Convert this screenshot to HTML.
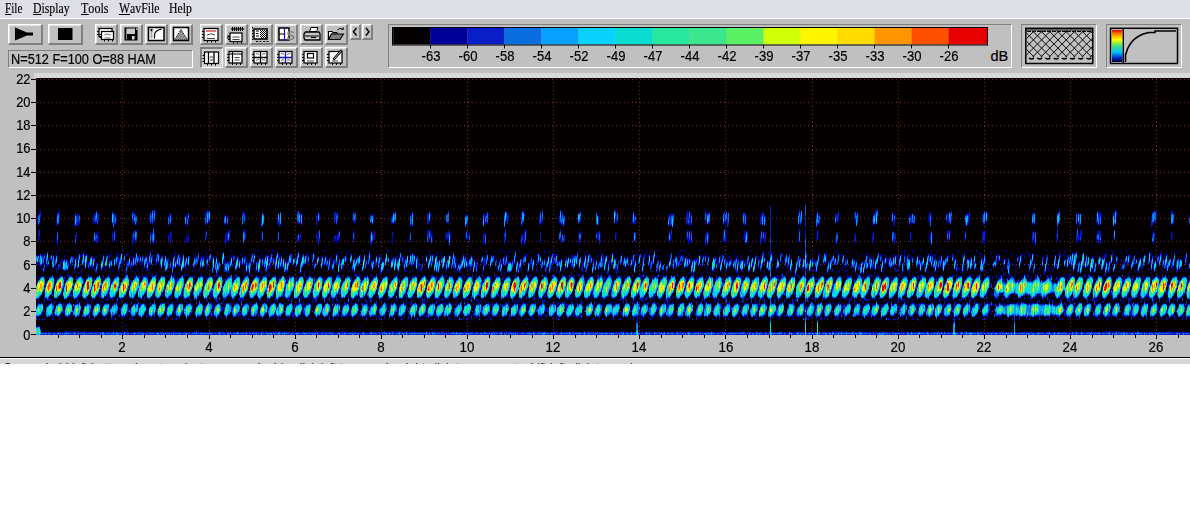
<!DOCTYPE html><html><head><meta charset="utf-8"><style>
*{margin:0;padding:0;box-sizing:border-box}
html,body{width:1190px;height:512px;overflow:hidden;background:#fff;position:relative;font-family:"Liberation Sans",sans-serif}
.a{position:absolute}
#menu{position:absolute;left:0;top:0;width:1190px;height:18px;background:#dddee6}
.m{position:absolute;top:2px;font-family:"Liberation Serif",serif;font-size:14px;line-height:14px;color:#000;white-space:nowrap;transform-origin:left top;-webkit-text-stroke:0.15px #000}
.m u{text-decoration:none;position:relative}
.m u:after{content:"";position:absolute;left:0;right:0;top:13px;height:1px;background:#000}
#tb{position:absolute;left:0;top:18px;width:1190px;height:339px;background:#c0c0c0;border-top:1px solid #fff}
.b{position:absolute;border-top:1px solid #fff;border-left:1px solid #fff;border-right:2px solid #808080;border-bottom:2px solid #808080;background:#c0c0c0;box-shadow:inset 1px 1px 0 #e4e4e4}
.bp{position:absolute;border-top:2px solid #808080;border-left:2px solid #808080;border-right:1px solid #fff;border-bottom:1px solid #fff;background:conic-gradient(#e4e4e4 25%,#c0c0c0 0 50%,#e4e4e4 0 75%,#c0c0c0 0) 0 0/2px 2px}
.sk{position:absolute;border-top:1px solid #808080;border-left:1px solid #808080;border-right:1px solid #fff;border-bottom:1px solid #fff;background:#c0c0c0}
.t{position:absolute;font-size:14px;line-height:14px;color:#000;white-space:nowrap;-webkit-text-stroke:0.2px #000}
</style></head><body>
<div id="menu">
<span class="m" style="left:4.5px;transform:scaleX(0.8)"><u>F</u>ile</span>
<span class="m" style="left:33px;transform:scaleX(0.84)"><u>D</u>isplay</span>
<span class="m" style="left:80.5px;transform:scaleX(0.86)"><u>T</u>ools</span>
<span class="m" style="left:118.5px;transform:scaleX(0.84)"><u>W</u>avFile</span>
<span class="m" style="left:169px;transform:scaleX(0.84)">Help</span>
</div>
<div id="tb"></div>
<div class="b" style="left:8px;top:24px;width:35px;height:21px"></div>
<div class="b" style="left:48px;top:24px;width:35px;height:21px"></div>
<div class="b" style="left:95px;top:24px;width:23px;height:21px"></div>
<div class="b" style="left:120px;top:24px;width:23px;height:21px"></div>
<div class="b" style="left:145px;top:24px;width:23px;height:21px"></div>
<div class="b" style="left:170px;top:24px;width:23px;height:21px"></div>
<div class="b" style="left:200px;top:24px;width:23px;height:21px"></div>
<div class="b" style="left:225px;top:24px;width:23px;height:21px"></div>
<div class="b" style="left:250px;top:24px;width:23px;height:21px"></div>
<div class="b" style="left:275px;top:24px;width:23px;height:21px"></div>
<div class="b" style="left:300px;top:24px;width:23px;height:21px"></div>
<div class="b" style="left:325px;top:24px;width:23px;height:21px"></div>
<div class="b" style="left:350px;top:24px;width:11px;height:16px"></div>
<div class="b" style="left:362px;top:24px;width:11px;height:16px"></div>
<div class="sk" style="left:8px;top:50px;width:185px;height:18px"></div>
<div class="t" style="left:10.5px;top:52px;transform:scaleX(0.91);transform-origin:left top">N=512 F=100 O=88 HAM</div>
<div class="bp" style="left:200px;top:47px;width:23px;height:21px"></div>
<div class="b" style="left:225px;top:47px;width:23px;height:21px"></div>
<div class="b" style="left:250px;top:47px;width:23px;height:21px"></div>
<div class="b" style="left:275px;top:47px;width:23px;height:21px"></div>
<div class="b" style="left:300px;top:47px;width:23px;height:21px"></div>
<div class="b" style="left:325px;top:47px;width:23px;height:21px"></div>
<div class="sk" style="left:388px;top:24px;width:624px;height:44px"></div>
<div class="sk" style="left:1021px;top:24px;width:76px;height:44px"></div>
<div class="sk" style="left:1106px;top:24px;width:76px;height:44px"></div>
<div class="t" style="left:410.5px;width:40px;text-align:center;top:48.5px;font-size:14.5px;transform:scaleX(0.9)">-63</div>
<div class="t" style="left:447.5px;width:40px;text-align:center;top:48.5px;font-size:14.5px;transform:scaleX(0.9)">-60</div>
<div class="t" style="left:484.5px;width:40px;text-align:center;top:48.5px;font-size:14.5px;transform:scaleX(0.9)">-58</div>
<div class="t" style="left:521.5px;width:40px;text-align:center;top:48.5px;font-size:14.5px;transform:scaleX(0.9)">-54</div>
<div class="t" style="left:558.5px;width:40px;text-align:center;top:48.5px;font-size:14.5px;transform:scaleX(0.9)">-52</div>
<div class="t" style="left:595.5px;width:40px;text-align:center;top:48.5px;font-size:14.5px;transform:scaleX(0.9)">-49</div>
<div class="t" style="left:632.5px;width:40px;text-align:center;top:48.5px;font-size:14.5px;transform:scaleX(0.9)">-47</div>
<div class="t" style="left:669.5px;width:40px;text-align:center;top:48.5px;font-size:14.5px;transform:scaleX(0.9)">-44</div>
<div class="t" style="left:706.5px;width:40px;text-align:center;top:48.5px;font-size:14.5px;transform:scaleX(0.9)">-42</div>
<div class="t" style="left:743.5px;width:40px;text-align:center;top:48.5px;font-size:14.5px;transform:scaleX(0.9)">-39</div>
<div class="t" style="left:780.5px;width:40px;text-align:center;top:48.5px;font-size:14.5px;transform:scaleX(0.9)">-37</div>
<div class="t" style="left:817.5px;width:40px;text-align:center;top:48.5px;font-size:14.5px;transform:scaleX(0.9)">-35</div>
<div class="t" style="left:854.5px;width:40px;text-align:center;top:48.5px;font-size:14.5px;transform:scaleX(0.9)">-33</div>
<div class="t" style="left:891.5px;width:40px;text-align:center;top:48.5px;font-size:14.5px;transform:scaleX(0.9)">-30</div>
<div class="t" style="left:928.5px;width:40px;text-align:center;top:48.5px;font-size:14.5px;transform:scaleX(0.9)">-26</div>
<div class="t" style="left:990.5px;top:48.5px;font-size:14.5px;transform:scaleX(1.0);transform-origin:left top">dB</div>
<div class="t" style="left:0;width:30.5px;text-align:right;top:327.5px;transform:scaleX(0.92);transform-origin:right top">0</div>
<div class="a" style="left:31px;top:334px;width:5px;height:1px;background:#000"></div>
<div class="t" style="left:0;width:30.5px;text-align:right;top:304.2px;transform:scaleX(0.92);transform-origin:right top">2</div>
<div class="a" style="left:31px;top:311px;width:5px;height:1px;background:#000"></div>
<div class="t" style="left:0;width:30.5px;text-align:right;top:281.0px;transform:scaleX(0.92);transform-origin:right top">4</div>
<div class="a" style="left:31px;top:288px;width:5px;height:1px;background:#000"></div>
<div class="t" style="left:0;width:30.5px;text-align:right;top:257.7px;transform:scaleX(0.92);transform-origin:right top">6</div>
<div class="a" style="left:31px;top:264px;width:5px;height:1px;background:#000"></div>
<div class="t" style="left:0;width:30.5px;text-align:right;top:234.4px;transform:scaleX(0.92);transform-origin:right top">8</div>
<div class="a" style="left:31px;top:241px;width:5px;height:1px;background:#000"></div>
<div class="t" style="left:0;width:30.5px;text-align:right;top:211.1px;transform:scaleX(0.92);transform-origin:right top">10</div>
<div class="a" style="left:31px;top:218px;width:5px;height:1px;background:#000"></div>
<div class="t" style="left:0;width:30.5px;text-align:right;top:187.9px;transform:scaleX(0.92);transform-origin:right top">12</div>
<div class="a" style="left:31px;top:195px;width:5px;height:1px;background:#000"></div>
<div class="t" style="left:0;width:30.5px;text-align:right;top:164.6px;transform:scaleX(0.92);transform-origin:right top">14</div>
<div class="a" style="left:31px;top:172px;width:5px;height:1px;background:#000"></div>
<div class="t" style="left:0;width:30.5px;text-align:right;top:141.3px;transform:scaleX(0.92);transform-origin:right top">16</div>
<div class="a" style="left:31px;top:149px;width:5px;height:1px;background:#000"></div>
<div class="t" style="left:0;width:30.5px;text-align:right;top:118.0px;transform:scaleX(0.92);transform-origin:right top">18</div>
<div class="a" style="left:31px;top:125px;width:5px;height:1px;background:#000"></div>
<div class="t" style="left:0;width:30.5px;text-align:right;top:94.8px;transform:scaleX(0.92);transform-origin:right top">20</div>
<div class="a" style="left:31px;top:102px;width:5px;height:1px;background:#000"></div>
<div class="t" style="left:0;width:30.5px;text-align:right;top:71.5px;transform:scaleX(0.92);transform-origin:right top">22</div>
<div class="a" style="left:31px;top:79px;width:5px;height:1px;background:#000"></div>
<div class="t" style="left:102.4px;width:40px;text-align:center;top:339.5px;transform:scaleX(0.95)">2</div>
<div class="t" style="left:188.5px;width:40px;text-align:center;top:339.5px;transform:scaleX(0.95)">4</div>
<div class="t" style="left:274.7px;width:40px;text-align:center;top:339.5px;transform:scaleX(0.95)">6</div>
<div class="t" style="left:360.8px;width:40px;text-align:center;top:339.5px;transform:scaleX(0.95)">8</div>
<div class="t" style="left:447.0px;width:40px;text-align:center;top:339.5px;transform:scaleX(0.95)">10</div>
<div class="t" style="left:533.2px;width:40px;text-align:center;top:339.5px;transform:scaleX(0.95)">12</div>
<div class="t" style="left:619.3px;width:40px;text-align:center;top:339.5px;transform:scaleX(0.95)">14</div>
<div class="t" style="left:705.5px;width:40px;text-align:center;top:339.5px;transform:scaleX(0.95)">16</div>
<div class="t" style="left:791.6px;width:40px;text-align:center;top:339.5px;transform:scaleX(0.95)">18</div>
<div class="t" style="left:877.8px;width:40px;text-align:center;top:339.5px;transform:scaleX(0.95)">20</div>
<div class="t" style="left:964.0px;width:40px;text-align:center;top:339.5px;transform:scaleX(0.95)">22</div>
<div class="t" style="left:1050.1px;width:40px;text-align:center;top:339.5px;transform:scaleX(0.95)">24</div>
<div class="t" style="left:1136.3px;width:40px;text-align:center;top:339.5px;transform:scaleX(0.95)">26</div>
<div class="a" style="left:58px;top:335px;width:1px;height:2.5px;background:#000"></div>
<div class="a" style="left:79px;top:335px;width:1px;height:2.5px;background:#000"></div>
<div class="a" style="left:101px;top:335px;width:1px;height:2.5px;background:#000"></div>
<div class="a" style="left:122px;top:335px;width:1px;height:4px;background:#000"></div>
<div class="a" style="left:144px;top:335px;width:1px;height:2.5px;background:#000"></div>
<div class="a" style="left:165px;top:335px;width:1px;height:2.5px;background:#000"></div>
<div class="a" style="left:187px;top:335px;width:1px;height:2.5px;background:#000"></div>
<div class="a" style="left:209px;top:335px;width:1px;height:4px;background:#000"></div>
<div class="a" style="left:230px;top:335px;width:1px;height:2.5px;background:#000"></div>
<div class="a" style="left:252px;top:335px;width:1px;height:2.5px;background:#000"></div>
<div class="a" style="left:273px;top:335px;width:1px;height:2.5px;background:#000"></div>
<div class="a" style="left:295px;top:335px;width:1px;height:4px;background:#000"></div>
<div class="a" style="left:316px;top:335px;width:1px;height:2.5px;background:#000"></div>
<div class="a" style="left:338px;top:335px;width:1px;height:2.5px;background:#000"></div>
<div class="a" style="left:359px;top:335px;width:1px;height:2.5px;background:#000"></div>
<div class="a" style="left:381px;top:335px;width:1px;height:4px;background:#000"></div>
<div class="a" style="left:402px;top:335px;width:1px;height:2.5px;background:#000"></div>
<div class="a" style="left:424px;top:335px;width:1px;height:2.5px;background:#000"></div>
<div class="a" style="left:445px;top:335px;width:1px;height:2.5px;background:#000"></div>
<div class="a" style="left:467px;top:335px;width:1px;height:4px;background:#000"></div>
<div class="a" style="left:489px;top:335px;width:1px;height:2.5px;background:#000"></div>
<div class="a" style="left:510px;top:335px;width:1px;height:2.5px;background:#000"></div>
<div class="a" style="left:532px;top:335px;width:1px;height:2.5px;background:#000"></div>
<div class="a" style="left:553px;top:335px;width:1px;height:4px;background:#000"></div>
<div class="a" style="left:575px;top:335px;width:1px;height:2.5px;background:#000"></div>
<div class="a" style="left:596px;top:335px;width:1px;height:2.5px;background:#000"></div>
<div class="a" style="left:618px;top:335px;width:1px;height:2.5px;background:#000"></div>
<div class="a" style="left:639px;top:335px;width:1px;height:4px;background:#000"></div>
<div class="a" style="left:661px;top:335px;width:1px;height:2.5px;background:#000"></div>
<div class="a" style="left:682px;top:335px;width:1px;height:2.5px;background:#000"></div>
<div class="a" style="left:704px;top:335px;width:1px;height:2.5px;background:#000"></div>
<div class="a" style="left:725px;top:335px;width:1px;height:4px;background:#000"></div>
<div class="a" style="left:747px;top:335px;width:1px;height:2.5px;background:#000"></div>
<div class="a" style="left:769px;top:335px;width:1px;height:2.5px;background:#000"></div>
<div class="a" style="left:790px;top:335px;width:1px;height:2.5px;background:#000"></div>
<div class="a" style="left:812px;top:335px;width:1px;height:4px;background:#000"></div>
<div class="a" style="left:833px;top:335px;width:1px;height:2.5px;background:#000"></div>
<div class="a" style="left:855px;top:335px;width:1px;height:2.5px;background:#000"></div>
<div class="a" style="left:876px;top:335px;width:1px;height:2.5px;background:#000"></div>
<div class="a" style="left:898px;top:335px;width:1px;height:4px;background:#000"></div>
<div class="a" style="left:919px;top:335px;width:1px;height:2.5px;background:#000"></div>
<div class="a" style="left:941px;top:335px;width:1px;height:2.5px;background:#000"></div>
<div class="a" style="left:962px;top:335px;width:1px;height:2.5px;background:#000"></div>
<div class="a" style="left:984px;top:335px;width:1px;height:4px;background:#000"></div>
<div class="a" style="left:1006px;top:335px;width:1px;height:2.5px;background:#000"></div>
<div class="a" style="left:1027px;top:335px;width:1px;height:2.5px;background:#000"></div>
<div class="a" style="left:1049px;top:335px;width:1px;height:2.5px;background:#000"></div>
<div class="a" style="left:1070px;top:335px;width:1px;height:4px;background:#000"></div>
<div class="a" style="left:1092px;top:335px;width:1px;height:2.5px;background:#000"></div>
<div class="a" style="left:1113px;top:335px;width:1px;height:2.5px;background:#000"></div>
<div class="a" style="left:1135px;top:335px;width:1px;height:2.5px;background:#000"></div>
<div class="a" style="left:1156px;top:335px;width:1px;height:4px;background:#000"></div>
<div class="a" style="left:1178px;top:335px;width:1px;height:2.5px;background:#000"></div>
<div class="a" style="left:34px;top:73px;width:1156px;height:5px;background:#d8d8d8"></div>
<svg class="a" style="left:36px;top:78px" width="1154" height="257">
<defs><filter id="sp" x="0" y="0" width="1154" height="257" filterUnits="userSpaceOnUse" color-interpolation-filters="sRGB"><feColorMatrix in="SourceGraphic" type="matrix" values="1 0 0 0 0 1 0 0 0 0 1 0 0 0 0 0 0 0 0 1" result="r"/><feGaussianBlur in="r" stdDeviation="0.7 1.2" result="field"/><feTurbulence type="fractalNoise" baseFrequency="0.6 0.05" numOctaves="2" seed="4" result="noise"/><feColorMatrix in="noise" type="matrix" values="1.7 0 0 0 -0.35 1.7 0 0 0 -0.35 1.7 0 0 0 -0.35 0 0 0 0 1" result="ng"/><feComposite in="field" in2="ng" operator="arithmetic" k1="0.8" k2="0.55" k3="0" k4="0" result="mod0"/><feColorMatrix in="SourceGraphic" type="matrix" values="0 0 1 0 0 0 0 1 0 0 0 0 1 0 0 0 0 0 0 1" result="hm"/><feTurbulence type="fractalNoise" baseFrequency="0.6 0.2" numOctaves="2" seed="9" result="hn"/><feComponentTransfer in="hn" result="hns"><feFuncR type="linear" slope="2.5" intercept="-1.25"/><feFuncG type="linear" slope="2.5" intercept="-1.25"/><feFuncB type="linear" slope="2.5" intercept="-1.25"/><feFuncA type="table" tableValues="1 1"/></feComponentTransfer><feColorMatrix in="hns" type="matrix" values="1 0 0 0 0 1 0 0 0 0 1 0 0 0 0 0 0 0 0 1" result="hng"/><feComposite in="hm" in2="hng" operator="arithmetic" k1="0.45" k2="0" k3="0" k4="0" result="haze"/><feComposite in="mod0" in2="haze" operator="arithmetic" k1="0" k2="1" k3="1" k4="0" result="mod"/><feComponentTransfer in="mod" result="cm"><feFuncR type="discrete" tableValues="0.020 0.000 0.039 0.039 0.039 0.039 0.039 0.157 0.235 0.353 0.824 1.000 1.000 1.000 1.000 0.902"/><feFuncG type="discrete" tableValues="0.000 0.000 0.118 0.431 0.627 0.824 0.863 0.902 0.902 0.941 1.000 0.961 0.863 0.588 0.314 0.000"/><feFuncB type="discrete" tableValues="0.000 0.588 0.784 0.878 1.000 1.000 0.824 0.627 0.549 0.392 0.039 0.000 0.000 0.000 0.000 0.000"/><feFuncA type="table" tableValues="1 1"/></feComponentTransfer><feComponentTransfer in="mod" result="mi"><feFuncR type="discrete" tableValues="1 0 0 0 0 0 0 0 0 0 0 0 0 0 0 0 "/><feFuncG type="discrete" tableValues="1 0 0 0 0 0 0 0 0 0 0 0 0 0 0 0 "/><feFuncB type="discrete" tableValues="1 0 0 0 0 0 0 0 0 0 0 0 0 0 0 0 "/><feFuncA type="table" tableValues="1 1"/></feComponentTransfer><feColorMatrix in="SourceGraphic" type="matrix" values="0 0.42 0 0 0 0 0.2 0 0 0 0 0.22 0 0 0 0 0 0 0 1" result="grid"/><feComposite in="grid" in2="mi" operator="arithmetic" k1="1" k2="0" k3="0" k4="0" result="gm"/><feComposite in="cm" in2="gm" operator="arithmetic" k1="0" k2="1" k3="1" k4="0" result="fin"/><feGaussianBlur in="fin" stdDeviation="0.6"/></filter></defs>
<g filter="url(#sp)"><rect width="1154" height="257" fill="#000"/>
<g fill="#00f"><rect x="0" y="122" width="1154" height="50" fill-opacity="0.1"/><rect x="0" y="172" width="1154" height="25" fill-opacity="0.35"/><rect x="0" y="197" width="1154" height="45" fill-opacity="0.6"/><rect x="0" y="242" width="1154" height="14" fill-opacity="0.2"/></g>
<g stroke="#0f0" stroke-width="1" stroke-dasharray="1 3"><line x1="0" y1="233.5" x2="1154" y2="233.5"/><line x1="0" y1="210.5" x2="1154" y2="210.5"/><line x1="0" y1="186.5" x2="1154" y2="186.5"/><line x1="0" y1="163.5" x2="1154" y2="163.5"/><line x1="0" y1="140.5" x2="1154" y2="140.5"/><line x1="0" y1="117.5" x2="1154" y2="117.5"/><line x1="0" y1="94.5" x2="1154" y2="94.5"/><line x1="0" y1="71.5" x2="1154" y2="71.5"/><line x1="0" y1="47.5" x2="1154" y2="47.5"/><line x1="0" y1="24.5" x2="1154" y2="24.5"/><line x1="0" y1="1.5" x2="1154" y2="1.5"/><line x1="0" y1="1.5" x2="1154" y2="1.5"/><line x1="86.5" y1="0" x2="86.5" y2="257"/><line x1="173.5" y1="0" x2="173.5" y2="257"/><line x1="259.5" y1="0" x2="259.5" y2="257"/><line x1="345.5" y1="0" x2="345.5" y2="257"/><line x1="431.5" y1="0" x2="431.5" y2="257"/><line x1="517.5" y1="0" x2="517.5" y2="257"/><line x1="603.5" y1="0" x2="603.5" y2="257"/><line x1="689.5" y1="0" x2="689.5" y2="257"/><line x1="776.5" y1="0" x2="776.5" y2="257"/><line x1="862.5" y1="0" x2="862.5" y2="257"/><line x1="948.5" y1="0" x2="948.5" y2="257"/><line x1="1034.5" y1="0" x2="1034.5" y2="257"/><line x1="1120.5" y1="0" x2="1120.5" y2="257"/></g>
<g fill="#f00">
<rect x="0" y="255" width="1154" height="1.2" fill-opacity="0.55"/>
<rect x="734.0" y="127" width="1" height="130" fill-opacity="0.18"/>
<rect x="734.0" y="245" width="1" height="12" fill-opacity="0.3"/>
<rect x="769.0" y="127" width="1" height="130" fill-opacity="0.18"/>
<rect x="769.0" y="245" width="1" height="12" fill-opacity="0.3"/>
<rect x="600.5" y="222" width="1" height="35" fill-opacity="0.18"/>
<rect x="600.5" y="245" width="1" height="12" fill-opacity="0.3"/>
<rect x="781.0" y="242" width="1" height="15" fill-opacity="0.21"/>
<rect x="781.0" y="245" width="1" height="12" fill-opacity="0.3"/>
<rect x="917.5" y="222" width="1" height="35" fill-opacity="0.18"/>
<rect x="917.5" y="245" width="1" height="12" fill-opacity="0.3"/>
<rect x="978.0" y="237" width="1" height="20" fill-opacity="0.18"/>
<rect x="978.0" y="245" width="1" height="12" fill-opacity="0.3"/>
<ellipse cx="2.0" cy="253.0" rx="2.5" ry="4.0" fill-opacity="0.50"/>
<ellipse cx="994.0" cy="210.0" rx="36.0" ry="6.0" fill-opacity="0.36"/>
<ellipse cx="994.0" cy="232.0" rx="36.0" ry="6.0" fill-opacity="0.28"/>
<ellipse cx="4.1" cy="209.5" rx="3.8" ry="11.0" fill-opacity="0.45" transform="rotate(18 4.1 209.5)"/>
<ellipse cx="4.0" cy="208.5" rx="2.9" ry="6.0" fill-opacity="0.60" transform="rotate(20 4.0 208.5)"/>
<ellipse cx="4.3" cy="208.0" rx="1.7" ry="2.3" fill-opacity="0.40" transform="rotate(20 4.3 208.0)"/>
<ellipse cx="3.4" cy="232.0" rx="3.4" ry="6.6" fill-opacity="0.36" transform="rotate(20 3.4 232.0)"/>
<ellipse cx="4.0" cy="232.0" rx="1.9" ry="2.8" fill-opacity="0.38" transform="rotate(20 4.0 232.0)"/>
<ellipse cx="0.3" cy="181.3" rx="0.7" ry="4.9" fill-opacity="0.35" transform="rotate(8 0.3 181.3)"/>
<ellipse cx="1.9" cy="180.7" rx="0.7" ry="3.8" fill-opacity="0.39" transform="rotate(8 1.9 180.7)"/>
<ellipse cx="4.3" cy="180.7" rx="0.7" ry="4.6" fill-opacity="0.29" transform="rotate(8 4.3 180.7)"/>
<ellipse cx="5.4" cy="182.8" rx="0.7" ry="5.1" fill-opacity="0.40" transform="rotate(8 5.4 182.8)"/>
<ellipse cx="7.6" cy="181.4" rx="0.7" ry="4.8" fill-opacity="0.31" transform="rotate(8 7.6 181.4)"/>
<ellipse cx="2.3" cy="142.2" rx="0.8" ry="6.2" fill-opacity="0.24" transform="rotate(3 2.3 142.2)"/>
<ellipse cx="3.9" cy="138.6" rx="0.8" ry="6.6" fill-opacity="0.21" transform="rotate(3 3.9 138.6)"/>
<ellipse cx="2.8" cy="158.3" rx="0.8" ry="8.0" fill-opacity="0.16" transform="rotate(3 2.8 158.3)"/>
<ellipse cx="13.5" cy="209.5" rx="3.8" ry="11.0" fill-opacity="0.42" transform="rotate(18 13.5 209.5)"/>
<ellipse cx="13.2" cy="208.5" rx="2.9" ry="6.0" fill-opacity="0.56" transform="rotate(20 13.2 208.5)"/>
<ellipse cx="13.7" cy="232.0" rx="3.4" ry="6.6" fill-opacity="0.33" transform="rotate(20 13.7 232.0)"/>
<ellipse cx="13.2" cy="232.0" rx="1.9" ry="2.8" fill-opacity="0.35" transform="rotate(20 13.2 232.0)"/>
<ellipse cx="8.2" cy="189.6" rx="0.7" ry="4.4" fill-opacity="0.27" transform="rotate(8 8.2 189.6)"/>
<ellipse cx="10.9" cy="180.8" rx="0.7" ry="6.4" fill-opacity="0.39" transform="rotate(8 10.9 180.8)"/>
<ellipse cx="12.4" cy="185.0" rx="0.7" ry="3.1" fill-opacity="0.35" transform="rotate(8 12.4 185.0)"/>
<ellipse cx="15.1" cy="180.1" rx="0.7" ry="3.3" fill-opacity="0.27" transform="rotate(8 15.1 180.1)"/>
<ellipse cx="16.9" cy="182.6" rx="0.7" ry="4.7" fill-opacity="0.31" transform="rotate(8 16.9 182.6)"/>
<ellipse cx="22.8" cy="209.5" rx="3.8" ry="11.0" fill-opacity="0.46" transform="rotate(18 22.8 209.5)"/>
<ellipse cx="22.6" cy="208.5" rx="2.9" ry="6.0" fill-opacity="0.62" transform="rotate(20 22.6 208.5)"/>
<ellipse cx="22.9" cy="208.0" rx="1.7" ry="2.3" fill-opacity="0.41" transform="rotate(20 22.9 208.0)"/>
<ellipse cx="22.5" cy="232.0" rx="3.4" ry="6.6" fill-opacity="0.37" transform="rotate(20 22.5 232.0)"/>
<ellipse cx="22.6" cy="232.0" rx="1.9" ry="2.8" fill-opacity="0.39" transform="rotate(20 22.6 232.0)"/>
<ellipse cx="17.4" cy="187.5" rx="0.7" ry="3.1" fill-opacity="0.34" transform="rotate(8 17.4 187.5)"/>
<ellipse cx="20.3" cy="182.3" rx="0.7" ry="5.8" fill-opacity="0.33" transform="rotate(8 20.3 182.3)"/>
<ellipse cx="22.7" cy="189.2" rx="0.7" ry="4.0" fill-opacity="0.26" transform="rotate(8 22.7 189.2)"/>
<ellipse cx="24.4" cy="186.8" rx="0.7" ry="3.8" fill-opacity="0.28" transform="rotate(8 24.4 186.8)"/>
<ellipse cx="27.6" cy="186.6" rx="0.7" ry="4.8" fill-opacity="0.38" transform="rotate(8 27.6 186.6)"/>
<ellipse cx="21.3" cy="141.7" rx="0.8" ry="7.1" fill-opacity="0.22" transform="rotate(3 21.3 141.7)"/>
<ellipse cx="22.7" cy="139.4" rx="0.8" ry="7.7" fill-opacity="0.23" transform="rotate(3 22.7 139.4)"/>
<ellipse cx="21.4" cy="160.3" rx="0.8" ry="7.4" fill-opacity="0.22" transform="rotate(3 21.4 160.3)"/>
<ellipse cx="32.2" cy="209.5" rx="3.8" ry="11.0" fill-opacity="0.47" transform="rotate(18 32.2 209.5)"/>
<ellipse cx="32.4" cy="208.5" rx="2.9" ry="6.0" fill-opacity="0.62" transform="rotate(20 32.4 208.5)"/>
<ellipse cx="32.7" cy="208.0" rx="1.7" ry="2.3" fill-opacity="0.41" transform="rotate(20 32.7 208.0)"/>
<ellipse cx="32.3" cy="232.0" rx="3.4" ry="6.6" fill-opacity="0.37" transform="rotate(20 32.3 232.0)"/>
<ellipse cx="32.4" cy="232.0" rx="1.9" ry="2.8" fill-opacity="0.39" transform="rotate(20 32.4 232.0)"/>
<ellipse cx="28.6" cy="188.3" rx="0.7" ry="4.5" fill-opacity="0.33" transform="rotate(8 28.6 188.3)"/>
<ellipse cx="30.4" cy="187.2" rx="0.7" ry="6.4" fill-opacity="0.35" transform="rotate(8 30.4 187.2)"/>
<ellipse cx="32.0" cy="188.3" rx="0.7" ry="4.1" fill-opacity="0.35" transform="rotate(8 32.0 188.3)"/>
<ellipse cx="34.8" cy="182.8" rx="0.7" ry="4.4" fill-opacity="0.35" transform="rotate(8 34.8 182.8)"/>
<ellipse cx="41.8" cy="209.5" rx="3.8" ry="11.0" fill-opacity="0.42" transform="rotate(18 41.8 209.5)"/>
<ellipse cx="41.7" cy="208.5" rx="2.9" ry="6.0" fill-opacity="0.56" transform="rotate(20 41.7 208.5)"/>
<ellipse cx="42.0" cy="208.0" rx="1.7" ry="2.3" fill-opacity="0.37" transform="rotate(20 42.0 208.0)"/>
<ellipse cx="41.1" cy="232.0" rx="3.4" ry="6.6" fill-opacity="0.34" transform="rotate(20 41.1 232.0)"/>
<ellipse cx="41.7" cy="232.0" rx="1.9" ry="2.8" fill-opacity="0.35" transform="rotate(20 41.7 232.0)"/>
<ellipse cx="36.8" cy="181.4" rx="0.7" ry="3.2" fill-opacity="0.35" transform="rotate(8 36.8 181.4)"/>
<ellipse cx="39.3" cy="186.3" rx="0.7" ry="5.6" fill-opacity="0.37" transform="rotate(8 39.3 186.3)"/>
<ellipse cx="42.3" cy="186.8" rx="0.7" ry="3.8" fill-opacity="0.33" transform="rotate(8 42.3 186.8)"/>
<ellipse cx="43.3" cy="180.1" rx="0.7" ry="4.9" fill-opacity="0.36" transform="rotate(8 43.3 180.1)"/>
<ellipse cx="39.5" cy="142.3" rx="0.8" ry="6.3" fill-opacity="0.32" transform="rotate(3 39.5 142.3)"/>
<ellipse cx="41.0" cy="141.9" rx="0.8" ry="6.9" fill-opacity="0.23" transform="rotate(3 41.0 141.9)"/>
<ellipse cx="43.0" cy="142.1" rx="0.8" ry="5.9" fill-opacity="0.25" transform="rotate(3 43.0 142.1)"/>
<ellipse cx="39.9" cy="160.6" rx="0.8" ry="5.5" fill-opacity="0.21" transform="rotate(3 39.9 160.6)"/>
<ellipse cx="51.3" cy="209.5" rx="3.8" ry="11.0" fill-opacity="0.46" transform="rotate(18 51.3 209.5)"/>
<ellipse cx="51.0" cy="208.5" rx="2.9" ry="6.0" fill-opacity="0.61" transform="rotate(20 51.0 208.5)"/>
<ellipse cx="50.9" cy="232.0" rx="3.4" ry="6.6" fill-opacity="0.37" transform="rotate(20 50.9 232.0)"/>
<ellipse cx="51.0" cy="232.0" rx="1.9" ry="2.8" fill-opacity="0.39" transform="rotate(20 51.0 232.0)"/>
<ellipse cx="47.3" cy="181.0" rx="0.7" ry="6.5" fill-opacity="0.37" transform="rotate(8 47.3 181.0)"/>
<ellipse cx="49.4" cy="181.2" rx="0.7" ry="4.0" fill-opacity="0.31" transform="rotate(8 49.4 181.2)"/>
<ellipse cx="50.2" cy="183.1" rx="0.7" ry="6.9" fill-opacity="0.39" transform="rotate(8 50.2 183.1)"/>
<ellipse cx="52.7" cy="187.2" rx="0.7" ry="3.1" fill-opacity="0.33" transform="rotate(8 52.7 187.2)"/>
<ellipse cx="54.6" cy="183.4" rx="0.7" ry="4.7" fill-opacity="0.30" transform="rotate(8 54.6 183.4)"/>
<ellipse cx="60.1" cy="209.5" rx="3.8" ry="11.0" fill-opacity="0.46" transform="rotate(18 60.1 209.5)"/>
<ellipse cx="60.4" cy="208.5" rx="2.9" ry="6.0" fill-opacity="0.62" transform="rotate(20 60.4 208.5)"/>
<ellipse cx="60.3" cy="232.0" rx="3.4" ry="6.6" fill-opacity="0.37" transform="rotate(20 60.3 232.0)"/>
<ellipse cx="60.4" cy="232.0" rx="1.9" ry="2.8" fill-opacity="0.39" transform="rotate(20 60.4 232.0)"/>
<ellipse cx="55.4" cy="183.4" rx="0.7" ry="6.2" fill-opacity="0.28" transform="rotate(8 55.4 183.4)"/>
<ellipse cx="57.5" cy="185.2" rx="0.7" ry="5.9" fill-opacity="0.38" transform="rotate(8 57.5 185.2)"/>
<ellipse cx="60.6" cy="189.5" rx="0.7" ry="5.0" fill-opacity="0.39" transform="rotate(8 60.6 189.5)"/>
<ellipse cx="58.3" cy="140.7" rx="0.8" ry="5.1" fill-opacity="0.26" transform="rotate(3 58.3 140.7)"/>
<ellipse cx="60.2" cy="139.5" rx="0.8" ry="6.8" fill-opacity="0.31" transform="rotate(3 60.2 139.5)"/>
<ellipse cx="61.9" cy="140.9" rx="0.8" ry="5.6" fill-opacity="0.22" transform="rotate(3 61.9 140.9)"/>
<ellipse cx="58.4" cy="159.3" rx="0.8" ry="4.8" fill-opacity="0.20" transform="rotate(3 58.4 159.3)"/>
<ellipse cx="60.1" cy="159.4" rx="0.8" ry="4.1" fill-opacity="0.25" transform="rotate(3 60.1 159.4)"/>
<ellipse cx="62.0" cy="158.6" rx="0.8" ry="7.2" fill-opacity="0.21" transform="rotate(3 62.0 158.6)"/>
<ellipse cx="69.5" cy="209.5" rx="3.8" ry="11.0" fill-opacity="0.41" transform="rotate(18 69.5 209.5)"/>
<ellipse cx="69.3" cy="208.5" rx="2.9" ry="6.0" fill-opacity="0.55" transform="rotate(20 69.3 208.5)"/>
<ellipse cx="69.6" cy="208.0" rx="1.7" ry="2.3" fill-opacity="0.37" transform="rotate(20 69.6 208.0)"/>
<ellipse cx="69.4" cy="232.0" rx="3.4" ry="6.6" fill-opacity="0.33" transform="rotate(20 69.4 232.0)"/>
<ellipse cx="69.3" cy="232.0" rx="1.9" ry="2.8" fill-opacity="0.35" transform="rotate(20 69.3 232.0)"/>
<ellipse cx="65.5" cy="188.0" rx="0.7" ry="4.6" fill-opacity="0.29" transform="rotate(8 65.5 188.0)"/>
<ellipse cx="67.0" cy="183.4" rx="0.7" ry="6.6" fill-opacity="0.39" transform="rotate(8 67.0 183.4)"/>
<ellipse cx="69.9" cy="185.2" rx="0.7" ry="3.4" fill-opacity="0.32" transform="rotate(8 69.9 185.2)"/>
<ellipse cx="70.7" cy="182.6" rx="0.7" ry="5.8" fill-opacity="0.40" transform="rotate(8 70.7 182.6)"/>
<ellipse cx="78.3" cy="209.5" rx="3.8" ry="11.0" fill-opacity="0.36" transform="rotate(18 78.3 209.5)"/>
<ellipse cx="78.6" cy="208.5" rx="2.9" ry="6.0" fill-opacity="0.47" transform="rotate(20 78.6 208.5)"/>
<ellipse cx="78.9" cy="208.0" rx="1.7" ry="2.3" fill-opacity="0.32" transform="rotate(20 78.9 208.0)"/>
<ellipse cx="78.2" cy="232.0" rx="3.4" ry="6.6" fill-opacity="0.28" transform="rotate(20 78.2 232.0)"/>
<ellipse cx="78.6" cy="232.0" rx="1.9" ry="2.8" fill-opacity="0.30" transform="rotate(20 78.6 232.0)"/>
<ellipse cx="73.9" cy="186.2" rx="0.7" ry="3.4" fill-opacity="0.36" transform="rotate(8 73.9 186.2)"/>
<ellipse cx="75.7" cy="185.1" rx="0.7" ry="4.0" fill-opacity="0.29" transform="rotate(8 75.7 185.1)"/>
<ellipse cx="78.6" cy="184.4" rx="0.7" ry="4.5" fill-opacity="0.32" transform="rotate(8 78.6 184.4)"/>
<ellipse cx="80.8" cy="181.6" rx="0.7" ry="3.8" fill-opacity="0.35" transform="rotate(8 80.8 181.6)"/>
<ellipse cx="83.2" cy="185.3" rx="0.7" ry="6.4" fill-opacity="0.35" transform="rotate(8 83.2 185.3)"/>
<ellipse cx="76.6" cy="139.8" rx="0.8" ry="5.6" fill-opacity="0.31" transform="rotate(3 76.6 139.8)"/>
<ellipse cx="77.9" cy="142.5" rx="0.8" ry="7.6" fill-opacity="0.22" transform="rotate(3 77.9 142.5)"/>
<ellipse cx="79.7" cy="141.4" rx="0.8" ry="5.4" fill-opacity="0.21" transform="rotate(3 79.7 141.4)"/>
<ellipse cx="76.6" cy="159.8" rx="0.8" ry="4.8" fill-opacity="0.21" transform="rotate(3 76.6 159.8)"/>
<ellipse cx="78.7" cy="157.4" rx="0.8" ry="6.3" fill-opacity="0.19" transform="rotate(3 78.7 157.4)"/>
<ellipse cx="87.9" cy="209.5" rx="3.8" ry="11.0" fill-opacity="0.45" transform="rotate(18 87.9 209.5)"/>
<ellipse cx="88.1" cy="208.5" rx="2.9" ry="6.0" fill-opacity="0.60" transform="rotate(20 88.1 208.5)"/>
<ellipse cx="88.4" cy="208.0" rx="1.7" ry="2.3" fill-opacity="0.40" transform="rotate(20 88.4 208.0)"/>
<ellipse cx="88.4" cy="232.0" rx="3.4" ry="6.6" fill-opacity="0.36" transform="rotate(20 88.4 232.0)"/>
<ellipse cx="88.1" cy="232.0" rx="1.9" ry="2.8" fill-opacity="0.38" transform="rotate(20 88.1 232.0)"/>
<ellipse cx="83.6" cy="186.9" rx="0.7" ry="3.8" fill-opacity="0.27" transform="rotate(8 83.6 186.9)"/>
<ellipse cx="85.2" cy="180.4" rx="0.7" ry="5.2" fill-opacity="0.33" transform="rotate(8 85.2 180.4)"/>
<ellipse cx="88.1" cy="181.5" rx="0.7" ry="3.7" fill-opacity="0.29" transform="rotate(8 88.1 181.5)"/>
<ellipse cx="90.7" cy="189.9" rx="0.7" ry="6.7" fill-opacity="0.27" transform="rotate(8 90.7 189.9)"/>
<ellipse cx="98.2" cy="209.5" rx="3.8" ry="11.0" fill-opacity="0.36" transform="rotate(18 98.2 209.5)"/>
<ellipse cx="97.7" cy="208.5" rx="2.9" ry="6.0" fill-opacity="0.48" transform="rotate(20 97.7 208.5)"/>
<ellipse cx="98.0" cy="208.0" rx="1.7" ry="2.3" fill-opacity="0.32" transform="rotate(20 98.0 208.0)"/>
<ellipse cx="98.3" cy="232.0" rx="3.4" ry="6.6" fill-opacity="0.29" transform="rotate(20 98.3 232.0)"/>
<ellipse cx="97.7" cy="232.0" rx="1.9" ry="2.8" fill-opacity="0.30" transform="rotate(20 97.7 232.0)"/>
<ellipse cx="93.1" cy="184.3" rx="0.7" ry="4.4" fill-opacity="0.29" transform="rotate(8 93.1 184.3)"/>
<ellipse cx="95.2" cy="186.3" rx="0.7" ry="3.2" fill-opacity="0.29" transform="rotate(8 95.2 186.3)"/>
<ellipse cx="97.5" cy="183.6" rx="0.7" ry="4.5" fill-opacity="0.39" transform="rotate(8 97.5 183.6)"/>
<ellipse cx="100.0" cy="180.9" rx="0.7" ry="6.2" fill-opacity="0.31" transform="rotate(8 100.0 180.9)"/>
<ellipse cx="96.7" cy="139.3" rx="0.8" ry="6.5" fill-opacity="0.24" transform="rotate(3 96.7 139.3)"/>
<ellipse cx="98.6" cy="139.6" rx="0.8" ry="4.9" fill-opacity="0.29" transform="rotate(3 98.6 139.6)"/>
<ellipse cx="100.0" cy="142.2" rx="0.8" ry="5.0" fill-opacity="0.24" transform="rotate(3 100.0 142.2)"/>
<ellipse cx="97.1" cy="160.1" rx="0.8" ry="7.1" fill-opacity="0.19" transform="rotate(3 97.1 160.1)"/>
<ellipse cx="98.9" cy="157.3" rx="0.8" ry="5.4" fill-opacity="0.20" transform="rotate(3 98.9 157.3)"/>
<ellipse cx="100.0" cy="158.4" rx="0.8" ry="6.6" fill-opacity="0.21" transform="rotate(3 100.0 158.4)"/>
<ellipse cx="107.0" cy="209.5" rx="3.8" ry="11.0" fill-opacity="0.38" transform="rotate(18 107.0 209.5)"/>
<ellipse cx="106.6" cy="208.5" rx="2.9" ry="6.0" fill-opacity="0.51" transform="rotate(20 106.6 208.5)"/>
<ellipse cx="106.9" cy="208.0" rx="1.7" ry="2.3" fill-opacity="0.34" transform="rotate(20 106.9 208.0)"/>
<ellipse cx="106.2" cy="232.0" rx="3.4" ry="6.6" fill-opacity="0.30" transform="rotate(20 106.2 232.0)"/>
<ellipse cx="106.6" cy="232.0" rx="1.9" ry="2.8" fill-opacity="0.32" transform="rotate(20 106.6 232.0)"/>
<ellipse cx="101.9" cy="181.8" rx="0.7" ry="3.3" fill-opacity="0.33" transform="rotate(8 101.9 181.8)"/>
<ellipse cx="104.2" cy="182.1" rx="0.7" ry="3.5" fill-opacity="0.32" transform="rotate(8 104.2 182.1)"/>
<ellipse cx="106.6" cy="181.1" rx="0.7" ry="3.4" fill-opacity="0.29" transform="rotate(8 106.6 181.1)"/>
<ellipse cx="108.6" cy="185.0" rx="0.7" ry="6.0" fill-opacity="0.35" transform="rotate(8 108.6 185.0)"/>
<ellipse cx="110.1" cy="182.6" rx="0.7" ry="4.1" fill-opacity="0.31" transform="rotate(8 110.1 182.6)"/>
<ellipse cx="115.5" cy="209.5" rx="3.8" ry="11.0" fill-opacity="0.42" transform="rotate(18 115.5 209.5)"/>
<ellipse cx="115.6" cy="208.5" rx="2.9" ry="6.0" fill-opacity="0.56" transform="rotate(20 115.6 208.5)"/>
<ellipse cx="115.9" cy="208.0" rx="1.7" ry="2.3" fill-opacity="0.37" transform="rotate(20 115.9 208.0)"/>
<ellipse cx="116.3" cy="232.0" rx="3.4" ry="6.6" fill-opacity="0.33" transform="rotate(20 116.3 232.0)"/>
<ellipse cx="115.6" cy="232.0" rx="1.9" ry="2.8" fill-opacity="0.35" transform="rotate(20 115.6 232.0)"/>
<ellipse cx="111.3" cy="188.1" rx="0.7" ry="3.3" fill-opacity="0.34" transform="rotate(8 111.3 188.1)"/>
<ellipse cx="113.7" cy="180.5" rx="0.7" ry="6.7" fill-opacity="0.28" transform="rotate(8 113.7 180.5)"/>
<ellipse cx="115.5" cy="181.7" rx="0.7" ry="5.0" fill-opacity="0.35" transform="rotate(8 115.5 181.7)"/>
<ellipse cx="114.5" cy="140.1" rx="0.8" ry="5.6" fill-opacity="0.26" transform="rotate(3 114.5 140.1)"/>
<ellipse cx="116.5" cy="139.6" rx="0.8" ry="7.8" fill-opacity="0.28" transform="rotate(3 116.5 139.6)"/>
<ellipse cx="118.5" cy="138.6" rx="0.8" ry="7.2" fill-opacity="0.27" transform="rotate(3 118.5 138.6)"/>
<ellipse cx="114.7" cy="160.0" rx="0.8" ry="5.6" fill-opacity="0.24" transform="rotate(3 114.7 160.0)"/>
<ellipse cx="117.1" cy="157.2" rx="0.8" ry="8.0" fill-opacity="0.24" transform="rotate(3 117.1 157.2)"/>
<ellipse cx="118.2" cy="160.6" rx="0.8" ry="5.7" fill-opacity="0.20" transform="rotate(3 118.2 160.6)"/>
<ellipse cx="124.2" cy="209.5" rx="3.8" ry="11.0" fill-opacity="0.47" transform="rotate(18 124.2 209.5)"/>
<ellipse cx="124.4" cy="208.5" rx="2.9" ry="6.0" fill-opacity="0.63" transform="rotate(20 124.4 208.5)"/>
<ellipse cx="124.7" cy="208.0" rx="1.7" ry="2.3" fill-opacity="0.42" transform="rotate(20 124.7 208.0)"/>
<ellipse cx="125.3" cy="232.0" rx="3.4" ry="6.6" fill-opacity="0.38" transform="rotate(20 125.3 232.0)"/>
<ellipse cx="124.4" cy="232.0" rx="1.9" ry="2.8" fill-opacity="0.40" transform="rotate(20 124.4 232.0)"/>
<ellipse cx="120.6" cy="181.4" rx="0.7" ry="6.8" fill-opacity="0.29" transform="rotate(8 120.6 181.4)"/>
<ellipse cx="122.5" cy="180.5" rx="0.7" ry="4.7" fill-opacity="0.28" transform="rotate(8 122.5 180.5)"/>
<ellipse cx="124.9" cy="183.6" rx="0.7" ry="3.6" fill-opacity="0.31" transform="rotate(8 124.9 183.6)"/>
<ellipse cx="125.9" cy="184.2" rx="0.7" ry="5.4" fill-opacity="0.35" transform="rotate(8 125.9 184.2)"/>
<ellipse cx="129.0" cy="183.6" rx="0.7" ry="6.0" fill-opacity="0.37" transform="rotate(8 129.0 183.6)"/>
<ellipse cx="133.9" cy="209.5" rx="3.8" ry="11.0" fill-opacity="0.37" transform="rotate(18 133.9 209.5)"/>
<ellipse cx="134.1" cy="208.5" rx="2.9" ry="6.0" fill-opacity="0.49" transform="rotate(20 134.1 208.5)"/>
<ellipse cx="134.4" cy="208.0" rx="1.7" ry="2.3" fill-opacity="0.33" transform="rotate(20 134.4 208.0)"/>
<ellipse cx="134.1" cy="232.0" rx="3.4" ry="6.6" fill-opacity="0.29" transform="rotate(20 134.1 232.0)"/>
<ellipse cx="134.1" cy="232.0" rx="1.9" ry="2.8" fill-opacity="0.31" transform="rotate(20 134.1 232.0)"/>
<ellipse cx="130.2" cy="187.8" rx="0.7" ry="5.5" fill-opacity="0.31" transform="rotate(8 130.2 187.8)"/>
<ellipse cx="131.4" cy="186.9" rx="0.7" ry="5.3" fill-opacity="0.34" transform="rotate(8 131.4 186.9)"/>
<ellipse cx="134.2" cy="187.5" rx="0.7" ry="3.8" fill-opacity="0.29" transform="rotate(8 134.2 187.5)"/>
<ellipse cx="137.0" cy="189.2" rx="0.7" ry="6.5" fill-opacity="0.27" transform="rotate(8 137.0 189.2)"/>
<ellipse cx="137.7" cy="182.7" rx="0.7" ry="4.7" fill-opacity="0.35" transform="rotate(8 137.7 182.7)"/>
<ellipse cx="132.6" cy="142.2" rx="0.8" ry="5.1" fill-opacity="0.23" transform="rotate(3 132.6 142.2)"/>
<ellipse cx="134.6" cy="140.4" rx="0.8" ry="5.7" fill-opacity="0.24" transform="rotate(3 134.6 140.4)"/>
<ellipse cx="132.9" cy="160.4" rx="0.8" ry="4.3" fill-opacity="0.16" transform="rotate(3 132.9 160.4)"/>
<ellipse cx="134.8" cy="159.5" rx="0.8" ry="7.1" fill-opacity="0.17" transform="rotate(3 134.8 159.5)"/>
<ellipse cx="143.4" cy="209.5" rx="3.8" ry="11.0" fill-opacity="0.40" transform="rotate(18 143.4 209.5)"/>
<ellipse cx="143.6" cy="208.5" rx="2.9" ry="6.0" fill-opacity="0.54" transform="rotate(20 143.6 208.5)"/>
<ellipse cx="143.9" cy="208.0" rx="1.7" ry="2.3" fill-opacity="0.36" transform="rotate(20 143.9 208.0)"/>
<ellipse cx="143.4" cy="232.0" rx="3.4" ry="6.6" fill-opacity="0.32" transform="rotate(20 143.4 232.0)"/>
<ellipse cx="143.6" cy="232.0" rx="1.9" ry="2.8" fill-opacity="0.34" transform="rotate(20 143.6 232.0)"/>
<ellipse cx="139.7" cy="186.0" rx="0.7" ry="4.2" fill-opacity="0.37" transform="rotate(8 139.7 186.0)"/>
<ellipse cx="141.9" cy="181.8" rx="0.7" ry="5.6" fill-opacity="0.34" transform="rotate(8 141.9 181.8)"/>
<ellipse cx="143.5" cy="183.2" rx="0.7" ry="5.2" fill-opacity="0.32" transform="rotate(8 143.5 183.2)"/>
<ellipse cx="145.8" cy="188.2" rx="0.7" ry="4.9" fill-opacity="0.38" transform="rotate(8 145.8 188.2)"/>
<ellipse cx="147.1" cy="183.1" rx="0.7" ry="6.6" fill-opacity="0.34" transform="rotate(8 147.1 183.1)"/>
<ellipse cx="152.4" cy="209.5" rx="3.8" ry="11.0" fill-opacity="0.44" transform="rotate(18 152.4 209.5)"/>
<ellipse cx="152.4" cy="208.5" rx="2.9" ry="6.0" fill-opacity="0.58" transform="rotate(20 152.4 208.5)"/>
<ellipse cx="152.7" cy="208.0" rx="1.7" ry="2.3" fill-opacity="0.39" transform="rotate(20 152.7 208.0)"/>
<ellipse cx="152.0" cy="232.0" rx="3.4" ry="6.6" fill-opacity="0.35" transform="rotate(20 152.0 232.0)"/>
<ellipse cx="152.4" cy="232.0" rx="1.9" ry="2.8" fill-opacity="0.37" transform="rotate(20 152.4 232.0)"/>
<ellipse cx="147.4" cy="186.6" rx="0.7" ry="4.3" fill-opacity="0.39" transform="rotate(8 147.4 186.6)"/>
<ellipse cx="149.8" cy="184.4" rx="0.7" ry="5.4" fill-opacity="0.39" transform="rotate(8 149.8 184.4)"/>
<ellipse cx="152.6" cy="182.8" rx="0.7" ry="5.1" fill-opacity="0.40" transform="rotate(8 152.6 182.8)"/>
<ellipse cx="149.7" cy="141.8" rx="0.8" ry="4.6" fill-opacity="0.28" transform="rotate(3 149.7 141.8)"/>
<ellipse cx="151.9" cy="141.7" rx="0.8" ry="7.1" fill-opacity="0.24" transform="rotate(3 151.9 141.7)"/>
<ellipse cx="150.4" cy="160.3" rx="0.8" ry="6.3" fill-opacity="0.17" transform="rotate(3 150.4 160.3)"/>
<ellipse cx="152.4" cy="160.5" rx="0.8" ry="5.1" fill-opacity="0.15" transform="rotate(3 152.4 160.5)"/>
<ellipse cx="162.3" cy="209.5" rx="3.8" ry="11.0" fill-opacity="0.41" transform="rotate(18 162.3 209.5)"/>
<ellipse cx="162.3" cy="208.5" rx="2.9" ry="6.0" fill-opacity="0.55" transform="rotate(20 162.3 208.5)"/>
<ellipse cx="162.6" cy="208.0" rx="1.7" ry="2.3" fill-opacity="0.37" transform="rotate(20 162.6 208.0)"/>
<ellipse cx="163.2" cy="232.0" rx="3.4" ry="6.6" fill-opacity="0.33" transform="rotate(20 163.2 232.0)"/>
<ellipse cx="162.3" cy="232.0" rx="1.9" ry="2.8" fill-opacity="0.35" transform="rotate(20 162.3 232.0)"/>
<ellipse cx="158.3" cy="184.2" rx="0.7" ry="5.3" fill-opacity="0.30" transform="rotate(8 158.3 184.2)"/>
<ellipse cx="160.0" cy="183.3" rx="0.7" ry="4.1" fill-opacity="0.27" transform="rotate(8 160.0 183.3)"/>
<ellipse cx="161.9" cy="180.3" rx="0.7" ry="5.6" fill-opacity="0.27" transform="rotate(8 161.9 180.3)"/>
<ellipse cx="164.9" cy="184.2" rx="0.7" ry="5.8" fill-opacity="0.33" transform="rotate(8 164.9 184.2)"/>
<ellipse cx="167.2" cy="183.4" rx="0.7" ry="4.8" fill-opacity="0.31" transform="rotate(8 167.2 183.4)"/>
<ellipse cx="171.9" cy="209.5" rx="3.8" ry="11.0" fill-opacity="0.45" transform="rotate(18 171.9 209.5)"/>
<ellipse cx="172.1" cy="208.5" rx="2.9" ry="6.0" fill-opacity="0.60" transform="rotate(20 172.1 208.5)"/>
<ellipse cx="172.4" cy="208.0" rx="1.7" ry="2.3" fill-opacity="0.40" transform="rotate(20 172.4 208.0)"/>
<ellipse cx="172.1" cy="232.0" rx="3.4" ry="6.6" fill-opacity="0.36" transform="rotate(20 172.1 232.0)"/>
<ellipse cx="172.1" cy="232.0" rx="1.9" ry="2.8" fill-opacity="0.38" transform="rotate(20 172.1 232.0)"/>
<ellipse cx="166.9" cy="186.2" rx="0.7" ry="3.2" fill-opacity="0.37" transform="rotate(8 166.9 186.2)"/>
<ellipse cx="170.6" cy="183.5" rx="0.7" ry="3.0" fill-opacity="0.31" transform="rotate(8 170.6 183.5)"/>
<ellipse cx="171.4" cy="184.6" rx="0.7" ry="5.2" fill-opacity="0.26" transform="rotate(8 171.4 184.6)"/>
<ellipse cx="174.0" cy="180.1" rx="0.7" ry="3.4" fill-opacity="0.39" transform="rotate(8 174.0 180.1)"/>
<ellipse cx="177.1" cy="182.5" rx="0.7" ry="3.6" fill-opacity="0.35" transform="rotate(8 177.1 182.5)"/>
<ellipse cx="169.9" cy="139.7" rx="0.8" ry="7.9" fill-opacity="0.21" transform="rotate(3 169.9 139.7)"/>
<ellipse cx="171.6" cy="139.0" rx="0.8" ry="6.8" fill-opacity="0.29" transform="rotate(3 171.6 139.0)"/>
<ellipse cx="173.3" cy="138.7" rx="0.8" ry="6.1" fill-opacity="0.27" transform="rotate(3 173.3 138.7)"/>
<ellipse cx="170.1" cy="157.8" rx="0.8" ry="5.4" fill-opacity="0.21" transform="rotate(3 170.1 157.8)"/>
<ellipse cx="181.6" cy="209.5" rx="3.8" ry="11.0" fill-opacity="0.42" transform="rotate(18 181.6 209.5)"/>
<ellipse cx="181.6" cy="208.5" rx="2.9" ry="6.0" fill-opacity="0.57" transform="rotate(20 181.6 208.5)"/>
<ellipse cx="181.9" cy="208.0" rx="1.7" ry="2.3" fill-opacity="0.38" transform="rotate(20 181.9 208.0)"/>
<ellipse cx="181.5" cy="232.0" rx="3.4" ry="6.6" fill-opacity="0.34" transform="rotate(20 181.5 232.0)"/>
<ellipse cx="181.6" cy="232.0" rx="1.9" ry="2.8" fill-opacity="0.36" transform="rotate(20 181.6 232.0)"/>
<ellipse cx="176.9" cy="189.1" rx="0.7" ry="6.7" fill-opacity="0.35" transform="rotate(8 176.9 189.1)"/>
<ellipse cx="180.0" cy="185.5" rx="0.7" ry="6.4" fill-opacity="0.33" transform="rotate(8 180.0 185.5)"/>
<ellipse cx="181.3" cy="189.6" rx="0.7" ry="5.6" fill-opacity="0.37" transform="rotate(8 181.3 189.6)"/>
<ellipse cx="183.0" cy="188.6" rx="0.7" ry="4.6" fill-opacity="0.29" transform="rotate(8 183.0 188.6)"/>
<ellipse cx="191.3" cy="209.5" rx="3.8" ry="11.0" fill-opacity="0.37" transform="rotate(18 191.3 209.5)"/>
<ellipse cx="191.0" cy="208.5" rx="2.9" ry="6.0" fill-opacity="0.49" transform="rotate(20 191.0 208.5)"/>
<ellipse cx="191.6" cy="232.0" rx="3.4" ry="6.6" fill-opacity="0.29" transform="rotate(20 191.6 232.0)"/>
<ellipse cx="191.0" cy="232.0" rx="1.9" ry="2.8" fill-opacity="0.31" transform="rotate(20 191.0 232.0)"/>
<ellipse cx="187.0" cy="180.6" rx="0.7" ry="6.7" fill-opacity="0.38" transform="rotate(8 187.0 180.6)"/>
<ellipse cx="189.3" cy="189.1" rx="0.7" ry="4.8" fill-opacity="0.29" transform="rotate(8 189.3 189.1)"/>
<ellipse cx="190.8" cy="188.7" rx="0.7" ry="4.7" fill-opacity="0.37" transform="rotate(8 190.8 188.7)"/>
<ellipse cx="192.6" cy="189.1" rx="0.7" ry="6.2" fill-opacity="0.28" transform="rotate(8 192.6 189.1)"/>
<ellipse cx="189.2" cy="141.6" rx="0.8" ry="4.5" fill-opacity="0.30" transform="rotate(3 189.2 141.6)"/>
<ellipse cx="191.6" cy="141.8" rx="0.8" ry="4.8" fill-opacity="0.23" transform="rotate(3 191.6 141.8)"/>
<ellipse cx="189.8" cy="160.6" rx="0.8" ry="6.8" fill-opacity="0.16" transform="rotate(3 189.8 160.6)"/>
<ellipse cx="191.8" cy="159.2" rx="0.8" ry="6.0" fill-opacity="0.15" transform="rotate(3 191.8 159.2)"/>
<ellipse cx="193.1" cy="157.8" rx="0.8" ry="6.7" fill-opacity="0.23" transform="rotate(3 193.1 157.8)"/>
<ellipse cx="199.5" cy="209.5" rx="3.8" ry="11.0" fill-opacity="0.40" transform="rotate(18 199.5 209.5)"/>
<ellipse cx="199.9" cy="208.5" rx="2.9" ry="6.0" fill-opacity="0.54" transform="rotate(20 199.9 208.5)"/>
<ellipse cx="200.2" cy="208.0" rx="1.7" ry="2.3" fill-opacity="0.36" transform="rotate(20 200.2 208.0)"/>
<ellipse cx="199.9" cy="232.0" rx="3.4" ry="6.6" fill-opacity="0.32" transform="rotate(20 199.9 232.0)"/>
<ellipse cx="199.9" cy="232.0" rx="1.9" ry="2.8" fill-opacity="0.34" transform="rotate(20 199.9 232.0)"/>
<ellipse cx="195.1" cy="184.1" rx="0.7" ry="5.2" fill-opacity="0.40" transform="rotate(8 195.1 184.1)"/>
<ellipse cx="197.9" cy="180.7" rx="0.7" ry="3.3" fill-opacity="0.28" transform="rotate(8 197.9 180.7)"/>
<ellipse cx="200.1" cy="186.8" rx="0.7" ry="6.0" fill-opacity="0.37" transform="rotate(8 200.1 186.8)"/>
<ellipse cx="201.4" cy="184.5" rx="0.7" ry="6.5" fill-opacity="0.36" transform="rotate(8 201.4 184.5)"/>
<ellipse cx="208.4" cy="209.5" rx="3.8" ry="11.0" fill-opacity="0.41" transform="rotate(18 208.4 209.5)"/>
<ellipse cx="208.6" cy="208.5" rx="2.9" ry="6.0" fill-opacity="0.54" transform="rotate(20 208.6 208.5)"/>
<ellipse cx="208.9" cy="208.0" rx="1.7" ry="2.3" fill-opacity="0.36" transform="rotate(20 208.9 208.0)"/>
<ellipse cx="209.2" cy="232.0" rx="3.4" ry="6.6" fill-opacity="0.33" transform="rotate(20 209.2 232.0)"/>
<ellipse cx="208.6" cy="232.0" rx="1.9" ry="2.8" fill-opacity="0.35" transform="rotate(20 208.6 232.0)"/>
<ellipse cx="203.7" cy="186.2" rx="0.7" ry="4.2" fill-opacity="0.31" transform="rotate(8 203.7 186.2)"/>
<ellipse cx="206.4" cy="183.0" rx="0.7" ry="4.3" fill-opacity="0.31" transform="rotate(8 206.4 183.0)"/>
<ellipse cx="208.8" cy="182.6" rx="0.7" ry="3.8" fill-opacity="0.36" transform="rotate(8 208.8 182.6)"/>
<ellipse cx="210.5" cy="189.5" rx="0.7" ry="5.3" fill-opacity="0.36" transform="rotate(8 210.5 189.5)"/>
<ellipse cx="212.7" cy="188.3" rx="0.7" ry="3.4" fill-opacity="0.28" transform="rotate(8 212.7 188.3)"/>
<ellipse cx="206.9" cy="140.1" rx="0.8" ry="7.4" fill-opacity="0.27" transform="rotate(3 206.9 140.1)"/>
<ellipse cx="208.7" cy="139.4" rx="0.8" ry="5.0" fill-opacity="0.21" transform="rotate(3 208.7 139.4)"/>
<ellipse cx="207.8" cy="158.4" rx="0.8" ry="7.3" fill-opacity="0.24" transform="rotate(3 207.8 158.4)"/>
<ellipse cx="208.9" cy="157.8" rx="0.8" ry="4.6" fill-opacity="0.22" transform="rotate(3 208.9 157.8)"/>
<ellipse cx="218.4" cy="209.5" rx="3.8" ry="11.0" fill-opacity="0.41" transform="rotate(18 218.4 209.5)"/>
<ellipse cx="218.0" cy="208.5" rx="2.9" ry="6.0" fill-opacity="0.55" transform="rotate(20 218.0 208.5)"/>
<ellipse cx="218.3" cy="208.0" rx="1.7" ry="2.3" fill-opacity="0.36" transform="rotate(20 218.3 208.0)"/>
<ellipse cx="218.4" cy="232.0" rx="3.4" ry="6.6" fill-opacity="0.33" transform="rotate(20 218.4 232.0)"/>
<ellipse cx="218.0" cy="232.0" rx="1.9" ry="2.8" fill-opacity="0.35" transform="rotate(20 218.0 232.0)"/>
<ellipse cx="213.8" cy="189.8" rx="0.7" ry="6.2" fill-opacity="0.35" transform="rotate(8 213.8 189.8)"/>
<ellipse cx="215.9" cy="180.2" rx="0.7" ry="4.3" fill-opacity="0.31" transform="rotate(8 215.9 180.2)"/>
<ellipse cx="218.1" cy="181.1" rx="0.7" ry="4.5" fill-opacity="0.33" transform="rotate(8 218.1 181.1)"/>
<ellipse cx="220.5" cy="188.3" rx="0.7" ry="5.4" fill-opacity="0.28" transform="rotate(8 220.5 188.3)"/>
<ellipse cx="222.7" cy="189.0" rx="0.7" ry="5.2" fill-opacity="0.31" transform="rotate(8 222.7 189.0)"/>
<ellipse cx="226.4" cy="209.5" rx="3.8" ry="11.0" fill-opacity="0.41" transform="rotate(18 226.4 209.5)"/>
<ellipse cx="226.8" cy="208.5" rx="2.9" ry="6.0" fill-opacity="0.55" transform="rotate(20 226.8 208.5)"/>
<ellipse cx="227.1" cy="208.0" rx="1.7" ry="2.3" fill-opacity="0.37" transform="rotate(20 227.1 208.0)"/>
<ellipse cx="227.7" cy="232.0" rx="3.4" ry="6.6" fill-opacity="0.33" transform="rotate(20 227.7 232.0)"/>
<ellipse cx="226.8" cy="232.0" rx="1.9" ry="2.8" fill-opacity="0.35" transform="rotate(20 226.8 232.0)"/>
<ellipse cx="223.0" cy="187.1" rx="0.7" ry="6.7" fill-opacity="0.34" transform="rotate(8 223.0 187.1)"/>
<ellipse cx="223.7" cy="186.6" rx="0.7" ry="6.1" fill-opacity="0.28" transform="rotate(8 223.7 186.6)"/>
<ellipse cx="226.6" cy="184.2" rx="0.7" ry="4.3" fill-opacity="0.27" transform="rotate(8 226.6 184.2)"/>
<ellipse cx="229.4" cy="182.7" rx="0.7" ry="6.5" fill-opacity="0.32" transform="rotate(8 229.4 182.7)"/>
<ellipse cx="231.4" cy="182.4" rx="0.7" ry="5.3" fill-opacity="0.34" transform="rotate(8 231.4 182.4)"/>
<ellipse cx="226.1" cy="142.5" rx="0.8" ry="7.4" fill-opacity="0.27" transform="rotate(3 226.1 142.5)"/>
<ellipse cx="227.3" cy="141.8" rx="0.8" ry="5.5" fill-opacity="0.31" transform="rotate(3 227.3 141.8)"/>
<ellipse cx="226.3" cy="158.5" rx="0.8" ry="4.7" fill-opacity="0.21" transform="rotate(3 226.3 158.5)"/>
<ellipse cx="235.6" cy="209.5" rx="3.8" ry="11.0" fill-opacity="0.45" transform="rotate(18 235.6 209.5)"/>
<ellipse cx="235.7" cy="208.5" rx="2.9" ry="6.0" fill-opacity="0.60" transform="rotate(20 235.7 208.5)"/>
<ellipse cx="236.0" cy="208.0" rx="1.7" ry="2.3" fill-opacity="0.40" transform="rotate(20 236.0 208.0)"/>
<ellipse cx="236.2" cy="232.0" rx="3.4" ry="6.6" fill-opacity="0.36" transform="rotate(20 236.2 232.0)"/>
<ellipse cx="235.7" cy="232.0" rx="1.9" ry="2.8" fill-opacity="0.38" transform="rotate(20 235.7 232.0)"/>
<ellipse cx="230.6" cy="187.6" rx="0.7" ry="6.4" fill-opacity="0.39" transform="rotate(8 230.6 187.6)"/>
<ellipse cx="233.6" cy="186.4" rx="0.7" ry="6.1" fill-opacity="0.28" transform="rotate(8 233.6 186.4)"/>
<ellipse cx="235.4" cy="180.3" rx="0.7" ry="5.1" fill-opacity="0.28" transform="rotate(8 235.4 180.3)"/>
<ellipse cx="237.6" cy="183.4" rx="0.7" ry="3.5" fill-opacity="0.29" transform="rotate(8 237.6 183.4)"/>
<ellipse cx="240.7" cy="180.5" rx="0.7" ry="6.1" fill-opacity="0.36" transform="rotate(8 240.7 180.5)"/>
<ellipse cx="244.6" cy="209.5" rx="3.8" ry="11.0" fill-opacity="0.45" transform="rotate(18 244.6 209.5)"/>
<ellipse cx="244.7" cy="208.5" rx="2.9" ry="6.0" fill-opacity="0.60" transform="rotate(20 244.7 208.5)"/>
<ellipse cx="245.0" cy="208.0" rx="1.7" ry="2.3" fill-opacity="0.40" transform="rotate(20 245.0 208.0)"/>
<ellipse cx="243.9" cy="232.0" rx="3.4" ry="6.6" fill-opacity="0.36" transform="rotate(20 243.9 232.0)"/>
<ellipse cx="244.7" cy="232.0" rx="1.9" ry="2.8" fill-opacity="0.38" transform="rotate(20 244.7 232.0)"/>
<ellipse cx="240.0" cy="186.2" rx="0.7" ry="5.8" fill-opacity="0.37" transform="rotate(8 240.0 186.2)"/>
<ellipse cx="242.8" cy="184.9" rx="0.7" ry="7.0" fill-opacity="0.38" transform="rotate(8 242.8 184.9)"/>
<ellipse cx="245.1" cy="184.1" rx="0.7" ry="4.7" fill-opacity="0.34" transform="rotate(8 245.1 184.1)"/>
<ellipse cx="247.4" cy="185.3" rx="0.7" ry="5.1" fill-opacity="0.32" transform="rotate(8 247.4 185.3)"/>
<ellipse cx="242.3" cy="141.0" rx="0.8" ry="6.0" fill-opacity="0.25" transform="rotate(3 242.3 141.0)"/>
<ellipse cx="244.2" cy="141.7" rx="0.8" ry="7.6" fill-opacity="0.31" transform="rotate(3 244.2 141.7)"/>
<ellipse cx="242.4" cy="158.8" rx="0.8" ry="6.0" fill-opacity="0.19" transform="rotate(3 242.4 158.8)"/>
<ellipse cx="253.6" cy="209.5" rx="3.8" ry="11.0" fill-opacity="0.36" transform="rotate(18 253.6 209.5)"/>
<ellipse cx="253.4" cy="208.5" rx="2.9" ry="6.0" fill-opacity="0.48" transform="rotate(20 253.4 208.5)"/>
<ellipse cx="253.7" cy="208.0" rx="1.7" ry="2.3" fill-opacity="0.32" transform="rotate(20 253.7 208.0)"/>
<ellipse cx="252.9" cy="232.0" rx="3.4" ry="6.6" fill-opacity="0.29" transform="rotate(20 252.9 232.0)"/>
<ellipse cx="253.4" cy="232.0" rx="1.9" ry="2.8" fill-opacity="0.30" transform="rotate(20 253.4 232.0)"/>
<ellipse cx="249.2" cy="189.4" rx="0.7" ry="6.5" fill-opacity="0.40" transform="rotate(8 249.2 189.4)"/>
<ellipse cx="251.5" cy="188.7" rx="0.7" ry="4.5" fill-opacity="0.34" transform="rotate(8 251.5 188.7)"/>
<ellipse cx="253.4" cy="181.6" rx="0.7" ry="5.6" fill-opacity="0.32" transform="rotate(8 253.4 181.6)"/>
<ellipse cx="254.9" cy="180.7" rx="0.7" ry="5.1" fill-opacity="0.28" transform="rotate(8 254.9 180.7)"/>
<ellipse cx="262.7" cy="209.5" rx="3.8" ry="11.0" fill-opacity="0.46" transform="rotate(18 262.7 209.5)"/>
<ellipse cx="262.7" cy="208.5" rx="2.9" ry="6.0" fill-opacity="0.61" transform="rotate(20 262.7 208.5)"/>
<ellipse cx="263.0" cy="208.0" rx="1.7" ry="2.3" fill-opacity="0.41" transform="rotate(20 263.0 208.0)"/>
<ellipse cx="262.3" cy="232.0" rx="3.4" ry="6.6" fill-opacity="0.37" transform="rotate(20 262.3 232.0)"/>
<ellipse cx="262.7" cy="232.0" rx="1.9" ry="2.8" fill-opacity="0.39" transform="rotate(20 262.7 232.0)"/>
<ellipse cx="257.8" cy="183.2" rx="0.7" ry="3.3" fill-opacity="0.39" transform="rotate(8 257.8 183.2)"/>
<ellipse cx="260.9" cy="184.0" rx="0.7" ry="4.4" fill-opacity="0.34" transform="rotate(8 260.9 184.0)"/>
<ellipse cx="261.8" cy="180.3" rx="0.7" ry="6.6" fill-opacity="0.30" transform="rotate(8 261.8 180.3)"/>
<ellipse cx="264.8" cy="189.3" rx="0.7" ry="6.9" fill-opacity="0.33" transform="rotate(8 264.8 189.3)"/>
<ellipse cx="266.5" cy="183.0" rx="0.7" ry="6.7" fill-opacity="0.39" transform="rotate(8 266.5 183.0)"/>
<ellipse cx="261.9" cy="138.6" rx="0.8" ry="6.7" fill-opacity="0.28" transform="rotate(3 261.9 138.6)"/>
<ellipse cx="263.4" cy="140.6" rx="0.8" ry="5.3" fill-opacity="0.31" transform="rotate(3 263.4 140.6)"/>
<ellipse cx="265.5" cy="141.1" rx="0.8" ry="5.6" fill-opacity="0.30" transform="rotate(3 265.5 141.1)"/>
<ellipse cx="262.2" cy="159.9" rx="0.8" ry="4.5" fill-opacity="0.22" transform="rotate(3 262.2 159.9)"/>
<ellipse cx="264.1" cy="158.8" rx="0.8" ry="4.3" fill-opacity="0.17" transform="rotate(3 264.1 158.8)"/>
<ellipse cx="272.1" cy="209.5" rx="3.8" ry="11.0" fill-opacity="0.39" transform="rotate(18 272.1 209.5)"/>
<ellipse cx="271.9" cy="208.5" rx="2.9" ry="6.0" fill-opacity="0.52" transform="rotate(20 271.9 208.5)"/>
<ellipse cx="272.2" cy="208.0" rx="1.7" ry="2.3" fill-opacity="0.35" transform="rotate(20 272.2 208.0)"/>
<ellipse cx="271.3" cy="232.0" rx="3.4" ry="6.6" fill-opacity="0.31" transform="rotate(20 271.3 232.0)"/>
<ellipse cx="271.9" cy="232.0" rx="1.9" ry="2.8" fill-opacity="0.33" transform="rotate(20 271.9 232.0)"/>
<ellipse cx="267.4" cy="183.0" rx="0.7" ry="4.1" fill-opacity="0.37" transform="rotate(8 267.4 183.0)"/>
<ellipse cx="269.6" cy="181.2" rx="0.7" ry="5.1" fill-opacity="0.40" transform="rotate(8 269.6 181.2)"/>
<ellipse cx="272.4" cy="181.8" rx="0.7" ry="3.9" fill-opacity="0.28" transform="rotate(8 272.4 181.8)"/>
<ellipse cx="281.6" cy="209.5" rx="3.8" ry="11.0" fill-opacity="0.43" transform="rotate(18 281.6 209.5)"/>
<ellipse cx="281.6" cy="208.5" rx="2.9" ry="6.0" fill-opacity="0.58" transform="rotate(20 281.6 208.5)"/>
<ellipse cx="281.9" cy="208.0" rx="1.7" ry="2.3" fill-opacity="0.38" transform="rotate(20 281.9 208.0)"/>
<ellipse cx="282.4" cy="232.0" rx="3.4" ry="6.6" fill-opacity="0.35" transform="rotate(20 282.4 232.0)"/>
<ellipse cx="281.6" cy="232.0" rx="1.9" ry="2.8" fill-opacity="0.36" transform="rotate(20 281.6 232.0)"/>
<ellipse cx="277.2" cy="180.5" rx="0.7" ry="5.4" fill-opacity="0.30" transform="rotate(8 277.2 180.5)"/>
<ellipse cx="278.9" cy="188.0" rx="0.7" ry="3.3" fill-opacity="0.30" transform="rotate(8 278.9 188.0)"/>
<ellipse cx="281.9" cy="182.5" rx="0.7" ry="4.1" fill-opacity="0.34" transform="rotate(8 281.9 182.5)"/>
<ellipse cx="280.7" cy="142.2" rx="0.8" ry="6.5" fill-opacity="0.20" transform="rotate(3 280.7 142.2)"/>
<ellipse cx="282.7" cy="138.7" rx="0.8" ry="4.7" fill-opacity="0.29" transform="rotate(3 282.7 138.7)"/>
<ellipse cx="280.7" cy="158.9" rx="0.8" ry="4.1" fill-opacity="0.18" transform="rotate(3 280.7 158.9)"/>
<ellipse cx="283.0" cy="159.5" rx="0.8" ry="7.9" fill-opacity="0.22" transform="rotate(3 283.0 159.5)"/>
<ellipse cx="291.0" cy="209.5" rx="3.8" ry="11.0" fill-opacity="0.42" transform="rotate(18 291.0 209.5)"/>
<ellipse cx="290.9" cy="208.5" rx="2.9" ry="6.0" fill-opacity="0.55" transform="rotate(20 290.9 208.5)"/>
<ellipse cx="291.2" cy="208.0" rx="1.7" ry="2.3" fill-opacity="0.37" transform="rotate(20 291.2 208.0)"/>
<ellipse cx="290.2" cy="232.0" rx="3.4" ry="6.6" fill-opacity="0.33" transform="rotate(20 290.2 232.0)"/>
<ellipse cx="290.9" cy="232.0" rx="1.9" ry="2.8" fill-opacity="0.35" transform="rotate(20 290.9 232.0)"/>
<ellipse cx="286.0" cy="184.4" rx="0.7" ry="6.1" fill-opacity="0.37" transform="rotate(8 286.0 184.4)"/>
<ellipse cx="289.1" cy="182.4" rx="0.7" ry="5.0" fill-opacity="0.29" transform="rotate(8 289.1 182.4)"/>
<ellipse cx="291.0" cy="185.0" rx="0.7" ry="3.1" fill-opacity="0.34" transform="rotate(8 291.0 185.0)"/>
<ellipse cx="293.4" cy="185.7" rx="0.7" ry="6.5" fill-opacity="0.29" transform="rotate(8 293.4 185.7)"/>
<ellipse cx="299.9" cy="209.5" rx="3.8" ry="11.0" fill-opacity="0.37" transform="rotate(18 299.9 209.5)"/>
<ellipse cx="300.4" cy="208.5" rx="2.9" ry="6.0" fill-opacity="0.49" transform="rotate(20 300.4 208.5)"/>
<ellipse cx="300.7" cy="208.0" rx="1.7" ry="2.3" fill-opacity="0.33" transform="rotate(20 300.7 208.0)"/>
<ellipse cx="300.3" cy="232.0" rx="3.4" ry="6.6" fill-opacity="0.30" transform="rotate(20 300.3 232.0)"/>
<ellipse cx="300.4" cy="232.0" rx="1.9" ry="2.8" fill-opacity="0.31" transform="rotate(20 300.4 232.0)"/>
<ellipse cx="296.3" cy="188.6" rx="0.7" ry="3.1" fill-opacity="0.28" transform="rotate(8 296.3 188.6)"/>
<ellipse cx="297.6" cy="186.4" rx="0.7" ry="5.3" fill-opacity="0.36" transform="rotate(8 297.6 186.4)"/>
<ellipse cx="300.5" cy="180.5" rx="0.7" ry="4.7" fill-opacity="0.36" transform="rotate(8 300.5 180.5)"/>
<ellipse cx="303.0" cy="187.4" rx="0.7" ry="6.1" fill-opacity="0.37" transform="rotate(8 303.0 187.4)"/>
<ellipse cx="298.8" cy="139.5" rx="0.8" ry="6.2" fill-opacity="0.28" transform="rotate(3 298.8 139.5)"/>
<ellipse cx="300.8" cy="140.3" rx="0.8" ry="5.6" fill-opacity="0.26" transform="rotate(3 300.8 140.3)"/>
<ellipse cx="298.9" cy="160.9" rx="0.8" ry="4.2" fill-opacity="0.20" transform="rotate(3 298.9 160.9)"/>
<ellipse cx="301.3" cy="160.9" rx="0.8" ry="4.6" fill-opacity="0.20" transform="rotate(3 301.3 160.9)"/>
<ellipse cx="303.0" cy="157.2" rx="0.8" ry="5.0" fill-opacity="0.24" transform="rotate(3 303.0 157.2)"/>
<ellipse cx="309.6" cy="209.5" rx="3.8" ry="11.0" fill-opacity="0.37" transform="rotate(18 309.6 209.5)"/>
<ellipse cx="309.7" cy="208.5" rx="2.9" ry="6.0" fill-opacity="0.49" transform="rotate(20 309.7 208.5)"/>
<ellipse cx="310.0" cy="208.0" rx="1.7" ry="2.3" fill-opacity="0.33" transform="rotate(20 310.0 208.0)"/>
<ellipse cx="309.5" cy="232.0" rx="3.4" ry="6.6" fill-opacity="0.29" transform="rotate(20 309.5 232.0)"/>
<ellipse cx="309.7" cy="232.0" rx="1.9" ry="2.8" fill-opacity="0.31" transform="rotate(20 309.7 232.0)"/>
<ellipse cx="305.9" cy="186.8" rx="0.7" ry="5.9" fill-opacity="0.40" transform="rotate(8 305.9 186.8)"/>
<ellipse cx="307.6" cy="183.0" rx="0.7" ry="3.5" fill-opacity="0.38" transform="rotate(8 307.6 183.0)"/>
<ellipse cx="309.5" cy="180.9" rx="0.7" ry="3.9" fill-opacity="0.30" transform="rotate(8 309.5 180.9)"/>
<ellipse cx="319.6" cy="209.5" rx="3.8" ry="11.0" fill-opacity="0.47" transform="rotate(18 319.6 209.5)"/>
<ellipse cx="319.2" cy="208.5" rx="2.9" ry="6.0" fill-opacity="0.62" transform="rotate(20 319.2 208.5)"/>
<ellipse cx="319.5" cy="208.0" rx="1.7" ry="2.3" fill-opacity="0.41" transform="rotate(20 319.5 208.0)"/>
<ellipse cx="318.5" cy="232.0" rx="3.4" ry="6.6" fill-opacity="0.37" transform="rotate(20 318.5 232.0)"/>
<ellipse cx="319.2" cy="232.0" rx="1.9" ry="2.8" fill-opacity="0.39" transform="rotate(20 319.2 232.0)"/>
<ellipse cx="314.9" cy="180.6" rx="0.7" ry="4.4" fill-opacity="0.36" transform="rotate(8 314.9 180.6)"/>
<ellipse cx="317.5" cy="185.9" rx="0.7" ry="6.5" fill-opacity="0.32" transform="rotate(8 317.5 185.9)"/>
<ellipse cx="318.9" cy="188.4" rx="0.7" ry="4.5" fill-opacity="0.37" transform="rotate(8 318.9 188.4)"/>
<ellipse cx="320.8" cy="183.5" rx="0.7" ry="3.7" fill-opacity="0.34" transform="rotate(8 320.8 183.5)"/>
<ellipse cx="323.0" cy="182.0" rx="0.7" ry="3.9" fill-opacity="0.33" transform="rotate(8 323.0 182.0)"/>
<ellipse cx="317.6" cy="139.3" rx="0.8" ry="5.8" fill-opacity="0.21" transform="rotate(3 317.6 139.3)"/>
<ellipse cx="319.2" cy="140.0" rx="0.8" ry="5.5" fill-opacity="0.20" transform="rotate(3 319.2 140.0)"/>
<ellipse cx="317.8" cy="159.0" rx="0.8" ry="6.3" fill-opacity="0.21" transform="rotate(3 317.8 159.0)"/>
<ellipse cx="328.0" cy="209.5" rx="3.8" ry="11.0" fill-opacity="0.38" transform="rotate(18 328.0 209.5)"/>
<ellipse cx="328.4" cy="208.5" rx="2.9" ry="6.0" fill-opacity="0.50" transform="rotate(20 328.4 208.5)"/>
<ellipse cx="328.7" cy="208.0" rx="1.7" ry="2.3" fill-opacity="0.34" transform="rotate(20 328.7 208.0)"/>
<ellipse cx="328.9" cy="232.0" rx="3.4" ry="6.6" fill-opacity="0.30" transform="rotate(20 328.9 232.0)"/>
<ellipse cx="328.4" cy="232.0" rx="1.9" ry="2.8" fill-opacity="0.32" transform="rotate(20 328.4 232.0)"/>
<ellipse cx="323.4" cy="182.4" rx="0.7" ry="6.4" fill-opacity="0.28" transform="rotate(8 323.4 182.4)"/>
<ellipse cx="326.9" cy="188.4" rx="0.7" ry="4.8" fill-opacity="0.38" transform="rotate(8 326.9 188.4)"/>
<ellipse cx="328.1" cy="182.6" rx="0.7" ry="6.5" fill-opacity="0.35" transform="rotate(8 328.1 182.6)"/>
<ellipse cx="330.2" cy="186.1" rx="0.7" ry="5.0" fill-opacity="0.29" transform="rotate(8 330.2 186.1)"/>
<ellipse cx="337.1" cy="209.5" rx="3.8" ry="11.0" fill-opacity="0.41" transform="rotate(18 337.1 209.5)"/>
<ellipse cx="337.5" cy="208.5" rx="2.9" ry="6.0" fill-opacity="0.55" transform="rotate(20 337.5 208.5)"/>
<ellipse cx="337.8" cy="208.0" rx="1.7" ry="2.3" fill-opacity="0.37" transform="rotate(20 337.8 208.0)"/>
<ellipse cx="337.3" cy="232.0" rx="3.4" ry="6.6" fill-opacity="0.33" transform="rotate(20 337.3 232.0)"/>
<ellipse cx="337.5" cy="232.0" rx="1.9" ry="2.8" fill-opacity="0.35" transform="rotate(20 337.5 232.0)"/>
<ellipse cx="333.0" cy="181.4" rx="0.7" ry="5.8" fill-opacity="0.30" transform="rotate(8 333.0 181.4)"/>
<ellipse cx="335.5" cy="186.7" rx="0.7" ry="3.6" fill-opacity="0.29" transform="rotate(8 335.5 186.7)"/>
<ellipse cx="337.0" cy="187.1" rx="0.7" ry="4.6" fill-opacity="0.31" transform="rotate(8 337.0 187.1)"/>
<ellipse cx="340.2" cy="182.3" rx="0.7" ry="4.2" fill-opacity="0.31" transform="rotate(8 340.2 182.3)"/>
<ellipse cx="335.0" cy="140.4" rx="0.8" ry="4.5" fill-opacity="0.29" transform="rotate(3 335.0 140.4)"/>
<ellipse cx="336.7" cy="141.1" rx="0.8" ry="4.7" fill-opacity="0.30" transform="rotate(3 336.7 141.1)"/>
<ellipse cx="335.2" cy="159.7" rx="0.8" ry="7.8" fill-opacity="0.24" transform="rotate(3 335.2 159.7)"/>
<ellipse cx="336.6" cy="159.5" rx="0.8" ry="4.4" fill-opacity="0.19" transform="rotate(3 336.6 159.5)"/>
<ellipse cx="338.5" cy="157.2" rx="0.8" ry="5.5" fill-opacity="0.18" transform="rotate(3 338.5 157.2)"/>
<ellipse cx="347.1" cy="209.5" rx="3.8" ry="11.0" fill-opacity="0.41" transform="rotate(18 347.1 209.5)"/>
<ellipse cx="347.4" cy="208.5" rx="2.9" ry="6.0" fill-opacity="0.55" transform="rotate(20 347.4 208.5)"/>
<ellipse cx="347.7" cy="208.0" rx="1.7" ry="2.3" fill-opacity="0.37" transform="rotate(20 347.7 208.0)"/>
<ellipse cx="347.2" cy="232.0" rx="3.4" ry="6.6" fill-opacity="0.33" transform="rotate(20 347.2 232.0)"/>
<ellipse cx="347.4" cy="232.0" rx="1.9" ry="2.8" fill-opacity="0.35" transform="rotate(20 347.4 232.0)"/>
<ellipse cx="343.3" cy="183.5" rx="0.7" ry="5.8" fill-opacity="0.33" transform="rotate(8 343.3 183.5)"/>
<ellipse cx="345.5" cy="189.1" rx="0.7" ry="6.2" fill-opacity="0.33" transform="rotate(8 345.5 189.1)"/>
<ellipse cx="346.9" cy="188.5" rx="0.7" ry="4.2" fill-opacity="0.39" transform="rotate(8 346.9 188.5)"/>
<ellipse cx="350.1" cy="181.2" rx="0.7" ry="6.6" fill-opacity="0.39" transform="rotate(8 350.1 181.2)"/>
<ellipse cx="357.1" cy="209.5" rx="3.8" ry="11.0" fill-opacity="0.38" transform="rotate(18 357.1 209.5)"/>
<ellipse cx="357.3" cy="208.5" rx="2.9" ry="6.0" fill-opacity="0.51" transform="rotate(20 357.3 208.5)"/>
<ellipse cx="357.6" cy="208.0" rx="1.7" ry="2.3" fill-opacity="0.34" transform="rotate(20 357.6 208.0)"/>
<ellipse cx="356.9" cy="232.0" rx="3.4" ry="6.6" fill-opacity="0.31" transform="rotate(20 356.9 232.0)"/>
<ellipse cx="357.3" cy="232.0" rx="1.9" ry="2.8" fill-opacity="0.32" transform="rotate(20 357.3 232.0)"/>
<ellipse cx="352.5" cy="182.5" rx="0.7" ry="3.1" fill-opacity="0.31" transform="rotate(8 352.5 182.5)"/>
<ellipse cx="355.6" cy="185.7" rx="0.7" ry="4.0" fill-opacity="0.35" transform="rotate(8 355.6 185.7)"/>
<ellipse cx="356.7" cy="184.7" rx="0.7" ry="5.5" fill-opacity="0.39" transform="rotate(8 356.7 184.7)"/>
<ellipse cx="359.1" cy="185.8" rx="0.7" ry="6.8" fill-opacity="0.37" transform="rotate(8 359.1 185.8)"/>
<ellipse cx="361.8" cy="186.2" rx="0.7" ry="4.6" fill-opacity="0.32" transform="rotate(8 361.8 186.2)"/>
<ellipse cx="356.0" cy="142.1" rx="0.8" ry="4.6" fill-opacity="0.22" transform="rotate(3 356.0 142.1)"/>
<ellipse cx="357.9" cy="139.7" rx="0.8" ry="5.8" fill-opacity="0.32" transform="rotate(3 357.9 139.7)"/>
<ellipse cx="359.4" cy="139.3" rx="0.8" ry="5.3" fill-opacity="0.28" transform="rotate(3 359.4 139.3)"/>
<ellipse cx="356.4" cy="160.7" rx="0.8" ry="7.9" fill-opacity="0.15" transform="rotate(3 356.4 160.7)"/>
<ellipse cx="367.3" cy="209.5" rx="3.8" ry="11.0" fill-opacity="0.42" transform="rotate(18 367.3 209.5)"/>
<ellipse cx="367.0" cy="208.5" rx="2.9" ry="6.0" fill-opacity="0.56" transform="rotate(20 367.0 208.5)"/>
<ellipse cx="367.3" cy="208.0" rx="1.7" ry="2.3" fill-opacity="0.37" transform="rotate(20 367.3 208.0)"/>
<ellipse cx="366.1" cy="232.0" rx="3.4" ry="6.6" fill-opacity="0.33" transform="rotate(20 366.1 232.0)"/>
<ellipse cx="367.0" cy="232.0" rx="1.9" ry="2.8" fill-opacity="0.35" transform="rotate(20 367.0 232.0)"/>
<ellipse cx="363.1" cy="186.9" rx="0.7" ry="6.2" fill-opacity="0.30" transform="rotate(8 363.1 186.9)"/>
<ellipse cx="364.0" cy="180.2" rx="0.7" ry="6.2" fill-opacity="0.29" transform="rotate(8 364.0 180.2)"/>
<ellipse cx="366.7" cy="181.6" rx="0.7" ry="3.8" fill-opacity="0.28" transform="rotate(8 366.7 181.6)"/>
<ellipse cx="368.8" cy="186.9" rx="0.7" ry="6.2" fill-opacity="0.30" transform="rotate(8 368.8 186.9)"/>
<ellipse cx="371.1" cy="183.7" rx="0.7" ry="5.7" fill-opacity="0.33" transform="rotate(8 371.1 183.7)"/>
<ellipse cx="376.4" cy="209.5" rx="3.8" ry="11.0" fill-opacity="0.43" transform="rotate(18 376.4 209.5)"/>
<ellipse cx="376.5" cy="208.5" rx="2.9" ry="6.0" fill-opacity="0.57" transform="rotate(20 376.5 208.5)"/>
<ellipse cx="376.8" cy="208.0" rx="1.7" ry="2.3" fill-opacity="0.38" transform="rotate(20 376.8 208.0)"/>
<ellipse cx="377.4" cy="232.0" rx="3.4" ry="6.6" fill-opacity="0.34" transform="rotate(20 377.4 232.0)"/>
<ellipse cx="376.5" cy="232.0" rx="1.9" ry="2.8" fill-opacity="0.36" transform="rotate(20 376.5 232.0)"/>
<ellipse cx="371.4" cy="180.6" rx="0.7" ry="3.3" fill-opacity="0.27" transform="rotate(8 371.4 180.6)"/>
<ellipse cx="374.5" cy="181.1" rx="0.7" ry="4.8" fill-opacity="0.37" transform="rotate(8 374.5 181.1)"/>
<ellipse cx="376.4" cy="181.6" rx="0.7" ry="6.5" fill-opacity="0.38" transform="rotate(8 376.4 181.6)"/>
<ellipse cx="377.9" cy="182.5" rx="0.7" ry="5.0" fill-opacity="0.37" transform="rotate(8 377.9 182.5)"/>
<ellipse cx="380.6" cy="187.2" rx="0.7" ry="4.0" fill-opacity="0.36" transform="rotate(8 380.6 187.2)"/>
<ellipse cx="374.7" cy="141.8" rx="0.8" ry="6.5" fill-opacity="0.25" transform="rotate(3 374.7 141.8)"/>
<ellipse cx="376.4" cy="141.0" rx="0.8" ry="7.4" fill-opacity="0.30" transform="rotate(3 376.4 141.0)"/>
<ellipse cx="374.4" cy="159.5" rx="0.8" ry="5.2" fill-opacity="0.22" transform="rotate(3 374.4 159.5)"/>
<ellipse cx="385.6" cy="209.5" rx="3.8" ry="11.0" fill-opacity="0.47" transform="rotate(18 385.6 209.5)"/>
<ellipse cx="385.6" cy="208.5" rx="2.9" ry="6.0" fill-opacity="0.63" transform="rotate(20 385.6 208.5)"/>
<ellipse cx="385.9" cy="208.0" rx="1.7" ry="2.3" fill-opacity="0.42" transform="rotate(20 385.9 208.0)"/>
<ellipse cx="386.2" cy="232.0" rx="3.4" ry="6.6" fill-opacity="0.38" transform="rotate(20 386.2 232.0)"/>
<ellipse cx="385.6" cy="232.0" rx="1.9" ry="2.8" fill-opacity="0.40" transform="rotate(20 385.6 232.0)"/>
<ellipse cx="380.7" cy="182.7" rx="0.7" ry="4.0" fill-opacity="0.35" transform="rotate(8 380.7 182.7)"/>
<ellipse cx="383.1" cy="186.8" rx="0.7" ry="3.6" fill-opacity="0.28" transform="rotate(8 383.1 186.8)"/>
<ellipse cx="386.3" cy="188.7" rx="0.7" ry="3.8" fill-opacity="0.31" transform="rotate(8 386.3 188.7)"/>
<ellipse cx="394.9" cy="209.5" rx="3.8" ry="11.0" fill-opacity="0.42" transform="rotate(18 394.9 209.5)"/>
<ellipse cx="394.6" cy="208.5" rx="2.9" ry="6.0" fill-opacity="0.56" transform="rotate(20 394.6 208.5)"/>
<ellipse cx="394.9" cy="208.0" rx="1.7" ry="2.3" fill-opacity="0.37" transform="rotate(20 394.9 208.0)"/>
<ellipse cx="395.4" cy="232.0" rx="3.4" ry="6.6" fill-opacity="0.33" transform="rotate(20 395.4 232.0)"/>
<ellipse cx="394.6" cy="232.0" rx="1.9" ry="2.8" fill-opacity="0.35" transform="rotate(20 394.6 232.0)"/>
<ellipse cx="390.6" cy="181.7" rx="0.7" ry="3.3" fill-opacity="0.32" transform="rotate(8 390.6 181.7)"/>
<ellipse cx="392.9" cy="186.5" rx="0.7" ry="3.9" fill-opacity="0.36" transform="rotate(8 392.9 186.5)"/>
<ellipse cx="394.3" cy="181.4" rx="0.7" ry="5.3" fill-opacity="0.35" transform="rotate(8 394.3 181.4)"/>
<ellipse cx="396.2" cy="182.8" rx="0.7" ry="6.5" fill-opacity="0.32" transform="rotate(8 396.2 182.8)"/>
<ellipse cx="399.4" cy="185.6" rx="0.7" ry="6.6" fill-opacity="0.38" transform="rotate(8 399.4 185.6)"/>
<ellipse cx="391.9" cy="140.8" rx="0.8" ry="5.5" fill-opacity="0.25" transform="rotate(3 391.9 140.8)"/>
<ellipse cx="393.7" cy="138.8" rx="0.8" ry="5.2" fill-opacity="0.27" transform="rotate(3 393.7 138.8)"/>
<ellipse cx="391.9" cy="157.3" rx="0.8" ry="7.6" fill-opacity="0.18" transform="rotate(3 391.9 157.3)"/>
<ellipse cx="393.8" cy="157.7" rx="0.8" ry="5.9" fill-opacity="0.25" transform="rotate(3 393.8 157.7)"/>
<ellipse cx="395.7" cy="160.5" rx="0.8" ry="5.9" fill-opacity="0.19" transform="rotate(3 395.7 160.5)"/>
<ellipse cx="403.5" cy="209.5" rx="3.8" ry="11.0" fill-opacity="0.45" transform="rotate(18 403.5 209.5)"/>
<ellipse cx="403.6" cy="208.5" rx="2.9" ry="6.0" fill-opacity="0.60" transform="rotate(20 403.6 208.5)"/>
<ellipse cx="403.9" cy="208.0" rx="1.7" ry="2.3" fill-opacity="0.40" transform="rotate(20 403.9 208.0)"/>
<ellipse cx="403.7" cy="232.0" rx="3.4" ry="6.6" fill-opacity="0.36" transform="rotate(20 403.7 232.0)"/>
<ellipse cx="403.6" cy="232.0" rx="1.9" ry="2.8" fill-opacity="0.38" transform="rotate(20 403.6 232.0)"/>
<ellipse cx="399.6" cy="182.5" rx="0.7" ry="3.8" fill-opacity="0.30" transform="rotate(8 399.6 182.5)"/>
<ellipse cx="400.9" cy="188.1" rx="0.7" ry="5.3" fill-opacity="0.39" transform="rotate(8 400.9 188.1)"/>
<ellipse cx="402.8" cy="188.6" rx="0.7" ry="6.8" fill-opacity="0.34" transform="rotate(8 402.8 188.6)"/>
<ellipse cx="406.0" cy="182.7" rx="0.7" ry="3.1" fill-opacity="0.34" transform="rotate(8 406.0 182.7)"/>
<ellipse cx="407.2" cy="184.7" rx="0.7" ry="6.5" fill-opacity="0.27" transform="rotate(8 407.2 184.7)"/>
<ellipse cx="412.7" cy="209.5" rx="3.8" ry="11.0" fill-opacity="0.40" transform="rotate(18 412.7 209.5)"/>
<ellipse cx="412.4" cy="208.5" rx="2.9" ry="6.0" fill-opacity="0.53" transform="rotate(20 412.4 208.5)"/>
<ellipse cx="412.7" cy="208.0" rx="1.7" ry="2.3" fill-opacity="0.35" transform="rotate(20 412.7 208.0)"/>
<ellipse cx="411.9" cy="232.0" rx="3.4" ry="6.6" fill-opacity="0.32" transform="rotate(20 411.9 232.0)"/>
<ellipse cx="412.4" cy="232.0" rx="1.9" ry="2.8" fill-opacity="0.33" transform="rotate(20 412.4 232.0)"/>
<ellipse cx="407.9" cy="183.1" rx="0.7" ry="5.1" fill-opacity="0.35" transform="rotate(8 407.9 183.1)"/>
<ellipse cx="410.6" cy="187.7" rx="0.7" ry="6.7" fill-opacity="0.33" transform="rotate(8 410.6 187.7)"/>
<ellipse cx="412.9" cy="184.1" rx="0.7" ry="6.6" fill-opacity="0.35" transform="rotate(8 412.9 184.1)"/>
<ellipse cx="413.7" cy="181.4" rx="0.7" ry="4.3" fill-opacity="0.36" transform="rotate(8 413.7 181.4)"/>
<ellipse cx="416.7" cy="182.8" rx="0.7" ry="7.0" fill-opacity="0.35" transform="rotate(8 416.7 182.8)"/>
<ellipse cx="410.6" cy="139.8" rx="0.8" ry="4.8" fill-opacity="0.24" transform="rotate(3 410.6 139.8)"/>
<ellipse cx="412.2" cy="139.3" rx="0.8" ry="7.1" fill-opacity="0.27" transform="rotate(3 412.2 139.3)"/>
<ellipse cx="410.2" cy="158.4" rx="0.8" ry="4.6" fill-opacity="0.19" transform="rotate(3 410.2 158.4)"/>
<ellipse cx="412.0" cy="157.1" rx="0.8" ry="5.6" fill-opacity="0.16" transform="rotate(3 412.0 157.1)"/>
<ellipse cx="413.7" cy="160.8" rx="0.8" ry="7.4" fill-opacity="0.23" transform="rotate(3 413.7 160.8)"/>
<ellipse cx="421.7" cy="209.5" rx="3.8" ry="11.0" fill-opacity="0.35" transform="rotate(18 421.7 209.5)"/>
<ellipse cx="422.0" cy="208.5" rx="2.9" ry="6.0" fill-opacity="0.47" transform="rotate(20 422.0 208.5)"/>
<ellipse cx="422.3" cy="208.0" rx="1.7" ry="2.3" fill-opacity="0.31" transform="rotate(20 422.3 208.0)"/>
<ellipse cx="422.2" cy="232.0" rx="3.4" ry="6.6" fill-opacity="0.28" transform="rotate(20 422.2 232.0)"/>
<ellipse cx="422.0" cy="232.0" rx="1.9" ry="2.8" fill-opacity="0.30" transform="rotate(20 422.0 232.0)"/>
<ellipse cx="418.3" cy="184.3" rx="0.7" ry="6.9" fill-opacity="0.29" transform="rotate(8 418.3 184.3)"/>
<ellipse cx="419.6" cy="187.1" rx="0.7" ry="3.7" fill-opacity="0.30" transform="rotate(8 419.6 187.1)"/>
<ellipse cx="422.2" cy="189.5" rx="0.7" ry="4.3" fill-opacity="0.29" transform="rotate(8 422.2 189.5)"/>
<ellipse cx="423.9" cy="189.9" rx="0.7" ry="3.6" fill-opacity="0.35" transform="rotate(8 423.9 189.9)"/>
<ellipse cx="426.1" cy="186.4" rx="0.7" ry="3.8" fill-opacity="0.35" transform="rotate(8 426.1 186.4)"/>
<ellipse cx="431.6" cy="209.5" rx="3.8" ry="11.0" fill-opacity="0.46" transform="rotate(18 431.6 209.5)"/>
<ellipse cx="431.2" cy="208.5" rx="2.9" ry="6.0" fill-opacity="0.61" transform="rotate(20 431.2 208.5)"/>
<ellipse cx="431.5" cy="208.0" rx="1.7" ry="2.3" fill-opacity="0.41" transform="rotate(20 431.5 208.0)"/>
<ellipse cx="431.2" cy="232.0" rx="3.4" ry="6.6" fill-opacity="0.37" transform="rotate(20 431.2 232.0)"/>
<ellipse cx="431.2" cy="232.0" rx="1.9" ry="2.8" fill-opacity="0.39" transform="rotate(20 431.2 232.0)"/>
<ellipse cx="427.4" cy="181.2" rx="0.7" ry="6.0" fill-opacity="0.36" transform="rotate(8 427.4 181.2)"/>
<ellipse cx="428.8" cy="184.7" rx="0.7" ry="6.3" fill-opacity="0.33" transform="rotate(8 428.8 184.7)"/>
<ellipse cx="430.9" cy="185.4" rx="0.7" ry="3.2" fill-opacity="0.39" transform="rotate(8 430.9 185.4)"/>
<ellipse cx="433.4" cy="184.5" rx="0.7" ry="4.1" fill-opacity="0.27" transform="rotate(8 433.4 184.5)"/>
<ellipse cx="434.8" cy="183.2" rx="0.7" ry="5.1" fill-opacity="0.31" transform="rotate(8 434.8 183.2)"/>
<ellipse cx="429.8" cy="142.5" rx="0.8" ry="5.9" fill-opacity="0.30" transform="rotate(3 429.8 142.5)"/>
<ellipse cx="431.2" cy="142.5" rx="0.8" ry="6.2" fill-opacity="0.23" transform="rotate(3 431.2 142.5)"/>
<ellipse cx="430.2" cy="157.6" rx="0.8" ry="4.5" fill-opacity="0.16" transform="rotate(3 430.2 157.6)"/>
<ellipse cx="431.5" cy="158.0" rx="0.8" ry="4.7" fill-opacity="0.15" transform="rotate(3 431.5 158.0)"/>
<ellipse cx="433.4" cy="159.1" rx="0.8" ry="5.4" fill-opacity="0.17" transform="rotate(3 433.4 159.1)"/>
<ellipse cx="440.8" cy="209.5" rx="3.8" ry="11.0" fill-opacity="0.35" transform="rotate(18 440.8 209.5)"/>
<ellipse cx="440.9" cy="208.5" rx="2.9" ry="6.0" fill-opacity="0.47" transform="rotate(20 440.9 208.5)"/>
<ellipse cx="441.2" cy="208.0" rx="1.7" ry="2.3" fill-opacity="0.31" transform="rotate(20 441.2 208.0)"/>
<ellipse cx="441.8" cy="232.0" rx="3.4" ry="6.6" fill-opacity="0.28" transform="rotate(20 441.8 232.0)"/>
<ellipse cx="440.9" cy="232.0" rx="1.9" ry="2.8" fill-opacity="0.30" transform="rotate(20 440.9 232.0)"/>
<ellipse cx="435.7" cy="185.5" rx="0.7" ry="6.1" fill-opacity="0.33" transform="rotate(8 435.7 185.5)"/>
<ellipse cx="438.2" cy="188.0" rx="0.7" ry="6.4" fill-opacity="0.37" transform="rotate(8 438.2 188.0)"/>
<ellipse cx="440.9" cy="189.1" rx="0.7" ry="6.2" fill-opacity="0.28" transform="rotate(8 440.9 189.1)"/>
<ellipse cx="449.7" cy="209.5" rx="3.8" ry="11.0" fill-opacity="0.40" transform="rotate(18 449.7 209.5)"/>
<ellipse cx="450.1" cy="208.5" rx="2.9" ry="6.0" fill-opacity="0.53" transform="rotate(20 450.1 208.5)"/>
<ellipse cx="450.4" cy="208.0" rx="1.7" ry="2.3" fill-opacity="0.35" transform="rotate(20 450.4 208.0)"/>
<ellipse cx="449.8" cy="232.0" rx="3.4" ry="6.6" fill-opacity="0.32" transform="rotate(20 449.8 232.0)"/>
<ellipse cx="450.1" cy="232.0" rx="1.9" ry="2.8" fill-opacity="0.33" transform="rotate(20 450.1 232.0)"/>
<ellipse cx="446.1" cy="181.2" rx="0.7" ry="3.7" fill-opacity="0.31" transform="rotate(8 446.1 181.2)"/>
<ellipse cx="448.3" cy="186.2" rx="0.7" ry="6.6" fill-opacity="0.27" transform="rotate(8 448.3 186.2)"/>
<ellipse cx="450.8" cy="182.1" rx="0.7" ry="5.5" fill-opacity="0.38" transform="rotate(8 450.8 182.1)"/>
<ellipse cx="447.6" cy="141.8" rx="0.8" ry="6.9" fill-opacity="0.30" transform="rotate(3 447.6 141.8)"/>
<ellipse cx="449.8" cy="141.1" rx="0.8" ry="5.2" fill-opacity="0.23" transform="rotate(3 449.8 141.1)"/>
<ellipse cx="451.5" cy="139.2" rx="0.8" ry="6.5" fill-opacity="0.20" transform="rotate(3 451.5 139.2)"/>
<ellipse cx="447.6" cy="160.8" rx="0.8" ry="6.4" fill-opacity="0.19" transform="rotate(3 447.6 160.8)"/>
<ellipse cx="449.5" cy="161.0" rx="0.8" ry="6.8" fill-opacity="0.22" transform="rotate(3 449.5 161.0)"/>
<ellipse cx="459.7" cy="209.5" rx="3.8" ry="11.0" fill-opacity="0.39" transform="rotate(18 459.7 209.5)"/>
<ellipse cx="459.9" cy="208.5" rx="2.9" ry="6.0" fill-opacity="0.53" transform="rotate(20 459.9 208.5)"/>
<ellipse cx="460.2" cy="208.0" rx="1.7" ry="2.3" fill-opacity="0.35" transform="rotate(20 460.2 208.0)"/>
<ellipse cx="459.2" cy="232.0" rx="3.4" ry="6.6" fill-opacity="0.32" transform="rotate(20 459.2 232.0)"/>
<ellipse cx="459.9" cy="232.0" rx="1.9" ry="2.8" fill-opacity="0.33" transform="rotate(20 459.9 232.0)"/>
<ellipse cx="455.1" cy="183.7" rx="0.7" ry="5.5" fill-opacity="0.30" transform="rotate(8 455.1 183.7)"/>
<ellipse cx="457.0" cy="181.2" rx="0.7" ry="3.4" fill-opacity="0.33" transform="rotate(8 457.0 181.2)"/>
<ellipse cx="459.7" cy="184.9" rx="0.7" ry="3.5" fill-opacity="0.28" transform="rotate(8 459.7 184.9)"/>
<ellipse cx="462.6" cy="189.5" rx="0.7" ry="3.3" fill-opacity="0.35" transform="rotate(8 462.6 189.5)"/>
<ellipse cx="463.8" cy="184.8" rx="0.7" ry="3.8" fill-opacity="0.32" transform="rotate(8 463.8 184.8)"/>
<ellipse cx="469.8" cy="209.5" rx="3.8" ry="11.0" fill-opacity="0.38" transform="rotate(18 469.8 209.5)"/>
<ellipse cx="469.7" cy="208.5" rx="2.9" ry="6.0" fill-opacity="0.50" transform="rotate(20 469.7 208.5)"/>
<ellipse cx="470.0" cy="208.0" rx="1.7" ry="2.3" fill-opacity="0.34" transform="rotate(20 470.0 208.0)"/>
<ellipse cx="469.3" cy="232.0" rx="3.4" ry="6.6" fill-opacity="0.30" transform="rotate(20 469.3 232.0)"/>
<ellipse cx="469.7" cy="232.0" rx="1.9" ry="2.8" fill-opacity="0.32" transform="rotate(20 469.7 232.0)"/>
<ellipse cx="465.1" cy="189.5" rx="0.7" ry="4.2" fill-opacity="0.36" transform="rotate(8 465.1 189.5)"/>
<ellipse cx="467.6" cy="182.4" rx="0.7" ry="4.6" fill-opacity="0.28" transform="rotate(8 467.6 182.4)"/>
<ellipse cx="470.2" cy="182.5" rx="0.7" ry="4.7" fill-opacity="0.31" transform="rotate(8 470.2 182.5)"/>
<ellipse cx="472.3" cy="188.5" rx="0.7" ry="5.4" fill-opacity="0.34" transform="rotate(8 472.3 188.5)"/>
<ellipse cx="473.3" cy="189.0" rx="0.7" ry="3.4" fill-opacity="0.31" transform="rotate(8 473.3 189.0)"/>
<ellipse cx="468.7" cy="141.8" rx="0.8" ry="7.6" fill-opacity="0.28" transform="rotate(3 468.7 141.8)"/>
<ellipse cx="469.8" cy="138.8" rx="0.8" ry="5.1" fill-opacity="0.26" transform="rotate(3 469.8 138.8)"/>
<ellipse cx="471.9" cy="141.1" rx="0.8" ry="4.7" fill-opacity="0.23" transform="rotate(3 471.9 141.1)"/>
<ellipse cx="469.1" cy="158.6" rx="0.8" ry="7.3" fill-opacity="0.21" transform="rotate(3 469.1 158.6)"/>
<ellipse cx="478.9" cy="209.5" rx="3.8" ry="11.0" fill-opacity="0.44" transform="rotate(18 478.9 209.5)"/>
<ellipse cx="478.4" cy="208.5" rx="2.9" ry="6.0" fill-opacity="0.58" transform="rotate(20 478.4 208.5)"/>
<ellipse cx="478.7" cy="208.0" rx="1.7" ry="2.3" fill-opacity="0.39" transform="rotate(20 478.7 208.0)"/>
<ellipse cx="478.3" cy="232.0" rx="3.4" ry="6.6" fill-opacity="0.35" transform="rotate(20 478.3 232.0)"/>
<ellipse cx="478.4" cy="232.0" rx="1.9" ry="2.8" fill-opacity="0.37" transform="rotate(20 478.4 232.0)"/>
<ellipse cx="474.3" cy="189.3" rx="0.7" ry="5.1" fill-opacity="0.34" transform="rotate(8 474.3 189.3)"/>
<ellipse cx="476.0" cy="188.3" rx="0.7" ry="5.1" fill-opacity="0.27" transform="rotate(8 476.0 188.3)"/>
<ellipse cx="478.7" cy="180.0" rx="0.7" ry="6.8" fill-opacity="0.36" transform="rotate(8 478.7 180.0)"/>
<ellipse cx="480.9" cy="189.1" rx="0.7" ry="5.7" fill-opacity="0.40" transform="rotate(8 480.9 189.1)"/>
<ellipse cx="487.7" cy="209.5" rx="3.8" ry="11.0" fill-opacity="0.41" transform="rotate(18 487.7 209.5)"/>
<ellipse cx="487.3" cy="208.5" rx="2.9" ry="6.0" fill-opacity="0.54" transform="rotate(20 487.3 208.5)"/>
<ellipse cx="487.6" cy="208.0" rx="1.7" ry="2.3" fill-opacity="0.36" transform="rotate(20 487.6 208.0)"/>
<ellipse cx="486.6" cy="232.0" rx="3.4" ry="6.6" fill-opacity="0.33" transform="rotate(20 486.6 232.0)"/>
<ellipse cx="487.3" cy="232.0" rx="1.9" ry="2.8" fill-opacity="0.35" transform="rotate(20 487.3 232.0)"/>
<ellipse cx="483.4" cy="189.4" rx="0.7" ry="6.6" fill-opacity="0.26" transform="rotate(8 483.4 189.4)"/>
<ellipse cx="484.8" cy="185.4" rx="0.7" ry="5.1" fill-opacity="0.28" transform="rotate(8 484.8 185.4)"/>
<ellipse cx="487.7" cy="183.0" rx="0.7" ry="5.0" fill-opacity="0.28" transform="rotate(8 487.7 183.0)"/>
<ellipse cx="489.5" cy="181.3" rx="0.7" ry="3.4" fill-opacity="0.33" transform="rotate(8 489.5 181.3)"/>
<ellipse cx="486.1" cy="140.4" rx="0.8" ry="8.0" fill-opacity="0.27" transform="rotate(3 486.1 140.4)"/>
<ellipse cx="487.6" cy="138.9" rx="0.8" ry="5.0" fill-opacity="0.31" transform="rotate(3 487.6 138.9)"/>
<ellipse cx="486.0" cy="160.9" rx="0.8" ry="6.1" fill-opacity="0.19" transform="rotate(3 486.0 160.9)"/>
<ellipse cx="488.3" cy="160.5" rx="0.8" ry="7.9" fill-opacity="0.19" transform="rotate(3 488.3 160.5)"/>
<ellipse cx="489.5" cy="157.6" rx="0.8" ry="7.3" fill-opacity="0.22" transform="rotate(3 489.5 157.6)"/>
<ellipse cx="496.8" cy="209.5" rx="3.8" ry="11.0" fill-opacity="0.44" transform="rotate(18 496.8 209.5)"/>
<ellipse cx="497.1" cy="208.5" rx="2.9" ry="6.0" fill-opacity="0.58" transform="rotate(20 497.1 208.5)"/>
<ellipse cx="497.4" cy="208.0" rx="1.7" ry="2.3" fill-opacity="0.39" transform="rotate(20 497.4 208.0)"/>
<ellipse cx="496.2" cy="232.0" rx="3.4" ry="6.6" fill-opacity="0.35" transform="rotate(20 496.2 232.0)"/>
<ellipse cx="497.1" cy="232.0" rx="1.9" ry="2.8" fill-opacity="0.37" transform="rotate(20 497.1 232.0)"/>
<ellipse cx="492.6" cy="189.1" rx="0.7" ry="5.2" fill-opacity="0.37" transform="rotate(8 492.6 189.1)"/>
<ellipse cx="495.2" cy="183.9" rx="0.7" ry="4.2" fill-opacity="0.29" transform="rotate(8 495.2 183.9)"/>
<ellipse cx="497.1" cy="186.6" rx="0.7" ry="4.7" fill-opacity="0.39" transform="rotate(8 497.1 186.6)"/>
<ellipse cx="506.9" cy="209.5" rx="3.8" ry="11.0" fill-opacity="0.38" transform="rotate(18 506.9 209.5)"/>
<ellipse cx="506.4" cy="208.5" rx="2.9" ry="6.0" fill-opacity="0.50" transform="rotate(20 506.4 208.5)"/>
<ellipse cx="506.7" cy="208.0" rx="1.7" ry="2.3" fill-opacity="0.33" transform="rotate(20 506.7 208.0)"/>
<ellipse cx="505.6" cy="232.0" rx="3.4" ry="6.6" fill-opacity="0.30" transform="rotate(20 505.6 232.0)"/>
<ellipse cx="506.4" cy="232.0" rx="1.9" ry="2.8" fill-opacity="0.32" transform="rotate(20 506.4 232.0)"/>
<ellipse cx="502.5" cy="181.0" rx="0.7" ry="5.5" fill-opacity="0.30" transform="rotate(8 502.5 181.0)"/>
<ellipse cx="504.2" cy="182.2" rx="0.7" ry="3.3" fill-opacity="0.37" transform="rotate(8 504.2 182.2)"/>
<ellipse cx="506.1" cy="186.5" rx="0.7" ry="4.3" fill-opacity="0.28" transform="rotate(8 506.1 186.5)"/>
<ellipse cx="508.2" cy="185.3" rx="0.7" ry="3.7" fill-opacity="0.31" transform="rotate(8 508.2 185.3)"/>
<ellipse cx="510.4" cy="188.2" rx="0.7" ry="5.7" fill-opacity="0.36" transform="rotate(8 510.4 188.2)"/>
<ellipse cx="504.3" cy="140.6" rx="0.8" ry="7.1" fill-opacity="0.24" transform="rotate(3 504.3 140.6)"/>
<ellipse cx="506.2" cy="138.9" rx="0.8" ry="6.9" fill-opacity="0.24" transform="rotate(3 506.2 138.9)"/>
<ellipse cx="504.4" cy="159.4" rx="0.8" ry="5.5" fill-opacity="0.18" transform="rotate(3 504.4 159.4)"/>
<ellipse cx="516.3" cy="209.5" rx="3.8" ry="11.0" fill-opacity="0.43" transform="rotate(18 516.3 209.5)"/>
<ellipse cx="516.2" cy="208.5" rx="2.9" ry="6.0" fill-opacity="0.57" transform="rotate(20 516.2 208.5)"/>
<ellipse cx="516.5" cy="208.0" rx="1.7" ry="2.3" fill-opacity="0.38" transform="rotate(20 516.5 208.0)"/>
<ellipse cx="516.2" cy="232.0" rx="3.4" ry="6.6" fill-opacity="0.34" transform="rotate(20 516.2 232.0)"/>
<ellipse cx="516.2" cy="232.0" rx="1.9" ry="2.8" fill-opacity="0.36" transform="rotate(20 516.2 232.0)"/>
<ellipse cx="512.2" cy="183.4" rx="0.7" ry="6.4" fill-opacity="0.29" transform="rotate(8 512.2 183.4)"/>
<ellipse cx="514.1" cy="188.1" rx="0.7" ry="6.8" fill-opacity="0.35" transform="rotate(8 514.1 188.1)"/>
<ellipse cx="515.9" cy="180.9" rx="0.7" ry="5.3" fill-opacity="0.27" transform="rotate(8 515.9 180.9)"/>
<ellipse cx="518.2" cy="182.3" rx="0.7" ry="4.0" fill-opacity="0.26" transform="rotate(8 518.2 182.3)"/>
<ellipse cx="520.0" cy="181.6" rx="0.7" ry="4.1" fill-opacity="0.30" transform="rotate(8 520.0 181.6)"/>
<ellipse cx="525.4" cy="209.5" rx="3.8" ry="11.0" fill-opacity="0.47" transform="rotate(18 525.4 209.5)"/>
<ellipse cx="525.4" cy="208.5" rx="2.9" ry="6.0" fill-opacity="0.63" transform="rotate(20 525.4 208.5)"/>
<ellipse cx="525.7" cy="208.0" rx="1.7" ry="2.3" fill-opacity="0.42" transform="rotate(20 525.7 208.0)"/>
<ellipse cx="524.6" cy="232.0" rx="3.4" ry="6.6" fill-opacity="0.38" transform="rotate(20 524.6 232.0)"/>
<ellipse cx="525.4" cy="232.0" rx="1.9" ry="2.8" fill-opacity="0.40" transform="rotate(20 525.4 232.0)"/>
<ellipse cx="521.6" cy="186.4" rx="0.7" ry="3.1" fill-opacity="0.39" transform="rotate(8 521.6 186.4)"/>
<ellipse cx="523.5" cy="185.8" rx="0.7" ry="3.0" fill-opacity="0.36" transform="rotate(8 523.5 185.8)"/>
<ellipse cx="525.2" cy="186.8" rx="0.7" ry="6.9" fill-opacity="0.39" transform="rotate(8 525.2 186.8)"/>
<ellipse cx="524.3" cy="139.1" rx="0.8" ry="7.1" fill-opacity="0.28" transform="rotate(3 524.3 139.1)"/>
<ellipse cx="526.2" cy="140.3" rx="0.8" ry="7.6" fill-opacity="0.29" transform="rotate(3 526.2 140.3)"/>
<ellipse cx="528.0" cy="142.3" rx="0.8" ry="5.7" fill-opacity="0.30" transform="rotate(3 528.0 142.3)"/>
<ellipse cx="524.1" cy="157.5" rx="0.8" ry="5.2" fill-opacity="0.25" transform="rotate(3 524.1 157.5)"/>
<ellipse cx="526.3" cy="160.7" rx="0.8" ry="4.8" fill-opacity="0.19" transform="rotate(3 526.3 160.7)"/>
<ellipse cx="528.1" cy="160.4" rx="0.8" ry="4.5" fill-opacity="0.24" transform="rotate(3 528.1 160.4)"/>
<ellipse cx="533.7" cy="209.5" rx="3.8" ry="11.0" fill-opacity="0.41" transform="rotate(18 533.7 209.5)"/>
<ellipse cx="534.2" cy="208.5" rx="2.9" ry="6.0" fill-opacity="0.54" transform="rotate(20 534.2 208.5)"/>
<ellipse cx="534.5" cy="208.0" rx="1.7" ry="2.3" fill-opacity="0.36" transform="rotate(20 534.5 208.0)"/>
<ellipse cx="534.0" cy="232.0" rx="3.4" ry="6.6" fill-opacity="0.33" transform="rotate(20 534.0 232.0)"/>
<ellipse cx="534.2" cy="232.0" rx="1.9" ry="2.8" fill-opacity="0.34" transform="rotate(20 534.2 232.0)"/>
<ellipse cx="530.0" cy="184.9" rx="0.7" ry="4.7" fill-opacity="0.37" transform="rotate(8 530.0 184.9)"/>
<ellipse cx="531.9" cy="184.8" rx="0.7" ry="5.2" fill-opacity="0.38" transform="rotate(8 531.9 184.8)"/>
<ellipse cx="534.5" cy="183.2" rx="0.7" ry="3.1" fill-opacity="0.38" transform="rotate(8 534.5 183.2)"/>
<ellipse cx="536.5" cy="183.8" rx="0.7" ry="6.2" fill-opacity="0.36" transform="rotate(8 536.5 183.8)"/>
<ellipse cx="538.4" cy="185.9" rx="0.7" ry="4.8" fill-opacity="0.37" transform="rotate(8 538.4 185.9)"/>
<ellipse cx="543.9" cy="209.5" rx="3.8" ry="11.0" fill-opacity="0.37" transform="rotate(18 543.9 209.5)"/>
<ellipse cx="543.7" cy="208.5" rx="2.9" ry="6.0" fill-opacity="0.49" transform="rotate(20 543.7 208.5)"/>
<ellipse cx="544.0" cy="208.0" rx="1.7" ry="2.3" fill-opacity="0.33" transform="rotate(20 544.0 208.0)"/>
<ellipse cx="542.8" cy="232.0" rx="3.4" ry="6.6" fill-opacity="0.30" transform="rotate(20 542.8 232.0)"/>
<ellipse cx="543.7" cy="232.0" rx="1.9" ry="2.8" fill-opacity="0.31" transform="rotate(20 543.7 232.0)"/>
<ellipse cx="538.7" cy="182.6" rx="0.7" ry="5.9" fill-opacity="0.34" transform="rotate(8 538.7 182.6)"/>
<ellipse cx="541.0" cy="180.6" rx="0.7" ry="6.3" fill-opacity="0.31" transform="rotate(8 541.0 180.6)"/>
<ellipse cx="543.9" cy="184.3" rx="0.7" ry="5.5" fill-opacity="0.34" transform="rotate(8 543.9 184.3)"/>
<ellipse cx="546.5" cy="189.1" rx="0.7" ry="4.8" fill-opacity="0.33" transform="rotate(8 546.5 189.1)"/>
<ellipse cx="542.5" cy="140.5" rx="0.8" ry="5.0" fill-opacity="0.32" transform="rotate(3 542.5 140.5)"/>
<ellipse cx="544.0" cy="139.1" rx="0.8" ry="6.2" fill-opacity="0.26" transform="rotate(3 544.0 139.1)"/>
<ellipse cx="543.1" cy="160.1" rx="0.8" ry="7.2" fill-opacity="0.16" transform="rotate(3 543.1 160.1)"/>
<ellipse cx="544.7" cy="157.9" rx="0.8" ry="4.8" fill-opacity="0.20" transform="rotate(3 544.7 157.9)"/>
<ellipse cx="552.9" cy="209.5" rx="3.8" ry="11.0" fill-opacity="0.43" transform="rotate(18 552.9 209.5)"/>
<ellipse cx="553.3" cy="208.5" rx="2.9" ry="6.0" fill-opacity="0.57" transform="rotate(20 553.3 208.5)"/>
<ellipse cx="553.6" cy="208.0" rx="1.7" ry="2.3" fill-opacity="0.38" transform="rotate(20 553.6 208.0)"/>
<ellipse cx="553.5" cy="232.0" rx="3.4" ry="6.6" fill-opacity="0.34" transform="rotate(20 553.5 232.0)"/>
<ellipse cx="553.3" cy="232.0" rx="1.9" ry="2.8" fill-opacity="0.36" transform="rotate(20 553.3 232.0)"/>
<ellipse cx="549.1" cy="183.6" rx="0.7" ry="6.8" fill-opacity="0.36" transform="rotate(8 549.1 183.6)"/>
<ellipse cx="550.7" cy="188.6" rx="0.7" ry="5.9" fill-opacity="0.30" transform="rotate(8 550.7 188.6)"/>
<ellipse cx="552.8" cy="180.2" rx="0.7" ry="5.1" fill-opacity="0.30" transform="rotate(8 552.8 180.2)"/>
<ellipse cx="555.1" cy="182.5" rx="0.7" ry="3.5" fill-opacity="0.33" transform="rotate(8 555.1 182.5)"/>
<ellipse cx="562.1" cy="209.5" rx="3.8" ry="11.0" fill-opacity="0.38" transform="rotate(18 562.1 209.5)"/>
<ellipse cx="562.3" cy="208.5" rx="2.9" ry="6.0" fill-opacity="0.51" transform="rotate(20 562.3 208.5)"/>
<ellipse cx="562.6" cy="208.0" rx="1.7" ry="2.3" fill-opacity="0.34" transform="rotate(20 562.6 208.0)"/>
<ellipse cx="562.3" cy="232.0" rx="3.4" ry="6.6" fill-opacity="0.31" transform="rotate(20 562.3 232.0)"/>
<ellipse cx="562.3" cy="232.0" rx="1.9" ry="2.8" fill-opacity="0.32" transform="rotate(20 562.3 232.0)"/>
<ellipse cx="557.3" cy="188.6" rx="0.7" ry="6.4" fill-opacity="0.35" transform="rotate(8 557.3 188.6)"/>
<ellipse cx="560.1" cy="187.3" rx="0.7" ry="5.1" fill-opacity="0.35" transform="rotate(8 560.1 187.3)"/>
<ellipse cx="562.9" cy="187.8" rx="0.7" ry="4.0" fill-opacity="0.27" transform="rotate(8 562.9 187.8)"/>
<ellipse cx="565.1" cy="183.6" rx="0.7" ry="6.1" fill-opacity="0.29" transform="rotate(8 565.1 183.6)"/>
<ellipse cx="560.6" cy="140.5" rx="0.8" ry="6.5" fill-opacity="0.24" transform="rotate(3 560.6 140.5)"/>
<ellipse cx="561.8" cy="142.3" rx="0.8" ry="4.9" fill-opacity="0.31" transform="rotate(3 561.8 142.3)"/>
<ellipse cx="560.8" cy="158.2" rx="0.8" ry="4.0" fill-opacity="0.24" transform="rotate(3 560.8 158.2)"/>
<ellipse cx="562.8" cy="157.8" rx="0.8" ry="5.5" fill-opacity="0.19" transform="rotate(3 562.8 157.8)"/>
<ellipse cx="563.8" cy="160.8" rx="0.8" ry="6.7" fill-opacity="0.16" transform="rotate(3 563.8 160.8)"/>
<ellipse cx="570.8" cy="209.5" rx="3.8" ry="11.0" fill-opacity="0.40" transform="rotate(18 570.8 209.5)"/>
<ellipse cx="571.1" cy="208.5" rx="2.9" ry="6.0" fill-opacity="0.53" transform="rotate(20 571.1 208.5)"/>
<ellipse cx="572.1" cy="232.0" rx="3.4" ry="6.6" fill-opacity="0.32" transform="rotate(20 572.1 232.0)"/>
<ellipse cx="571.1" cy="232.0" rx="1.9" ry="2.8" fill-opacity="0.34" transform="rotate(20 571.1 232.0)"/>
<ellipse cx="566.7" cy="184.4" rx="0.7" ry="5.7" fill-opacity="0.27" transform="rotate(8 566.7 184.4)"/>
<ellipse cx="569.1" cy="186.1" rx="0.7" ry="6.7" fill-opacity="0.38" transform="rotate(8 569.1 186.1)"/>
<ellipse cx="570.4" cy="181.4" rx="0.7" ry="3.8" fill-opacity="0.36" transform="rotate(8 570.4 181.4)"/>
<ellipse cx="572.5" cy="189.4" rx="0.7" ry="6.6" fill-opacity="0.27" transform="rotate(8 572.5 189.4)"/>
<ellipse cx="576.1" cy="182.6" rx="0.7" ry="3.9" fill-opacity="0.30" transform="rotate(8 576.1 182.6)"/>
<ellipse cx="580.3" cy="209.5" rx="3.8" ry="11.0" fill-opacity="0.37" transform="rotate(18 580.3 209.5)"/>
<ellipse cx="580.2" cy="208.5" rx="2.9" ry="6.0" fill-opacity="0.49" transform="rotate(20 580.2 208.5)"/>
<ellipse cx="579.5" cy="232.0" rx="3.4" ry="6.6" fill-opacity="0.30" transform="rotate(20 579.5 232.0)"/>
<ellipse cx="580.2" cy="232.0" rx="1.9" ry="2.8" fill-opacity="0.31" transform="rotate(20 580.2 232.0)"/>
<ellipse cx="576.4" cy="180.2" rx="0.7" ry="5.0" fill-opacity="0.34" transform="rotate(8 576.4 180.2)"/>
<ellipse cx="578.2" cy="186.1" rx="0.7" ry="5.5" fill-opacity="0.39" transform="rotate(8 578.2 186.1)"/>
<ellipse cx="579.5" cy="185.2" rx="0.7" ry="6.8" fill-opacity="0.26" transform="rotate(8 579.5 185.2)"/>
<ellipse cx="581.7" cy="188.7" rx="0.7" ry="6.8" fill-opacity="0.26" transform="rotate(8 581.7 188.7)"/>
<ellipse cx="578.7" cy="138.8" rx="0.8" ry="7.3" fill-opacity="0.32" transform="rotate(3 578.7 138.8)"/>
<ellipse cx="581.1" cy="140.1" rx="0.8" ry="5.7" fill-opacity="0.24" transform="rotate(3 581.1 140.1)"/>
<ellipse cx="579.8" cy="158.0" rx="0.8" ry="4.2" fill-opacity="0.19" transform="rotate(3 579.8 158.0)"/>
<ellipse cx="590.1" cy="209.5" rx="3.8" ry="11.0" fill-opacity="0.44" transform="rotate(18 590.1 209.5)"/>
<ellipse cx="590.1" cy="208.5" rx="2.9" ry="6.0" fill-opacity="0.59" transform="rotate(20 590.1 208.5)"/>
<ellipse cx="590.4" cy="208.0" rx="1.7" ry="2.3" fill-opacity="0.39" transform="rotate(20 590.4 208.0)"/>
<ellipse cx="590.4" cy="232.0" rx="3.4" ry="6.6" fill-opacity="0.35" transform="rotate(20 590.4 232.0)"/>
<ellipse cx="590.1" cy="232.0" rx="1.9" ry="2.8" fill-opacity="0.37" transform="rotate(20 590.1 232.0)"/>
<ellipse cx="585.1" cy="181.5" rx="0.7" ry="4.0" fill-opacity="0.33" transform="rotate(8 585.1 181.5)"/>
<ellipse cx="588.2" cy="183.3" rx="0.7" ry="4.0" fill-opacity="0.35" transform="rotate(8 588.2 183.3)"/>
<ellipse cx="589.6" cy="185.2" rx="0.7" ry="4.0" fill-opacity="0.38" transform="rotate(8 589.6 185.2)"/>
<ellipse cx="591.7" cy="182.3" rx="0.7" ry="4.2" fill-opacity="0.31" transform="rotate(8 591.7 182.3)"/>
<ellipse cx="599.9" cy="209.5" rx="3.8" ry="11.0" fill-opacity="0.44" transform="rotate(18 599.9 209.5)"/>
<ellipse cx="599.7" cy="208.5" rx="2.9" ry="6.0" fill-opacity="0.59" transform="rotate(20 599.7 208.5)"/>
<ellipse cx="600.0" cy="208.0" rx="1.7" ry="2.3" fill-opacity="0.39" transform="rotate(20 600.0 208.0)"/>
<ellipse cx="599.8" cy="232.0" rx="3.4" ry="6.6" fill-opacity="0.35" transform="rotate(20 599.8 232.0)"/>
<ellipse cx="599.7" cy="232.0" rx="1.9" ry="2.8" fill-opacity="0.37" transform="rotate(20 599.7 232.0)"/>
<ellipse cx="595.5" cy="185.0" rx="0.7" ry="4.8" fill-opacity="0.27" transform="rotate(8 595.5 185.0)"/>
<ellipse cx="597.5" cy="181.4" rx="0.7" ry="5.7" fill-opacity="0.27" transform="rotate(8 597.5 181.4)"/>
<ellipse cx="598.9" cy="188.4" rx="0.7" ry="7.0" fill-opacity="0.32" transform="rotate(8 598.9 188.4)"/>
<ellipse cx="597.3" cy="139.6" rx="0.8" ry="6.6" fill-opacity="0.29" transform="rotate(3 597.3 139.6)"/>
<ellipse cx="599.1" cy="141.8" rx="0.8" ry="4.5" fill-opacity="0.26" transform="rotate(3 599.1 141.8)"/>
<ellipse cx="598.1" cy="158.7" rx="0.8" ry="4.6" fill-opacity="0.16" transform="rotate(3 598.1 158.7)"/>
<ellipse cx="599.1" cy="159.0" rx="0.8" ry="4.9" fill-opacity="0.18" transform="rotate(3 599.1 159.0)"/>
<ellipse cx="608.2" cy="209.5" rx="3.8" ry="11.0" fill-opacity="0.37" transform="rotate(18 608.2 209.5)"/>
<ellipse cx="608.5" cy="208.5" rx="2.9" ry="6.0" fill-opacity="0.49" transform="rotate(20 608.5 208.5)"/>
<ellipse cx="608.8" cy="208.0" rx="1.7" ry="2.3" fill-opacity="0.33" transform="rotate(20 608.8 208.0)"/>
<ellipse cx="608.2" cy="232.0" rx="3.4" ry="6.6" fill-opacity="0.29" transform="rotate(20 608.2 232.0)"/>
<ellipse cx="608.5" cy="232.0" rx="1.9" ry="2.8" fill-opacity="0.31" transform="rotate(20 608.5 232.0)"/>
<ellipse cx="603.5" cy="181.4" rx="0.7" ry="5.7" fill-opacity="0.38" transform="rotate(8 603.5 181.4)"/>
<ellipse cx="606.6" cy="189.5" rx="0.7" ry="4.8" fill-opacity="0.31" transform="rotate(8 606.6 189.5)"/>
<ellipse cx="607.8" cy="182.7" rx="0.7" ry="6.8" fill-opacity="0.27" transform="rotate(8 607.8 182.7)"/>
<ellipse cx="617.4" cy="209.5" rx="3.8" ry="11.0" fill-opacity="0.37" transform="rotate(18 617.4 209.5)"/>
<ellipse cx="617.5" cy="208.5" rx="2.9" ry="6.0" fill-opacity="0.50" transform="rotate(20 617.5 208.5)"/>
<ellipse cx="617.8" cy="208.0" rx="1.7" ry="2.3" fill-opacity="0.33" transform="rotate(20 617.8 208.0)"/>
<ellipse cx="617.1" cy="232.0" rx="3.4" ry="6.6" fill-opacity="0.30" transform="rotate(20 617.1 232.0)"/>
<ellipse cx="617.5" cy="232.0" rx="1.9" ry="2.8" fill-opacity="0.32" transform="rotate(20 617.5 232.0)"/>
<ellipse cx="613.2" cy="182.7" rx="0.7" ry="5.1" fill-opacity="0.37" transform="rotate(8 613.2 182.7)"/>
<ellipse cx="615.1" cy="188.0" rx="0.7" ry="4.0" fill-opacity="0.27" transform="rotate(8 615.1 188.0)"/>
<ellipse cx="617.7" cy="180.2" rx="0.7" ry="6.7" fill-opacity="0.40" transform="rotate(8 617.7 180.2)"/>
<ellipse cx="626.0" cy="209.5" rx="3.8" ry="11.0" fill-opacity="0.43" transform="rotate(18 626.0 209.5)"/>
<ellipse cx="626.3" cy="208.5" rx="2.9" ry="6.0" fill-opacity="0.58" transform="rotate(20 626.3 208.5)"/>
<ellipse cx="626.6" cy="232.0" rx="3.4" ry="6.6" fill-opacity="0.35" transform="rotate(20 626.6 232.0)"/>
<ellipse cx="626.3" cy="232.0" rx="1.9" ry="2.8" fill-opacity="0.37" transform="rotate(20 626.3 232.0)"/>
<ellipse cx="621.5" cy="187.9" rx="0.7" ry="6.9" fill-opacity="0.32" transform="rotate(8 621.5 187.9)"/>
<ellipse cx="624.2" cy="188.5" rx="0.7" ry="4.9" fill-opacity="0.29" transform="rotate(8 624.2 188.5)"/>
<ellipse cx="627.0" cy="189.8" rx="0.7" ry="3.1" fill-opacity="0.37" transform="rotate(8 627.0 189.8)"/>
<ellipse cx="634.7" cy="209.5" rx="3.8" ry="11.0" fill-opacity="0.40" transform="rotate(18 634.7 209.5)"/>
<ellipse cx="635.1" cy="208.5" rx="2.9" ry="6.0" fill-opacity="0.53" transform="rotate(20 635.1 208.5)"/>
<ellipse cx="635.4" cy="208.0" rx="1.7" ry="2.3" fill-opacity="0.36" transform="rotate(20 635.4 208.0)"/>
<ellipse cx="634.5" cy="232.0" rx="3.4" ry="6.6" fill-opacity="0.32" transform="rotate(20 634.5 232.0)"/>
<ellipse cx="635.1" cy="232.0" rx="1.9" ry="2.8" fill-opacity="0.34" transform="rotate(20 635.1 232.0)"/>
<ellipse cx="631.1" cy="189.6" rx="0.7" ry="3.1" fill-opacity="0.32" transform="rotate(8 631.1 189.6)"/>
<ellipse cx="633.6" cy="186.1" rx="0.7" ry="3.3" fill-opacity="0.26" transform="rotate(8 633.6 186.1)"/>
<ellipse cx="634.8" cy="181.7" rx="0.7" ry="6.9" fill-opacity="0.31" transform="rotate(8 634.8 181.7)"/>
<ellipse cx="637.8" cy="185.6" rx="0.7" ry="5.8" fill-opacity="0.30" transform="rotate(8 637.8 185.6)"/>
<ellipse cx="639.8" cy="181.7" rx="0.7" ry="3.6" fill-opacity="0.34" transform="rotate(8 639.8 181.7)"/>
<ellipse cx="633.0" cy="142.3" rx="0.8" ry="6.2" fill-opacity="0.28" transform="rotate(3 633.0 142.3)"/>
<ellipse cx="635.1" cy="142.1" rx="0.8" ry="6.8" fill-opacity="0.26" transform="rotate(3 635.1 142.1)"/>
<ellipse cx="636.8" cy="142.2" rx="0.8" ry="7.2" fill-opacity="0.31" transform="rotate(3 636.8 142.2)"/>
<ellipse cx="633.2" cy="159.3" rx="0.8" ry="4.6" fill-opacity="0.24" transform="rotate(3 633.2 159.3)"/>
<ellipse cx="635.1" cy="157.4" rx="0.8" ry="6.7" fill-opacity="0.18" transform="rotate(3 635.1 157.4)"/>
<ellipse cx="644.8" cy="209.5" rx="3.8" ry="11.0" fill-opacity="0.42" transform="rotate(18 644.8 209.5)"/>
<ellipse cx="644.8" cy="208.5" rx="2.9" ry="6.0" fill-opacity="0.56" transform="rotate(20 644.8 208.5)"/>
<ellipse cx="644.8" cy="232.0" rx="3.4" ry="6.6" fill-opacity="0.34" transform="rotate(20 644.8 232.0)"/>
<ellipse cx="644.8" cy="232.0" rx="1.9" ry="2.8" fill-opacity="0.35" transform="rotate(20 644.8 232.0)"/>
<ellipse cx="640.6" cy="186.6" rx="0.7" ry="4.6" fill-opacity="0.33" transform="rotate(8 640.6 186.6)"/>
<ellipse cx="643.0" cy="185.7" rx="0.7" ry="3.2" fill-opacity="0.30" transform="rotate(8 643.0 185.7)"/>
<ellipse cx="644.9" cy="180.6" rx="0.7" ry="3.6" fill-opacity="0.26" transform="rotate(8 644.9 180.6)"/>
<ellipse cx="646.9" cy="180.5" rx="0.7" ry="4.1" fill-opacity="0.27" transform="rotate(8 646.9 180.5)"/>
<ellipse cx="653.6" cy="209.5" rx="3.8" ry="11.0" fill-opacity="0.42" transform="rotate(18 653.6 209.5)"/>
<ellipse cx="653.7" cy="208.5" rx="2.9" ry="6.0" fill-opacity="0.56" transform="rotate(20 653.7 208.5)"/>
<ellipse cx="654.0" cy="208.0" rx="1.7" ry="2.3" fill-opacity="0.37" transform="rotate(20 654.0 208.0)"/>
<ellipse cx="653.1" cy="232.0" rx="3.4" ry="6.6" fill-opacity="0.34" transform="rotate(20 653.1 232.0)"/>
<ellipse cx="653.7" cy="232.0" rx="1.9" ry="2.8" fill-opacity="0.36" transform="rotate(20 653.7 232.0)"/>
<ellipse cx="649.2" cy="184.3" rx="0.7" ry="5.2" fill-opacity="0.39" transform="rotate(8 649.2 184.3)"/>
<ellipse cx="651.4" cy="184.8" rx="0.7" ry="4.2" fill-opacity="0.38" transform="rotate(8 651.4 184.8)"/>
<ellipse cx="653.6" cy="183.4" rx="0.7" ry="3.8" fill-opacity="0.29" transform="rotate(8 653.6 183.4)"/>
<ellipse cx="656.3" cy="188.0" rx="0.7" ry="6.9" fill-opacity="0.39" transform="rotate(8 656.3 188.0)"/>
<ellipse cx="658.3" cy="188.0" rx="0.7" ry="5.8" fill-opacity="0.37" transform="rotate(8 658.3 188.0)"/>
<ellipse cx="651.1" cy="139.5" rx="0.8" ry="7.7" fill-opacity="0.20" transform="rotate(3 651.1 139.5)"/>
<ellipse cx="653.0" cy="139.9" rx="0.8" ry="7.3" fill-opacity="0.27" transform="rotate(3 653.0 139.9)"/>
<ellipse cx="655.2" cy="142.2" rx="0.8" ry="6.8" fill-opacity="0.21" transform="rotate(3 655.2 142.2)"/>
<ellipse cx="651.2" cy="158.0" rx="0.8" ry="5.2" fill-opacity="0.19" transform="rotate(3 651.2 158.0)"/>
<ellipse cx="653.1" cy="159.4" rx="0.8" ry="7.1" fill-opacity="0.18" transform="rotate(3 653.1 159.4)"/>
<ellipse cx="655.3" cy="159.6" rx="0.8" ry="7.0" fill-opacity="0.22" transform="rotate(3 655.3 159.6)"/>
<ellipse cx="663.0" cy="209.5" rx="3.8" ry="11.0" fill-opacity="0.40" transform="rotate(18 663.0 209.5)"/>
<ellipse cx="663.1" cy="208.5" rx="2.9" ry="6.0" fill-opacity="0.54" transform="rotate(20 663.1 208.5)"/>
<ellipse cx="663.4" cy="208.0" rx="1.7" ry="2.3" fill-opacity="0.36" transform="rotate(20 663.4 208.0)"/>
<ellipse cx="663.6" cy="232.0" rx="3.4" ry="6.6" fill-opacity="0.32" transform="rotate(20 663.6 232.0)"/>
<ellipse cx="663.1" cy="232.0" rx="1.9" ry="2.8" fill-opacity="0.34" transform="rotate(20 663.1 232.0)"/>
<ellipse cx="658.7" cy="189.4" rx="0.7" ry="5.6" fill-opacity="0.33" transform="rotate(8 658.7 189.4)"/>
<ellipse cx="660.6" cy="183.5" rx="0.7" ry="3.1" fill-opacity="0.28" transform="rotate(8 660.6 183.5)"/>
<ellipse cx="663.4" cy="182.3" rx="0.7" ry="5.6" fill-opacity="0.37" transform="rotate(8 663.4 182.3)"/>
<ellipse cx="672.3" cy="209.5" rx="3.8" ry="11.0" fill-opacity="0.44" transform="rotate(18 672.3 209.5)"/>
<ellipse cx="672.3" cy="208.5" rx="2.9" ry="6.0" fill-opacity="0.58" transform="rotate(20 672.3 208.5)"/>
<ellipse cx="672.6" cy="208.0" rx="1.7" ry="2.3" fill-opacity="0.39" transform="rotate(20 672.6 208.0)"/>
<ellipse cx="671.8" cy="232.0" rx="3.4" ry="6.6" fill-opacity="0.35" transform="rotate(20 671.8 232.0)"/>
<ellipse cx="672.3" cy="232.0" rx="1.9" ry="2.8" fill-opacity="0.37" transform="rotate(20 672.3 232.0)"/>
<ellipse cx="667.0" cy="182.7" rx="0.7" ry="6.1" fill-opacity="0.27" transform="rotate(8 667.0 182.7)"/>
<ellipse cx="669.7" cy="180.5" rx="0.7" ry="3.1" fill-opacity="0.33" transform="rotate(8 669.7 180.5)"/>
<ellipse cx="672.3" cy="183.0" rx="0.7" ry="4.9" fill-opacity="0.27" transform="rotate(8 672.3 183.0)"/>
<ellipse cx="669.6" cy="138.9" rx="0.8" ry="7.0" fill-opacity="0.21" transform="rotate(3 669.6 138.9)"/>
<ellipse cx="671.9" cy="140.6" rx="0.8" ry="5.5" fill-opacity="0.31" transform="rotate(3 671.9 140.6)"/>
<ellipse cx="673.4" cy="140.2" rx="0.8" ry="5.9" fill-opacity="0.24" transform="rotate(3 673.4 140.2)"/>
<ellipse cx="670.0" cy="160.4" rx="0.8" ry="7.4" fill-opacity="0.20" transform="rotate(3 670.0 160.4)"/>
<ellipse cx="671.7" cy="160.7" rx="0.8" ry="7.2" fill-opacity="0.24" transform="rotate(3 671.7 160.7)"/>
<ellipse cx="681.2" cy="209.5" rx="3.8" ry="11.0" fill-opacity="0.36" transform="rotate(18 681.2 209.5)"/>
<ellipse cx="681.2" cy="208.5" rx="2.9" ry="6.0" fill-opacity="0.48" transform="rotate(20 681.2 208.5)"/>
<ellipse cx="681.5" cy="208.0" rx="1.7" ry="2.3" fill-opacity="0.32" transform="rotate(20 681.5 208.0)"/>
<ellipse cx="681.1" cy="232.0" rx="3.4" ry="6.6" fill-opacity="0.29" transform="rotate(20 681.1 232.0)"/>
<ellipse cx="681.2" cy="232.0" rx="1.9" ry="2.8" fill-opacity="0.30" transform="rotate(20 681.2 232.0)"/>
<ellipse cx="676.8" cy="186.4" rx="0.7" ry="6.8" fill-opacity="0.39" transform="rotate(8 676.8 186.4)"/>
<ellipse cx="678.5" cy="185.4" rx="0.7" ry="7.0" fill-opacity="0.33" transform="rotate(8 678.5 185.4)"/>
<ellipse cx="680.6" cy="187.7" rx="0.7" ry="3.2" fill-opacity="0.28" transform="rotate(8 680.6 187.7)"/>
<ellipse cx="683.4" cy="182.7" rx="0.7" ry="5.9" fill-opacity="0.36" transform="rotate(8 683.4 182.7)"/>
<ellipse cx="685.2" cy="187.7" rx="0.7" ry="5.6" fill-opacity="0.36" transform="rotate(8 685.2 187.7)"/>
<ellipse cx="690.7" cy="209.5" rx="3.8" ry="11.0" fill-opacity="0.41" transform="rotate(18 690.7 209.5)"/>
<ellipse cx="690.8" cy="208.5" rx="2.9" ry="6.0" fill-opacity="0.54" transform="rotate(20 690.8 208.5)"/>
<ellipse cx="691.1" cy="208.0" rx="1.7" ry="2.3" fill-opacity="0.36" transform="rotate(20 691.1 208.0)"/>
<ellipse cx="690.8" cy="232.0" rx="3.4" ry="6.6" fill-opacity="0.33" transform="rotate(20 690.8 232.0)"/>
<ellipse cx="690.8" cy="232.0" rx="1.9" ry="2.8" fill-opacity="0.34" transform="rotate(20 690.8 232.0)"/>
<ellipse cx="686.9" cy="180.6" rx="0.7" ry="3.3" fill-opacity="0.30" transform="rotate(8 686.9 180.6)"/>
<ellipse cx="688.8" cy="184.4" rx="0.7" ry="3.5" fill-opacity="0.32" transform="rotate(8 688.8 184.4)"/>
<ellipse cx="690.8" cy="187.4" rx="0.7" ry="4.6" fill-opacity="0.35" transform="rotate(8 690.8 187.4)"/>
<ellipse cx="693.2" cy="186.2" rx="0.7" ry="3.2" fill-opacity="0.36" transform="rotate(8 693.2 186.2)"/>
<ellipse cx="688.0" cy="140.0" rx="0.8" ry="7.1" fill-opacity="0.29" transform="rotate(3 688.0 140.0)"/>
<ellipse cx="690.0" cy="139.3" rx="0.8" ry="5.4" fill-opacity="0.29" transform="rotate(3 690.0 139.3)"/>
<ellipse cx="692.1" cy="142.0" rx="0.8" ry="7.7" fill-opacity="0.28" transform="rotate(3 692.1 142.0)"/>
<ellipse cx="688.2" cy="157.9" rx="0.8" ry="7.5" fill-opacity="0.20" transform="rotate(3 688.2 157.9)"/>
<ellipse cx="690.1" cy="158.6" rx="0.8" ry="7.5" fill-opacity="0.18" transform="rotate(3 690.1 158.6)"/>
<ellipse cx="699.9" cy="209.5" rx="3.8" ry="11.0" fill-opacity="0.45" transform="rotate(18 699.9 209.5)"/>
<ellipse cx="699.7" cy="208.5" rx="2.9" ry="6.0" fill-opacity="0.60" transform="rotate(20 699.7 208.5)"/>
<ellipse cx="700.0" cy="208.0" rx="1.7" ry="2.3" fill-opacity="0.40" transform="rotate(20 700.0 208.0)"/>
<ellipse cx="699.4" cy="232.0" rx="3.4" ry="6.6" fill-opacity="0.36" transform="rotate(20 699.4 232.0)"/>
<ellipse cx="699.7" cy="232.0" rx="1.9" ry="2.8" fill-opacity="0.38" transform="rotate(20 699.7 232.0)"/>
<ellipse cx="694.7" cy="184.4" rx="0.7" ry="3.8" fill-opacity="0.26" transform="rotate(8 694.7 184.4)"/>
<ellipse cx="698.0" cy="186.2" rx="0.7" ry="3.4" fill-opacity="0.36" transform="rotate(8 698.0 186.2)"/>
<ellipse cx="699.8" cy="185.5" rx="0.7" ry="5.6" fill-opacity="0.35" transform="rotate(8 699.8 185.5)"/>
<ellipse cx="701.8" cy="188.0" rx="0.7" ry="6.7" fill-opacity="0.38" transform="rotate(8 701.8 188.0)"/>
<ellipse cx="708.9" cy="209.5" rx="3.8" ry="11.0" fill-opacity="0.36" transform="rotate(18 708.9 209.5)"/>
<ellipse cx="709.1" cy="208.5" rx="2.9" ry="6.0" fill-opacity="0.48" transform="rotate(20 709.1 208.5)"/>
<ellipse cx="709.4" cy="208.0" rx="1.7" ry="2.3" fill-opacity="0.32" transform="rotate(20 709.4 208.0)"/>
<ellipse cx="709.3" cy="232.0" rx="3.4" ry="6.6" fill-opacity="0.29" transform="rotate(20 709.3 232.0)"/>
<ellipse cx="709.1" cy="232.0" rx="1.9" ry="2.8" fill-opacity="0.30" transform="rotate(20 709.1 232.0)"/>
<ellipse cx="704.9" cy="186.7" rx="0.7" ry="4.7" fill-opacity="0.35" transform="rotate(8 704.9 186.7)"/>
<ellipse cx="706.4" cy="187.7" rx="0.7" ry="5.2" fill-opacity="0.40" transform="rotate(8 706.4 187.7)"/>
<ellipse cx="708.8" cy="187.1" rx="0.7" ry="3.1" fill-opacity="0.32" transform="rotate(8 708.8 187.1)"/>
<ellipse cx="711.7" cy="182.6" rx="0.7" ry="5.5" fill-opacity="0.29" transform="rotate(8 711.7 182.6)"/>
<ellipse cx="713.3" cy="189.9" rx="0.7" ry="3.8" fill-opacity="0.39" transform="rotate(8 713.3 189.9)"/>
<ellipse cx="707.8" cy="140.1" rx="0.8" ry="6.6" fill-opacity="0.29" transform="rotate(3 707.8 140.1)"/>
<ellipse cx="709.5" cy="141.5" rx="0.8" ry="6.5" fill-opacity="0.23" transform="rotate(3 709.5 141.5)"/>
<ellipse cx="708.0" cy="158.6" rx="0.8" ry="4.6" fill-opacity="0.15" transform="rotate(3 708.0 158.6)"/>
<ellipse cx="709.8" cy="159.3" rx="0.8" ry="7.2" fill-opacity="0.20" transform="rotate(3 709.8 159.3)"/>
<ellipse cx="710.9" cy="160.0" rx="0.8" ry="5.4" fill-opacity="0.25" transform="rotate(3 710.9 160.0)"/>
<ellipse cx="718.4" cy="209.5" rx="3.8" ry="11.0" fill-opacity="0.39" transform="rotate(18 718.4 209.5)"/>
<ellipse cx="718.0" cy="208.5" rx="2.9" ry="6.0" fill-opacity="0.52" transform="rotate(20 718.0 208.5)"/>
<ellipse cx="718.3" cy="208.0" rx="1.7" ry="2.3" fill-opacity="0.35" transform="rotate(20 718.3 208.0)"/>
<ellipse cx="718.0" cy="232.0" rx="3.4" ry="6.6" fill-opacity="0.31" transform="rotate(20 718.0 232.0)"/>
<ellipse cx="718.0" cy="232.0" rx="1.9" ry="2.8" fill-opacity="0.33" transform="rotate(20 718.0 232.0)"/>
<ellipse cx="713.1" cy="188.1" rx="0.7" ry="4.7" fill-opacity="0.28" transform="rotate(8 713.1 188.1)"/>
<ellipse cx="715.8" cy="184.6" rx="0.7" ry="5.1" fill-opacity="0.40" transform="rotate(8 715.8 184.6)"/>
<ellipse cx="718.0" cy="189.5" rx="0.7" ry="4.4" fill-opacity="0.37" transform="rotate(8 718.0 189.5)"/>
<ellipse cx="719.4" cy="183.0" rx="0.7" ry="5.8" fill-opacity="0.36" transform="rotate(8 719.4 183.0)"/>
<ellipse cx="727.1" cy="209.5" rx="3.8" ry="11.0" fill-opacity="0.45" transform="rotate(18 727.1 209.5)"/>
<ellipse cx="727.2" cy="208.5" rx="2.9" ry="6.0" fill-opacity="0.60" transform="rotate(20 727.2 208.5)"/>
<ellipse cx="727.5" cy="208.0" rx="1.7" ry="2.3" fill-opacity="0.40" transform="rotate(20 727.5 208.0)"/>
<ellipse cx="726.9" cy="232.0" rx="3.4" ry="6.6" fill-opacity="0.36" transform="rotate(20 726.9 232.0)"/>
<ellipse cx="727.2" cy="232.0" rx="1.9" ry="2.8" fill-opacity="0.38" transform="rotate(20 727.2 232.0)"/>
<ellipse cx="722.7" cy="185.4" rx="0.7" ry="4.6" fill-opacity="0.32" transform="rotate(8 722.7 185.4)"/>
<ellipse cx="725.3" cy="186.3" rx="0.7" ry="6.3" fill-opacity="0.35" transform="rotate(8 725.3 186.3)"/>
<ellipse cx="726.6" cy="180.3" rx="0.7" ry="6.6" fill-opacity="0.35" transform="rotate(8 726.6 180.3)"/>
<ellipse cx="728.5" cy="181.9" rx="0.7" ry="3.1" fill-opacity="0.27" transform="rotate(8 728.5 181.9)"/>
<ellipse cx="731.6" cy="186.7" rx="0.7" ry="4.2" fill-opacity="0.31" transform="rotate(8 731.6 186.7)"/>
<ellipse cx="725.0" cy="142.0" rx="0.8" ry="5.3" fill-opacity="0.26" transform="rotate(3 725.0 142.0)"/>
<ellipse cx="726.8" cy="140.3" rx="0.8" ry="7.3" fill-opacity="0.27" transform="rotate(3 726.8 140.3)"/>
<ellipse cx="728.8" cy="142.4" rx="0.8" ry="5.3" fill-opacity="0.23" transform="rotate(3 728.8 142.4)"/>
<ellipse cx="725.2" cy="159.6" rx="0.8" ry="7.7" fill-opacity="0.23" transform="rotate(3 725.2 159.6)"/>
<ellipse cx="727.6" cy="157.7" rx="0.8" ry="4.7" fill-opacity="0.21" transform="rotate(3 727.6 157.7)"/>
<ellipse cx="729.3" cy="158.9" rx="0.8" ry="6.4" fill-opacity="0.18" transform="rotate(3 729.3 158.9)"/>
<ellipse cx="735.9" cy="209.5" rx="3.8" ry="11.0" fill-opacity="0.44" transform="rotate(18 735.9 209.5)"/>
<ellipse cx="736.1" cy="208.5" rx="2.9" ry="6.0" fill-opacity="0.59" transform="rotate(20 736.1 208.5)"/>
<ellipse cx="736.1" cy="232.0" rx="3.4" ry="6.6" fill-opacity="0.36" transform="rotate(20 736.1 232.0)"/>
<ellipse cx="736.1" cy="232.0" rx="1.9" ry="2.8" fill-opacity="0.38" transform="rotate(20 736.1 232.0)"/>
<ellipse cx="731.2" cy="187.2" rx="0.7" ry="3.2" fill-opacity="0.36" transform="rotate(8 731.2 187.2)"/>
<ellipse cx="733.1" cy="188.4" rx="0.7" ry="5.2" fill-opacity="0.34" transform="rotate(8 733.1 188.4)"/>
<ellipse cx="735.4" cy="180.4" rx="0.7" ry="4.4" fill-opacity="0.40" transform="rotate(8 735.4 180.4)"/>
<ellipse cx="745.5" cy="209.5" rx="3.8" ry="11.0" fill-opacity="0.42" transform="rotate(18 745.5 209.5)"/>
<ellipse cx="745.2" cy="208.5" rx="2.9" ry="6.0" fill-opacity="0.57" transform="rotate(20 745.2 208.5)"/>
<ellipse cx="745.5" cy="208.0" rx="1.7" ry="2.3" fill-opacity="0.38" transform="rotate(20 745.5 208.0)"/>
<ellipse cx="744.4" cy="232.0" rx="3.4" ry="6.6" fill-opacity="0.34" transform="rotate(20 744.4 232.0)"/>
<ellipse cx="745.2" cy="232.0" rx="1.9" ry="2.8" fill-opacity="0.36" transform="rotate(20 745.2 232.0)"/>
<ellipse cx="741.3" cy="186.1" rx="0.7" ry="5.2" fill-opacity="0.27" transform="rotate(8 741.3 186.1)"/>
<ellipse cx="742.3" cy="186.8" rx="0.7" ry="3.2" fill-opacity="0.37" transform="rotate(8 742.3 186.8)"/>
<ellipse cx="744.6" cy="180.2" rx="0.7" ry="4.0" fill-opacity="0.26" transform="rotate(8 744.6 180.2)"/>
<ellipse cx="754.5" cy="209.5" rx="3.8" ry="11.0" fill-opacity="0.39" transform="rotate(18 754.5 209.5)"/>
<ellipse cx="755.0" cy="208.5" rx="2.9" ry="6.0" fill-opacity="0.52" transform="rotate(20 755.0 208.5)"/>
<ellipse cx="755.3" cy="208.0" rx="1.7" ry="2.3" fill-opacity="0.34" transform="rotate(20 755.3 208.0)"/>
<ellipse cx="754.9" cy="232.0" rx="3.4" ry="6.6" fill-opacity="0.31" transform="rotate(20 754.9 232.0)"/>
<ellipse cx="755.0" cy="232.0" rx="1.9" ry="2.8" fill-opacity="0.33" transform="rotate(20 755.0 232.0)"/>
<ellipse cx="750.1" cy="181.1" rx="0.7" ry="6.4" fill-opacity="0.33" transform="rotate(8 750.1 181.1)"/>
<ellipse cx="752.7" cy="183.1" rx="0.7" ry="6.5" fill-opacity="0.37" transform="rotate(8 752.7 183.1)"/>
<ellipse cx="755.1" cy="186.6" rx="0.7" ry="5.8" fill-opacity="0.33" transform="rotate(8 755.1 186.6)"/>
<ellipse cx="764.6" cy="209.5" rx="3.8" ry="11.0" fill-opacity="0.40" transform="rotate(18 764.6 209.5)"/>
<ellipse cx="764.7" cy="208.5" rx="2.9" ry="6.0" fill-opacity="0.53" transform="rotate(20 764.7 208.5)"/>
<ellipse cx="765.0" cy="208.0" rx="1.7" ry="2.3" fill-opacity="0.36" transform="rotate(20 765.0 208.0)"/>
<ellipse cx="764.6" cy="232.0" rx="3.4" ry="6.6" fill-opacity="0.32" transform="rotate(20 764.6 232.0)"/>
<ellipse cx="764.7" cy="232.0" rx="1.9" ry="2.8" fill-opacity="0.34" transform="rotate(20 764.7 232.0)"/>
<ellipse cx="760.3" cy="190.0" rx="0.7" ry="6.2" fill-opacity="0.38" transform="rotate(8 760.3 190.0)"/>
<ellipse cx="762.0" cy="183.0" rx="0.7" ry="4.6" fill-opacity="0.35" transform="rotate(8 762.0 183.0)"/>
<ellipse cx="763.8" cy="184.6" rx="0.7" ry="5.1" fill-opacity="0.31" transform="rotate(8 763.8 184.6)"/>
<ellipse cx="767.5" cy="185.6" rx="0.7" ry="4.9" fill-opacity="0.31" transform="rotate(8 767.5 185.6)"/>
<ellipse cx="769.7" cy="180.9" rx="0.7" ry="5.0" fill-opacity="0.29" transform="rotate(8 769.7 180.9)"/>
<ellipse cx="762.9" cy="139.5" rx="0.8" ry="7.9" fill-opacity="0.27" transform="rotate(3 762.9 139.5)"/>
<ellipse cx="765.0" cy="139.7" rx="0.8" ry="7.5" fill-opacity="0.26" transform="rotate(3 765.0 139.7)"/>
<ellipse cx="763.5" cy="157.5" rx="0.8" ry="7.5" fill-opacity="0.23" transform="rotate(3 763.5 157.5)"/>
<ellipse cx="774.0" cy="209.5" rx="3.8" ry="11.0" fill-opacity="0.44" transform="rotate(18 774.0 209.5)"/>
<ellipse cx="773.7" cy="208.5" rx="2.9" ry="6.0" fill-opacity="0.58" transform="rotate(20 773.7 208.5)"/>
<ellipse cx="774.0" cy="208.0" rx="1.7" ry="2.3" fill-opacity="0.39" transform="rotate(20 774.0 208.0)"/>
<ellipse cx="774.7" cy="232.0" rx="3.4" ry="6.6" fill-opacity="0.35" transform="rotate(20 774.7 232.0)"/>
<ellipse cx="773.7" cy="232.0" rx="1.9" ry="2.8" fill-opacity="0.37" transform="rotate(20 773.7 232.0)"/>
<ellipse cx="769.4" cy="185.5" rx="0.7" ry="3.2" fill-opacity="0.36" transform="rotate(8 769.4 185.5)"/>
<ellipse cx="770.8" cy="187.4" rx="0.7" ry="4.0" fill-opacity="0.33" transform="rotate(8 770.8 187.4)"/>
<ellipse cx="774.3" cy="186.5" rx="0.7" ry="6.2" fill-opacity="0.40" transform="rotate(8 774.3 186.5)"/>
<ellipse cx="776.5" cy="186.1" rx="0.7" ry="3.0" fill-opacity="0.36" transform="rotate(8 776.5 186.1)"/>
<ellipse cx="783.6" cy="209.5" rx="3.8" ry="11.0" fill-opacity="0.46" transform="rotate(18 783.6 209.5)"/>
<ellipse cx="783.5" cy="208.5" rx="2.9" ry="6.0" fill-opacity="0.62" transform="rotate(20 783.5 208.5)"/>
<ellipse cx="783.8" cy="208.0" rx="1.7" ry="2.3" fill-opacity="0.41" transform="rotate(20 783.8 208.0)"/>
<ellipse cx="783.1" cy="232.0" rx="3.4" ry="6.6" fill-opacity="0.37" transform="rotate(20 783.1 232.0)"/>
<ellipse cx="783.5" cy="232.0" rx="1.9" ry="2.8" fill-opacity="0.39" transform="rotate(20 783.5 232.0)"/>
<ellipse cx="779.7" cy="185.6" rx="0.7" ry="3.4" fill-opacity="0.35" transform="rotate(8 779.7 185.6)"/>
<ellipse cx="780.8" cy="188.1" rx="0.7" ry="5.9" fill-opacity="0.37" transform="rotate(8 780.8 188.1)"/>
<ellipse cx="782.7" cy="180.3" rx="0.7" ry="6.2" fill-opacity="0.28" transform="rotate(8 782.7 180.3)"/>
<ellipse cx="781.1" cy="141.1" rx="0.8" ry="7.9" fill-opacity="0.30" transform="rotate(3 781.1 141.1)"/>
<ellipse cx="782.9" cy="141.5" rx="0.8" ry="5.6" fill-opacity="0.21" transform="rotate(3 782.9 141.5)"/>
<ellipse cx="781.5" cy="157.2" rx="0.8" ry="6.3" fill-opacity="0.19" transform="rotate(3 781.5 157.2)"/>
<ellipse cx="792.2" cy="209.5" rx="3.8" ry="11.0" fill-opacity="0.45" transform="rotate(18 792.2 209.5)"/>
<ellipse cx="792.5" cy="208.5" rx="2.9" ry="6.0" fill-opacity="0.60" transform="rotate(20 792.5 208.5)"/>
<ellipse cx="792.8" cy="208.0" rx="1.7" ry="2.3" fill-opacity="0.40" transform="rotate(20 792.8 208.0)"/>
<ellipse cx="791.8" cy="232.0" rx="3.4" ry="6.6" fill-opacity="0.36" transform="rotate(20 791.8 232.0)"/>
<ellipse cx="792.5" cy="232.0" rx="1.9" ry="2.8" fill-opacity="0.38" transform="rotate(20 792.5 232.0)"/>
<ellipse cx="788.2" cy="180.4" rx="0.7" ry="5.4" fill-opacity="0.30" transform="rotate(8 788.2 180.4)"/>
<ellipse cx="789.7" cy="180.8" rx="0.7" ry="4.0" fill-opacity="0.36" transform="rotate(8 789.7 180.8)"/>
<ellipse cx="792.2" cy="189.4" rx="0.7" ry="5.7" fill-opacity="0.28" transform="rotate(8 792.2 189.4)"/>
<ellipse cx="794.8" cy="186.5" rx="0.7" ry="5.8" fill-opacity="0.39" transform="rotate(8 794.8 186.5)"/>
<ellipse cx="801.1" cy="209.5" rx="3.8" ry="11.0" fill-opacity="0.39" transform="rotate(18 801.1 209.5)"/>
<ellipse cx="801.6" cy="208.5" rx="2.9" ry="6.0" fill-opacity="0.52" transform="rotate(20 801.6 208.5)"/>
<ellipse cx="801.9" cy="208.0" rx="1.7" ry="2.3" fill-opacity="0.35" transform="rotate(20 801.9 208.0)"/>
<ellipse cx="801.8" cy="232.0" rx="3.4" ry="6.6" fill-opacity="0.31" transform="rotate(20 801.8 232.0)"/>
<ellipse cx="801.6" cy="232.0" rx="1.9" ry="2.8" fill-opacity="0.33" transform="rotate(20 801.6 232.0)"/>
<ellipse cx="797.2" cy="180.5" rx="0.7" ry="3.1" fill-opacity="0.40" transform="rotate(8 797.2 180.5)"/>
<ellipse cx="799.1" cy="183.3" rx="0.7" ry="3.6" fill-opacity="0.34" transform="rotate(8 799.1 183.3)"/>
<ellipse cx="802.2" cy="181.8" rx="0.7" ry="5.0" fill-opacity="0.33" transform="rotate(8 802.2 181.8)"/>
<ellipse cx="799.9" cy="140.4" rx="0.8" ry="4.7" fill-opacity="0.27" transform="rotate(3 799.9 140.4)"/>
<ellipse cx="802.1" cy="139.0" rx="0.8" ry="5.8" fill-opacity="0.23" transform="rotate(3 802.1 139.0)"/>
<ellipse cx="800.4" cy="160.0" rx="0.8" ry="7.0" fill-opacity="0.22" transform="rotate(3 800.4 160.0)"/>
<ellipse cx="801.6" cy="160.3" rx="0.8" ry="4.6" fill-opacity="0.17" transform="rotate(3 801.6 160.3)"/>
<ellipse cx="810.9" cy="209.5" rx="3.8" ry="11.0" fill-opacity="0.36" transform="rotate(18 810.9 209.5)"/>
<ellipse cx="811.4" cy="208.5" rx="2.9" ry="6.0" fill-opacity="0.47" transform="rotate(20 811.4 208.5)"/>
<ellipse cx="811.1" cy="232.0" rx="3.4" ry="6.6" fill-opacity="0.28" transform="rotate(20 811.1 232.0)"/>
<ellipse cx="811.4" cy="232.0" rx="1.9" ry="2.8" fill-opacity="0.30" transform="rotate(20 811.4 232.0)"/>
<ellipse cx="807.2" cy="181.4" rx="0.7" ry="4.4" fill-opacity="0.40" transform="rotate(8 807.2 181.4)"/>
<ellipse cx="809.5" cy="185.9" rx="0.7" ry="3.9" fill-opacity="0.29" transform="rotate(8 809.5 185.9)"/>
<ellipse cx="811.2" cy="184.4" rx="0.7" ry="3.3" fill-opacity="0.33" transform="rotate(8 811.2 184.4)"/>
<ellipse cx="821.2" cy="209.5" rx="3.8" ry="11.0" fill-opacity="0.36" transform="rotate(18 821.2 209.5)"/>
<ellipse cx="820.8" cy="208.5" rx="2.9" ry="6.0" fill-opacity="0.48" transform="rotate(20 820.8 208.5)"/>
<ellipse cx="821.1" cy="208.0" rx="1.7" ry="2.3" fill-opacity="0.32" transform="rotate(20 821.1 208.0)"/>
<ellipse cx="820.7" cy="232.0" rx="3.4" ry="6.6" fill-opacity="0.29" transform="rotate(20 820.7 232.0)"/>
<ellipse cx="820.8" cy="232.0" rx="1.9" ry="2.8" fill-opacity="0.30" transform="rotate(20 820.8 232.0)"/>
<ellipse cx="816.4" cy="185.1" rx="0.7" ry="4.6" fill-opacity="0.33" transform="rotate(8 816.4 185.1)"/>
<ellipse cx="817.8" cy="186.2" rx="0.7" ry="3.8" fill-opacity="0.31" transform="rotate(8 817.8 186.2)"/>
<ellipse cx="819.9" cy="188.9" rx="0.7" ry="5.4" fill-opacity="0.31" transform="rotate(8 819.9 188.9)"/>
<ellipse cx="823.0" cy="189.4" rx="0.7" ry="3.5" fill-opacity="0.31" transform="rotate(8 823.0 189.4)"/>
<ellipse cx="819.1" cy="138.7" rx="0.8" ry="5.5" fill-opacity="0.24" transform="rotate(3 819.1 138.7)"/>
<ellipse cx="820.8" cy="141.6" rx="0.8" ry="6.9" fill-opacity="0.31" transform="rotate(3 820.8 141.6)"/>
<ellipse cx="819.2" cy="160.5" rx="0.8" ry="5.4" fill-opacity="0.18" transform="rotate(3 819.2 160.5)"/>
<ellipse cx="829.3" cy="209.5" rx="3.8" ry="11.0" fill-opacity="0.42" transform="rotate(18 829.3 209.5)"/>
<ellipse cx="829.7" cy="208.5" rx="2.9" ry="6.0" fill-opacity="0.56" transform="rotate(20 829.7 208.5)"/>
<ellipse cx="830.0" cy="208.0" rx="1.7" ry="2.3" fill-opacity="0.37" transform="rotate(20 830.0 208.0)"/>
<ellipse cx="830.0" cy="232.0" rx="3.4" ry="6.6" fill-opacity="0.33" transform="rotate(20 830.0 232.0)"/>
<ellipse cx="829.7" cy="232.0" rx="1.9" ry="2.8" fill-opacity="0.35" transform="rotate(20 829.7 232.0)"/>
<ellipse cx="825.3" cy="189.6" rx="0.7" ry="6.6" fill-opacity="0.34" transform="rotate(8 825.3 189.6)"/>
<ellipse cx="828.0" cy="190.0" rx="0.7" ry="6.4" fill-opacity="0.35" transform="rotate(8 828.0 190.0)"/>
<ellipse cx="830.3" cy="181.4" rx="0.7" ry="4.6" fill-opacity="0.34" transform="rotate(8 830.3 181.4)"/>
<ellipse cx="831.2" cy="187.8" rx="0.7" ry="3.2" fill-opacity="0.35" transform="rotate(8 831.2 187.8)"/>
<ellipse cx="833.6" cy="183.2" rx="0.7" ry="5.4" fill-opacity="0.29" transform="rotate(8 833.6 183.2)"/>
<ellipse cx="839.9" cy="209.5" rx="3.8" ry="11.0" fill-opacity="0.41" transform="rotate(18 839.9 209.5)"/>
<ellipse cx="839.5" cy="208.5" rx="2.9" ry="6.0" fill-opacity="0.54" transform="rotate(20 839.5 208.5)"/>
<ellipse cx="839.1" cy="232.0" rx="3.4" ry="6.6" fill-opacity="0.32" transform="rotate(20 839.1 232.0)"/>
<ellipse cx="839.5" cy="232.0" rx="1.9" ry="2.8" fill-opacity="0.34" transform="rotate(20 839.5 232.0)"/>
<ellipse cx="835.0" cy="186.1" rx="0.7" ry="5.2" fill-opacity="0.30" transform="rotate(8 835.0 186.1)"/>
<ellipse cx="837.0" cy="186.1" rx="0.7" ry="5.9" fill-opacity="0.28" transform="rotate(8 837.0 186.1)"/>
<ellipse cx="839.7" cy="186.3" rx="0.7" ry="5.6" fill-opacity="0.33" transform="rotate(8 839.7 186.3)"/>
<ellipse cx="841.7" cy="180.3" rx="0.7" ry="4.7" fill-opacity="0.39" transform="rotate(8 841.7 180.3)"/>
<ellipse cx="837.4" cy="142.2" rx="0.8" ry="6.0" fill-opacity="0.24" transform="rotate(3 837.4 142.2)"/>
<ellipse cx="838.8" cy="139.8" rx="0.8" ry="7.1" fill-opacity="0.26" transform="rotate(3 838.8 139.8)"/>
<ellipse cx="840.8" cy="139.1" rx="0.8" ry="7.2" fill-opacity="0.32" transform="rotate(3 840.8 139.1)"/>
<ellipse cx="837.0" cy="159.4" rx="0.8" ry="6.7" fill-opacity="0.19" transform="rotate(3 837.0 159.4)"/>
<ellipse cx="848.5" cy="209.5" rx="3.8" ry="11.0" fill-opacity="0.45" transform="rotate(18 848.5 209.5)"/>
<ellipse cx="848.5" cy="208.5" rx="2.9" ry="6.0" fill-opacity="0.60" transform="rotate(20 848.5 208.5)"/>
<ellipse cx="848.8" cy="208.0" rx="1.7" ry="2.3" fill-opacity="0.40" transform="rotate(20 848.8 208.0)"/>
<ellipse cx="848.8" cy="232.0" rx="3.4" ry="6.6" fill-opacity="0.36" transform="rotate(20 848.8 232.0)"/>
<ellipse cx="848.5" cy="232.0" rx="1.9" ry="2.8" fill-opacity="0.38" transform="rotate(20 848.5 232.0)"/>
<ellipse cx="844.7" cy="180.6" rx="0.7" ry="3.4" fill-opacity="0.27" transform="rotate(8 844.7 180.6)"/>
<ellipse cx="846.1" cy="188.2" rx="0.7" ry="5.7" fill-opacity="0.34" transform="rotate(8 846.1 188.2)"/>
<ellipse cx="849.0" cy="183.7" rx="0.7" ry="3.5" fill-opacity="0.35" transform="rotate(8 849.0 183.7)"/>
<ellipse cx="849.8" cy="182.3" rx="0.7" ry="3.1" fill-opacity="0.28" transform="rotate(8 849.8 182.3)"/>
<ellipse cx="857.5" cy="209.5" rx="3.8" ry="11.0" fill-opacity="0.36" transform="rotate(18 857.5 209.5)"/>
<ellipse cx="857.5" cy="208.5" rx="2.9" ry="6.0" fill-opacity="0.48" transform="rotate(20 857.5 208.5)"/>
<ellipse cx="857.8" cy="208.0" rx="1.7" ry="2.3" fill-opacity="0.32" transform="rotate(20 857.8 208.0)"/>
<ellipse cx="857.7" cy="232.0" rx="3.4" ry="6.6" fill-opacity="0.29" transform="rotate(20 857.7 232.0)"/>
<ellipse cx="857.5" cy="232.0" rx="1.9" ry="2.8" fill-opacity="0.30" transform="rotate(20 857.5 232.0)"/>
<ellipse cx="853.7" cy="183.7" rx="0.7" ry="5.6" fill-opacity="0.31" transform="rotate(8 853.7 183.7)"/>
<ellipse cx="855.1" cy="186.4" rx="0.7" ry="4.0" fill-opacity="0.27" transform="rotate(8 855.1 186.4)"/>
<ellipse cx="857.5" cy="183.3" rx="0.7" ry="4.8" fill-opacity="0.30" transform="rotate(8 857.5 183.3)"/>
<ellipse cx="859.5" cy="182.1" rx="0.7" ry="4.8" fill-opacity="0.38" transform="rotate(8 859.5 182.1)"/>
<ellipse cx="856.5" cy="138.7" rx="0.8" ry="5.0" fill-opacity="0.27" transform="rotate(3 856.5 138.7)"/>
<ellipse cx="858.5" cy="142.5" rx="0.8" ry="7.3" fill-opacity="0.23" transform="rotate(3 858.5 142.5)"/>
<ellipse cx="856.9" cy="158.7" rx="0.8" ry="5.1" fill-opacity="0.25" transform="rotate(3 856.9 158.7)"/>
<ellipse cx="858.8" cy="160.7" rx="0.8" ry="6.7" fill-opacity="0.24" transform="rotate(3 858.8 160.7)"/>
<ellipse cx="866.8" cy="209.5" rx="3.8" ry="11.0" fill-opacity="0.36" transform="rotate(18 866.8 209.5)"/>
<ellipse cx="867.1" cy="208.5" rx="2.9" ry="6.0" fill-opacity="0.48" transform="rotate(20 867.1 208.5)"/>
<ellipse cx="867.4" cy="208.0" rx="1.7" ry="2.3" fill-opacity="0.32" transform="rotate(20 867.4 208.0)"/>
<ellipse cx="867.2" cy="232.0" rx="3.4" ry="6.6" fill-opacity="0.29" transform="rotate(20 867.2 232.0)"/>
<ellipse cx="867.1" cy="232.0" rx="1.9" ry="2.8" fill-opacity="0.30" transform="rotate(20 867.1 232.0)"/>
<ellipse cx="863.4" cy="184.4" rx="0.7" ry="5.3" fill-opacity="0.27" transform="rotate(8 863.4 184.4)"/>
<ellipse cx="864.4" cy="181.5" rx="0.7" ry="5.6" fill-opacity="0.30" transform="rotate(8 864.4 181.5)"/>
<ellipse cx="866.8" cy="189.1" rx="0.7" ry="5.9" fill-opacity="0.26" transform="rotate(8 866.8 189.1)"/>
<ellipse cx="868.7" cy="181.4" rx="0.7" ry="3.6" fill-opacity="0.28" transform="rotate(8 868.7 181.4)"/>
<ellipse cx="872.0" cy="187.3" rx="0.7" ry="5.3" fill-opacity="0.28" transform="rotate(8 872.0 187.3)"/>
<ellipse cx="875.9" cy="209.5" rx="3.8" ry="11.0" fill-opacity="0.39" transform="rotate(18 875.9 209.5)"/>
<ellipse cx="876.2" cy="208.5" rx="2.9" ry="6.0" fill-opacity="0.52" transform="rotate(20 876.2 208.5)"/>
<ellipse cx="875.8" cy="232.0" rx="3.4" ry="6.6" fill-opacity="0.31" transform="rotate(20 875.8 232.0)"/>
<ellipse cx="876.2" cy="232.0" rx="1.9" ry="2.8" fill-opacity="0.33" transform="rotate(20 876.2 232.0)"/>
<ellipse cx="871.5" cy="181.4" rx="0.7" ry="6.1" fill-opacity="0.28" transform="rotate(8 871.5 181.4)"/>
<ellipse cx="873.2" cy="186.5" rx="0.7" ry="4.9" fill-opacity="0.39" transform="rotate(8 873.2 186.5)"/>
<ellipse cx="876.6" cy="182.1" rx="0.7" ry="3.2" fill-opacity="0.34" transform="rotate(8 876.6 182.1)"/>
<ellipse cx="873.8" cy="141.1" rx="0.8" ry="4.8" fill-opacity="0.31" transform="rotate(3 873.8 141.1)"/>
<ellipse cx="876.2" cy="141.0" rx="0.8" ry="5.6" fill-opacity="0.29" transform="rotate(3 876.2 141.0)"/>
<ellipse cx="878.0" cy="141.7" rx="0.8" ry="4.6" fill-opacity="0.26" transform="rotate(3 878.0 141.7)"/>
<ellipse cx="874.7" cy="159.1" rx="0.8" ry="6.2" fill-opacity="0.18" transform="rotate(3 874.7 159.1)"/>
<ellipse cx="885.3" cy="209.5" rx="3.8" ry="11.0" fill-opacity="0.37" transform="rotate(18 885.3 209.5)"/>
<ellipse cx="885.3" cy="208.5" rx="2.9" ry="6.0" fill-opacity="0.50" transform="rotate(20 885.3 208.5)"/>
<ellipse cx="885.5" cy="232.0" rx="3.4" ry="6.6" fill-opacity="0.30" transform="rotate(20 885.5 232.0)"/>
<ellipse cx="885.3" cy="232.0" rx="1.9" ry="2.8" fill-opacity="0.31" transform="rotate(20 885.3 232.0)"/>
<ellipse cx="881.2" cy="183.4" rx="0.7" ry="4.7" fill-opacity="0.36" transform="rotate(8 881.2 183.4)"/>
<ellipse cx="883.3" cy="184.6" rx="0.7" ry="3.5" fill-opacity="0.27" transform="rotate(8 883.3 184.6)"/>
<ellipse cx="884.7" cy="188.3" rx="0.7" ry="5.0" fill-opacity="0.35" transform="rotate(8 884.7 188.3)"/>
<ellipse cx="887.2" cy="183.7" rx="0.7" ry="3.7" fill-opacity="0.40" transform="rotate(8 887.2 183.7)"/>
<ellipse cx="893.7" cy="209.5" rx="3.8" ry="11.0" fill-opacity="0.42" transform="rotate(18 893.7 209.5)"/>
<ellipse cx="894.1" cy="208.5" rx="2.9" ry="6.0" fill-opacity="0.57" transform="rotate(20 894.1 208.5)"/>
<ellipse cx="894.4" cy="208.0" rx="1.7" ry="2.3" fill-opacity="0.38" transform="rotate(20 894.4 208.0)"/>
<ellipse cx="894.3" cy="232.0" rx="3.4" ry="6.6" fill-opacity="0.34" transform="rotate(20 894.3 232.0)"/>
<ellipse cx="894.1" cy="232.0" rx="1.9" ry="2.8" fill-opacity="0.36" transform="rotate(20 894.1 232.0)"/>
<ellipse cx="890.3" cy="188.3" rx="0.7" ry="6.2" fill-opacity="0.37" transform="rotate(8 890.3 188.3)"/>
<ellipse cx="891.7" cy="182.4" rx="0.7" ry="6.9" fill-opacity="0.39" transform="rotate(8 891.7 182.4)"/>
<ellipse cx="894.4" cy="181.2" rx="0.7" ry="4.0" fill-opacity="0.33" transform="rotate(8 894.4 181.2)"/>
<ellipse cx="896.3" cy="182.7" rx="0.7" ry="5.8" fill-opacity="0.28" transform="rotate(8 896.3 182.7)"/>
<ellipse cx="898.0" cy="186.8" rx="0.7" ry="3.2" fill-opacity="0.31" transform="rotate(8 898.0 186.8)"/>
<ellipse cx="893.5" cy="139.7" rx="0.8" ry="5.8" fill-opacity="0.21" transform="rotate(3 893.5 139.7)"/>
<ellipse cx="894.7" cy="141.1" rx="0.8" ry="7.6" fill-opacity="0.21" transform="rotate(3 894.7 141.1)"/>
<ellipse cx="893.8" cy="159.0" rx="0.8" ry="4.4" fill-opacity="0.16" transform="rotate(3 893.8 159.0)"/>
<ellipse cx="895.5" cy="160.8" rx="0.8" ry="7.2" fill-opacity="0.24" transform="rotate(3 895.5 160.8)"/>
<ellipse cx="902.7" cy="209.5" rx="3.8" ry="11.0" fill-opacity="0.45" transform="rotate(18 902.7 209.5)"/>
<ellipse cx="902.9" cy="208.5" rx="2.9" ry="6.0" fill-opacity="0.60" transform="rotate(20 902.9 208.5)"/>
<ellipse cx="903.2" cy="208.0" rx="1.7" ry="2.3" fill-opacity="0.40" transform="rotate(20 903.2 208.0)"/>
<ellipse cx="902.3" cy="232.0" rx="3.4" ry="6.6" fill-opacity="0.36" transform="rotate(20 902.3 232.0)"/>
<ellipse cx="902.9" cy="232.0" rx="1.9" ry="2.8" fill-opacity="0.38" transform="rotate(20 902.9 232.0)"/>
<ellipse cx="898.9" cy="183.3" rx="0.7" ry="3.8" fill-opacity="0.28" transform="rotate(8 898.9 183.3)"/>
<ellipse cx="899.9" cy="187.9" rx="0.7" ry="5.4" fill-opacity="0.26" transform="rotate(8 899.9 187.9)"/>
<ellipse cx="902.7" cy="186.0" rx="0.7" ry="4.3" fill-opacity="0.26" transform="rotate(8 902.7 186.0)"/>
<ellipse cx="904.9" cy="183.5" rx="0.7" ry="6.9" fill-opacity="0.31" transform="rotate(8 904.9 183.5)"/>
<ellipse cx="907.9" cy="188.7" rx="0.7" ry="5.3" fill-opacity="0.28" transform="rotate(8 907.9 188.7)"/>
<ellipse cx="911.9" cy="209.5" rx="3.8" ry="11.0" fill-opacity="0.45" transform="rotate(18 911.9 209.5)"/>
<ellipse cx="912.3" cy="208.5" rx="2.9" ry="6.0" fill-opacity="0.60" transform="rotate(20 912.3 208.5)"/>
<ellipse cx="912.6" cy="208.0" rx="1.7" ry="2.3" fill-opacity="0.40" transform="rotate(20 912.6 208.0)"/>
<ellipse cx="911.5" cy="232.0" rx="3.4" ry="6.6" fill-opacity="0.36" transform="rotate(20 911.5 232.0)"/>
<ellipse cx="912.3" cy="232.0" rx="1.9" ry="2.8" fill-opacity="0.38" transform="rotate(20 912.3 232.0)"/>
<ellipse cx="907.3" cy="186.2" rx="0.7" ry="4.2" fill-opacity="0.30" transform="rotate(8 907.3 186.2)"/>
<ellipse cx="909.7" cy="182.9" rx="0.7" ry="3.3" fill-opacity="0.32" transform="rotate(8 909.7 182.9)"/>
<ellipse cx="911.4" cy="181.3" rx="0.7" ry="4.3" fill-opacity="0.28" transform="rotate(8 911.4 181.3)"/>
<ellipse cx="910.9" cy="139.1" rx="0.8" ry="4.7" fill-opacity="0.22" transform="rotate(3 910.9 139.1)"/>
<ellipse cx="913.4" cy="139.7" rx="0.8" ry="6.0" fill-opacity="0.26" transform="rotate(3 913.4 139.7)"/>
<ellipse cx="914.9" cy="139.6" rx="0.8" ry="7.2" fill-opacity="0.24" transform="rotate(3 914.9 139.6)"/>
<ellipse cx="911.8" cy="157.0" rx="0.8" ry="6.2" fill-opacity="0.16" transform="rotate(3 911.8 157.0)"/>
<ellipse cx="913.7" cy="157.3" rx="0.8" ry="5.1" fill-opacity="0.23" transform="rotate(3 913.7 157.3)"/>
<ellipse cx="921.4" cy="209.5" rx="3.8" ry="11.0" fill-opacity="0.42" transform="rotate(18 921.4 209.5)"/>
<ellipse cx="921.3" cy="208.5" rx="2.9" ry="6.0" fill-opacity="0.56" transform="rotate(20 921.3 208.5)"/>
<ellipse cx="921.6" cy="208.0" rx="1.7" ry="2.3" fill-opacity="0.38" transform="rotate(20 921.6 208.0)"/>
<ellipse cx="921.3" cy="232.0" rx="3.4" ry="6.6" fill-opacity="0.34" transform="rotate(20 921.3 232.0)"/>
<ellipse cx="921.3" cy="232.0" rx="1.9" ry="2.8" fill-opacity="0.36" transform="rotate(20 921.3 232.0)"/>
<ellipse cx="916.7" cy="180.4" rx="0.7" ry="3.2" fill-opacity="0.33" transform="rotate(8 916.7 180.4)"/>
<ellipse cx="919.0" cy="186.0" rx="0.7" ry="5.3" fill-opacity="0.34" transform="rotate(8 919.0 186.0)"/>
<ellipse cx="921.2" cy="189.6" rx="0.7" ry="3.9" fill-opacity="0.35" transform="rotate(8 921.2 189.6)"/>
<ellipse cx="930.7" cy="209.5" rx="3.8" ry="11.0" fill-opacity="0.43" transform="rotate(18 930.7 209.5)"/>
<ellipse cx="930.7" cy="208.5" rx="2.9" ry="6.0" fill-opacity="0.57" transform="rotate(20 930.7 208.5)"/>
<ellipse cx="931.0" cy="208.0" rx="1.7" ry="2.3" fill-opacity="0.38" transform="rotate(20 931.0 208.0)"/>
<ellipse cx="930.6" cy="232.0" rx="3.4" ry="6.6" fill-opacity="0.34" transform="rotate(20 930.6 232.0)"/>
<ellipse cx="930.7" cy="232.0" rx="1.9" ry="2.8" fill-opacity="0.36" transform="rotate(20 930.7 232.0)"/>
<ellipse cx="926.6" cy="188.2" rx="0.7" ry="6.7" fill-opacity="0.29" transform="rotate(8 926.6 188.2)"/>
<ellipse cx="927.8" cy="181.6" rx="0.7" ry="3.9" fill-opacity="0.39" transform="rotate(8 927.8 181.6)"/>
<ellipse cx="931.2" cy="184.7" rx="0.7" ry="3.5" fill-opacity="0.31" transform="rotate(8 931.2 184.7)"/>
<ellipse cx="932.4" cy="186.5" rx="0.7" ry="5.9" fill-opacity="0.37" transform="rotate(8 932.4 186.5)"/>
<ellipse cx="934.9" cy="184.6" rx="0.7" ry="4.9" fill-opacity="0.31" transform="rotate(8 934.9 184.6)"/>
<ellipse cx="929.6" cy="141.3" rx="0.8" ry="5.0" fill-opacity="0.26" transform="rotate(3 929.6 141.3)"/>
<ellipse cx="931.1" cy="142.2" rx="0.8" ry="6.4" fill-opacity="0.31" transform="rotate(3 931.1 142.2)"/>
<ellipse cx="933.0" cy="139.4" rx="0.8" ry="5.7" fill-opacity="0.21" transform="rotate(3 933.0 139.4)"/>
<ellipse cx="929.4" cy="158.2" rx="0.8" ry="4.5" fill-opacity="0.21" transform="rotate(3 929.4 158.2)"/>
<ellipse cx="939.7" cy="209.5" rx="3.8" ry="11.0" fill-opacity="0.45" transform="rotate(18 939.7 209.5)"/>
<ellipse cx="939.8" cy="208.5" rx="2.9" ry="6.0" fill-opacity="0.60" transform="rotate(20 939.8 208.5)"/>
<ellipse cx="940.1" cy="208.0" rx="1.7" ry="2.3" fill-opacity="0.40" transform="rotate(20 940.1 208.0)"/>
<ellipse cx="939.0" cy="232.0" rx="3.4" ry="6.6" fill-opacity="0.36" transform="rotate(20 939.0 232.0)"/>
<ellipse cx="939.8" cy="232.0" rx="1.9" ry="2.8" fill-opacity="0.38" transform="rotate(20 939.8 232.0)"/>
<ellipse cx="935.2" cy="187.7" rx="0.7" ry="3.7" fill-opacity="0.37" transform="rotate(8 935.2 187.7)"/>
<ellipse cx="938.2" cy="182.0" rx="0.7" ry="4.5" fill-opacity="0.33" transform="rotate(8 938.2 182.0)"/>
<ellipse cx="939.1" cy="188.4" rx="0.7" ry="3.2" fill-opacity="0.33" transform="rotate(8 939.1 188.4)"/>
<ellipse cx="948.7" cy="209.5" rx="3.8" ry="11.0" fill-opacity="0.36" transform="rotate(18 948.7 209.5)"/>
<ellipse cx="949.1" cy="208.5" rx="2.9" ry="6.0" fill-opacity="0.48" transform="rotate(20 949.1 208.5)"/>
<ellipse cx="949.9" cy="232.0" rx="3.4" ry="6.6" fill-opacity="0.29" transform="rotate(20 949.9 232.0)"/>
<ellipse cx="949.1" cy="232.0" rx="1.9" ry="2.8" fill-opacity="0.31" transform="rotate(20 949.1 232.0)"/>
<ellipse cx="945.3" cy="186.0" rx="0.7" ry="6.8" fill-opacity="0.39" transform="rotate(8 945.3 186.0)"/>
<ellipse cx="946.3" cy="189.9" rx="0.7" ry="3.8" fill-opacity="0.37" transform="rotate(8 946.3 189.9)"/>
<ellipse cx="948.4" cy="183.0" rx="0.7" ry="4.8" fill-opacity="0.38" transform="rotate(8 948.4 183.0)"/>
<ellipse cx="947.0" cy="140.5" rx="0.8" ry="4.7" fill-opacity="0.23" transform="rotate(3 947.0 140.5)"/>
<ellipse cx="948.3" cy="140.2" rx="0.8" ry="7.8" fill-opacity="0.27" transform="rotate(3 948.3 140.2)"/>
<ellipse cx="950.5" cy="138.8" rx="0.8" ry="5.4" fill-opacity="0.29" transform="rotate(3 950.5 138.8)"/>
<ellipse cx="946.9" cy="159.0" rx="0.8" ry="7.1" fill-opacity="0.18" transform="rotate(3 946.9 159.0)"/>
<ellipse cx="948.6" cy="158.2" rx="0.8" ry="7.7" fill-opacity="0.20" transform="rotate(3 948.6 158.2)"/>
<ellipse cx="963.0" cy="209.5" rx="3.8" ry="11.0" fill-opacity="0.25" transform="rotate(18 963.0 209.5)"/>
<ellipse cx="963.0" cy="208.5" rx="2.9" ry="6.0" fill-opacity="0.33" transform="rotate(20 963.0 208.5)"/>
<ellipse cx="963.3" cy="208.0" rx="1.7" ry="2.3" fill-opacity="0.22" transform="rotate(20 963.3 208.0)"/>
<ellipse cx="963.2" cy="232.0" rx="3.4" ry="6.6" fill-opacity="0.20" transform="rotate(20 963.2 232.0)"/>
<ellipse cx="963.0" cy="232.0" rx="1.9" ry="2.8" fill-opacity="0.21" transform="rotate(20 963.0 232.0)"/>
<ellipse cx="957.8" cy="186.2" rx="0.7" ry="3.0" fill-opacity="0.37" transform="rotate(8 957.8 186.2)"/>
<ellipse cx="960.2" cy="182.4" rx="0.7" ry="6.2" fill-opacity="0.34" transform="rotate(8 960.2 182.4)"/>
<ellipse cx="963.3" cy="180.3" rx="0.7" ry="3.0" fill-opacity="0.34" transform="rotate(8 963.3 180.3)"/>
<ellipse cx="973.4" cy="209.5" rx="3.8" ry="11.0" fill-opacity="0.32" transform="rotate(18 973.4 209.5)"/>
<ellipse cx="973.5" cy="208.5" rx="2.9" ry="6.0" fill-opacity="0.42" transform="rotate(20 973.5 208.5)"/>
<ellipse cx="973.8" cy="208.0" rx="1.7" ry="2.3" fill-opacity="0.28" transform="rotate(20 973.8 208.0)"/>
<ellipse cx="974.2" cy="232.0" rx="3.4" ry="6.6" fill-opacity="0.25" transform="rotate(20 974.2 232.0)"/>
<ellipse cx="973.5" cy="232.0" rx="1.9" ry="2.8" fill-opacity="0.27" transform="rotate(20 973.5 232.0)"/>
<ellipse cx="968.4" cy="183.9" rx="0.7" ry="4.1" fill-opacity="0.31" transform="rotate(8 968.4 183.9)"/>
<ellipse cx="971.9" cy="187.0" rx="0.7" ry="6.2" fill-opacity="0.28" transform="rotate(8 971.9 187.0)"/>
<ellipse cx="973.1" cy="189.6" rx="0.7" ry="6.6" fill-opacity="0.38" transform="rotate(8 973.1 189.6)"/>
<ellipse cx="986.4" cy="209.5" rx="3.8" ry="11.0" fill-opacity="0.29" transform="rotate(18 986.4 209.5)"/>
<ellipse cx="986.0" cy="208.5" rx="2.9" ry="6.0" fill-opacity="0.39" transform="rotate(20 986.0 208.5)"/>
<ellipse cx="986.3" cy="208.0" rx="1.7" ry="2.3" fill-opacity="0.26" transform="rotate(20 986.3 208.0)"/>
<ellipse cx="986.7" cy="232.0" rx="3.4" ry="6.6" fill-opacity="0.23" transform="rotate(20 986.7 232.0)"/>
<ellipse cx="986.0" cy="232.0" rx="1.9" ry="2.8" fill-opacity="0.25" transform="rotate(20 986.0 232.0)"/>
<ellipse cx="981.7" cy="181.3" rx="0.7" ry="3.0" fill-opacity="0.34" transform="rotate(8 981.7 181.3)"/>
<ellipse cx="984.3" cy="182.7" rx="0.7" ry="6.6" fill-opacity="0.37" transform="rotate(8 984.3 182.7)"/>
<ellipse cx="999.1" cy="209.5" rx="3.8" ry="11.0" fill-opacity="0.31" transform="rotate(18 999.1 209.5)"/>
<ellipse cx="999.0" cy="208.5" rx="2.9" ry="6.0" fill-opacity="0.41" transform="rotate(20 999.0 208.5)"/>
<ellipse cx="999.3" cy="208.0" rx="1.7" ry="2.3" fill-opacity="0.28" transform="rotate(20 999.3 208.0)"/>
<ellipse cx="998.9" cy="232.0" rx="3.4" ry="6.6" fill-opacity="0.25" transform="rotate(20 998.9 232.0)"/>
<ellipse cx="999.0" cy="232.0" rx="1.9" ry="2.8" fill-opacity="0.26" transform="rotate(20 999.0 232.0)"/>
<ellipse cx="994.1" cy="187.3" rx="0.7" ry="6.5" fill-opacity="0.37" transform="rotate(8 994.1 187.3)"/>
<ellipse cx="996.3" cy="180.8" rx="0.7" ry="5.8" fill-opacity="0.36" transform="rotate(8 996.3 180.8)"/>
<ellipse cx="998.2" cy="189.3" rx="0.7" ry="5.1" fill-opacity="0.26" transform="rotate(8 998.2 189.3)"/>
<ellipse cx="996.9" cy="140.0" rx="0.8" ry="6.1" fill-opacity="0.30" transform="rotate(3 996.9 140.0)"/>
<ellipse cx="998.4" cy="140.7" rx="0.8" ry="6.3" fill-opacity="0.22" transform="rotate(3 998.4 140.7)"/>
<ellipse cx="997.1" cy="158.9" rx="0.8" ry="5.7" fill-opacity="0.21" transform="rotate(3 997.1 158.9)"/>
<ellipse cx="999.4" cy="160.7" rx="0.8" ry="7.6" fill-opacity="0.23" transform="rotate(3 999.4 160.7)"/>
<ellipse cx="1010.7" cy="209.5" rx="3.8" ry="11.0" fill-opacity="0.23" transform="rotate(18 1010.7 209.5)"/>
<ellipse cx="1011.0" cy="208.5" rx="2.9" ry="6.0" fill-opacity="0.31" transform="rotate(20 1011.0 208.5)"/>
<ellipse cx="1011.3" cy="208.0" rx="1.7" ry="2.3" fill-opacity="0.21" transform="rotate(20 1011.3 208.0)"/>
<ellipse cx="1011.3" cy="232.0" rx="3.4" ry="6.6" fill-opacity="0.19" transform="rotate(20 1011.3 232.0)"/>
<ellipse cx="1011.0" cy="232.0" rx="1.9" ry="2.8" fill-opacity="0.20" transform="rotate(20 1011.0 232.0)"/>
<ellipse cx="1006.8" cy="182.9" rx="0.7" ry="5.6" fill-opacity="0.28" transform="rotate(8 1006.8 182.9)"/>
<ellipse cx="1009.4" cy="189.9" rx="0.7" ry="6.8" fill-opacity="0.39" transform="rotate(8 1009.4 189.9)"/>
<ellipse cx="1011.2" cy="181.0" rx="0.7" ry="3.5" fill-opacity="0.27" transform="rotate(8 1011.2 181.0)"/>
<ellipse cx="1024.0" cy="209.5" rx="3.8" ry="11.0" fill-opacity="0.39" transform="rotate(18 1024.0 209.5)"/>
<ellipse cx="1024.0" cy="208.5" rx="2.9" ry="6.0" fill-opacity="0.52" transform="rotate(20 1024.0 208.5)"/>
<ellipse cx="1024.3" cy="208.0" rx="1.7" ry="2.3" fill-opacity="0.35" transform="rotate(20 1024.3 208.0)"/>
<ellipse cx="1023.6" cy="232.0" rx="3.4" ry="6.6" fill-opacity="0.31" transform="rotate(20 1023.6 232.0)"/>
<ellipse cx="1024.0" cy="232.0" rx="1.9" ry="2.8" fill-opacity="0.33" transform="rotate(20 1024.0 232.0)"/>
<ellipse cx="1018.9" cy="183.5" rx="0.7" ry="6.6" fill-opacity="0.37" transform="rotate(8 1018.9 183.5)"/>
<ellipse cx="1022.4" cy="186.0" rx="0.7" ry="5.8" fill-opacity="0.36" transform="rotate(8 1022.4 186.0)"/>
<ellipse cx="1023.3" cy="182.6" rx="0.7" ry="6.8" fill-opacity="0.28" transform="rotate(8 1023.3 182.6)"/>
<ellipse cx="1021.8" cy="141.9" rx="0.8" ry="7.5" fill-opacity="0.30" transform="rotate(3 1021.8 141.9)"/>
<ellipse cx="1023.3" cy="138.8" rx="0.8" ry="7.1" fill-opacity="0.30" transform="rotate(3 1023.3 138.8)"/>
<ellipse cx="1021.3" cy="157.2" rx="0.8" ry="6.9" fill-opacity="0.20" transform="rotate(3 1021.3 157.2)"/>
<ellipse cx="1034.1" cy="209.5" rx="3.8" ry="11.0" fill-opacity="0.46" transform="rotate(18 1034.1 209.5)"/>
<ellipse cx="1033.6" cy="208.5" rx="2.9" ry="6.0" fill-opacity="0.61" transform="rotate(20 1033.6 208.5)"/>
<ellipse cx="1033.9" cy="208.0" rx="1.7" ry="2.3" fill-opacity="0.41" transform="rotate(20 1033.9 208.0)"/>
<ellipse cx="1034.0" cy="232.0" rx="3.4" ry="6.6" fill-opacity="0.37" transform="rotate(20 1034.0 232.0)"/>
<ellipse cx="1033.6" cy="232.0" rx="1.9" ry="2.8" fill-opacity="0.39" transform="rotate(20 1033.6 232.0)"/>
<ellipse cx="1028.8" cy="184.4" rx="0.7" ry="3.2" fill-opacity="0.40" transform="rotate(8 1028.8 184.4)"/>
<ellipse cx="1031.7" cy="183.8" rx="0.7" ry="5.9" fill-opacity="0.32" transform="rotate(8 1031.7 183.8)"/>
<ellipse cx="1034.2" cy="181.5" rx="0.7" ry="4.8" fill-opacity="0.38" transform="rotate(8 1034.2 181.5)"/>
<ellipse cx="1036.1" cy="181.6" rx="0.7" ry="6.9" fill-opacity="0.39" transform="rotate(8 1036.1 181.6)"/>
<ellipse cx="1038.5" cy="181.4" rx="0.7" ry="6.9" fill-opacity="0.37" transform="rotate(8 1038.5 181.4)"/>
<ellipse cx="1042.2" cy="209.5" rx="3.8" ry="11.0" fill-opacity="0.42" transform="rotate(18 1042.2 209.5)"/>
<ellipse cx="1042.5" cy="208.5" rx="2.9" ry="6.0" fill-opacity="0.56" transform="rotate(20 1042.5 208.5)"/>
<ellipse cx="1042.8" cy="208.0" rx="1.7" ry="2.3" fill-opacity="0.38" transform="rotate(20 1042.8 208.0)"/>
<ellipse cx="1042.9" cy="232.0" rx="3.4" ry="6.6" fill-opacity="0.34" transform="rotate(20 1042.9 232.0)"/>
<ellipse cx="1042.5" cy="232.0" rx="1.9" ry="2.8" fill-opacity="0.36" transform="rotate(20 1042.5 232.0)"/>
<ellipse cx="1038.2" cy="187.3" rx="0.7" ry="5.5" fill-opacity="0.31" transform="rotate(8 1038.2 187.3)"/>
<ellipse cx="1040.0" cy="180.7" rx="0.7" ry="5.7" fill-opacity="0.27" transform="rotate(8 1040.0 180.7)"/>
<ellipse cx="1042.7" cy="189.1" rx="0.7" ry="5.7" fill-opacity="0.34" transform="rotate(8 1042.7 189.1)"/>
<ellipse cx="1045.1" cy="189.6" rx="0.7" ry="6.3" fill-opacity="0.40" transform="rotate(8 1045.1 189.6)"/>
<ellipse cx="1046.8" cy="180.1" rx="0.7" ry="5.5" fill-opacity="0.35" transform="rotate(8 1046.8 180.1)"/>
<ellipse cx="1040.6" cy="141.1" rx="0.8" ry="5.6" fill-opacity="0.26" transform="rotate(3 1040.6 141.1)"/>
<ellipse cx="1042.8" cy="139.3" rx="0.8" ry="4.6" fill-opacity="0.27" transform="rotate(3 1042.8 139.3)"/>
<ellipse cx="1044.3" cy="142.1" rx="0.8" ry="6.7" fill-opacity="0.29" transform="rotate(3 1044.3 142.1)"/>
<ellipse cx="1041.1" cy="158.4" rx="0.8" ry="8.0" fill-opacity="0.19" transform="rotate(3 1041.1 158.4)"/>
<ellipse cx="1042.8" cy="159.8" rx="0.8" ry="4.4" fill-opacity="0.18" transform="rotate(3 1042.8 159.8)"/>
<ellipse cx="1044.8" cy="157.5" rx="0.8" ry="6.4" fill-opacity="0.19" transform="rotate(3 1044.8 157.5)"/>
<ellipse cx="1052.0" cy="209.5" rx="3.8" ry="11.0" fill-opacity="0.45" transform="rotate(18 1052.0 209.5)"/>
<ellipse cx="1052.1" cy="208.5" rx="2.9" ry="6.0" fill-opacity="0.60" transform="rotate(20 1052.1 208.5)"/>
<ellipse cx="1051.5" cy="232.0" rx="3.4" ry="6.6" fill-opacity="0.36" transform="rotate(20 1051.5 232.0)"/>
<ellipse cx="1052.1" cy="232.0" rx="1.9" ry="2.8" fill-opacity="0.38" transform="rotate(20 1052.1 232.0)"/>
<ellipse cx="1047.3" cy="183.2" rx="0.7" ry="5.1" fill-opacity="0.32" transform="rotate(8 1047.3 183.2)"/>
<ellipse cx="1050.1" cy="183.4" rx="0.7" ry="6.4" fill-opacity="0.35" transform="rotate(8 1050.1 183.4)"/>
<ellipse cx="1052.3" cy="183.6" rx="0.7" ry="4.6" fill-opacity="0.39" transform="rotate(8 1052.3 183.6)"/>
<ellipse cx="1055.0" cy="187.8" rx="0.7" ry="6.2" fill-opacity="0.40" transform="rotate(8 1055.0 187.8)"/>
<ellipse cx="1055.8" cy="183.1" rx="0.7" ry="4.5" fill-opacity="0.31" transform="rotate(8 1055.8 183.1)"/>
<ellipse cx="1061.6" cy="209.5" rx="3.8" ry="11.0" fill-opacity="0.38" transform="rotate(18 1061.6 209.5)"/>
<ellipse cx="1062.0" cy="208.5" rx="2.9" ry="6.0" fill-opacity="0.51" transform="rotate(20 1062.0 208.5)"/>
<ellipse cx="1062.3" cy="208.0" rx="1.7" ry="2.3" fill-opacity="0.34" transform="rotate(20 1062.3 208.0)"/>
<ellipse cx="1062.0" cy="232.0" rx="3.4" ry="6.6" fill-opacity="0.30" transform="rotate(20 1062.0 232.0)"/>
<ellipse cx="1062.0" cy="232.0" rx="1.9" ry="2.8" fill-opacity="0.32" transform="rotate(20 1062.0 232.0)"/>
<ellipse cx="1056.9" cy="185.7" rx="0.7" ry="5.5" fill-opacity="0.34" transform="rotate(8 1056.9 185.7)"/>
<ellipse cx="1059.1" cy="189.7" rx="0.7" ry="5.0" fill-opacity="0.30" transform="rotate(8 1059.1 189.7)"/>
<ellipse cx="1062.6" cy="183.8" rx="0.7" ry="3.3" fill-opacity="0.35" transform="rotate(8 1062.6 183.8)"/>
<ellipse cx="1063.7" cy="182.2" rx="0.7" ry="4.2" fill-opacity="0.34" transform="rotate(8 1063.7 182.2)"/>
<ellipse cx="1066.0" cy="186.6" rx="0.7" ry="6.6" fill-opacity="0.40" transform="rotate(8 1066.0 186.6)"/>
<ellipse cx="1061.3" cy="139.9" rx="0.8" ry="6.6" fill-opacity="0.30" transform="rotate(3 1061.3 139.9)"/>
<ellipse cx="1062.8" cy="140.6" rx="0.8" ry="6.9" fill-opacity="0.23" transform="rotate(3 1062.8 140.6)"/>
<ellipse cx="1064.8" cy="140.8" rx="0.8" ry="7.4" fill-opacity="0.22" transform="rotate(3 1064.8 140.8)"/>
<ellipse cx="1061.3" cy="158.8" rx="0.8" ry="4.1" fill-opacity="0.22" transform="rotate(3 1061.3 158.8)"/>
<ellipse cx="1062.6" cy="159.1" rx="0.8" ry="7.7" fill-opacity="0.22" transform="rotate(3 1062.6 159.1)"/>
<ellipse cx="1064.5" cy="159.9" rx="0.8" ry="6.8" fill-opacity="0.18" transform="rotate(3 1064.5 159.9)"/>
<ellipse cx="1071.0" cy="209.5" rx="3.8" ry="11.0" fill-opacity="0.44" transform="rotate(18 1071.0 209.5)"/>
<ellipse cx="1070.9" cy="208.5" rx="2.9" ry="6.0" fill-opacity="0.59" transform="rotate(20 1070.9 208.5)"/>
<ellipse cx="1071.2" cy="208.0" rx="1.7" ry="2.3" fill-opacity="0.40" transform="rotate(20 1071.2 208.0)"/>
<ellipse cx="1070.9" cy="232.0" rx="3.4" ry="6.6" fill-opacity="0.36" transform="rotate(20 1070.9 232.0)"/>
<ellipse cx="1070.9" cy="232.0" rx="1.9" ry="2.8" fill-opacity="0.38" transform="rotate(20 1070.9 232.0)"/>
<ellipse cx="1067.0" cy="186.9" rx="0.7" ry="4.2" fill-opacity="0.27" transform="rotate(8 1067.0 186.9)"/>
<ellipse cx="1068.4" cy="182.0" rx="0.7" ry="6.7" fill-opacity="0.27" transform="rotate(8 1068.4 182.0)"/>
<ellipse cx="1070.1" cy="189.9" rx="0.7" ry="6.1" fill-opacity="0.33" transform="rotate(8 1070.1 189.9)"/>
<ellipse cx="1073.0" cy="189.1" rx="0.7" ry="5.8" fill-opacity="0.31" transform="rotate(8 1073.0 189.1)"/>
<ellipse cx="1081.2" cy="209.5" rx="3.8" ry="11.0" fill-opacity="0.40" transform="rotate(18 1081.2 209.5)"/>
<ellipse cx="1080.7" cy="208.5" rx="2.9" ry="6.0" fill-opacity="0.53" transform="rotate(20 1080.7 208.5)"/>
<ellipse cx="1081.0" cy="208.0" rx="1.7" ry="2.3" fill-opacity="0.35" transform="rotate(20 1081.0 208.0)"/>
<ellipse cx="1079.9" cy="232.0" rx="3.4" ry="6.6" fill-opacity="0.32" transform="rotate(20 1079.9 232.0)"/>
<ellipse cx="1080.7" cy="232.0" rx="1.9" ry="2.8" fill-opacity="0.34" transform="rotate(20 1080.7 232.0)"/>
<ellipse cx="1075.7" cy="180.3" rx="0.7" ry="5.0" fill-opacity="0.32" transform="rotate(8 1075.7 180.3)"/>
<ellipse cx="1078.2" cy="189.5" rx="0.7" ry="4.3" fill-opacity="0.38" transform="rotate(8 1078.2 189.5)"/>
<ellipse cx="1080.7" cy="181.0" rx="0.7" ry="3.1" fill-opacity="0.35" transform="rotate(8 1080.7 181.0)"/>
<ellipse cx="1077.8" cy="141.2" rx="0.8" ry="7.4" fill-opacity="0.29" transform="rotate(3 1077.8 141.2)"/>
<ellipse cx="1079.6" cy="139.1" rx="0.8" ry="7.9" fill-opacity="0.31" transform="rotate(3 1079.6 139.1)"/>
<ellipse cx="1078.4" cy="157.2" rx="0.8" ry="5.5" fill-opacity="0.24" transform="rotate(3 1078.4 157.2)"/>
<ellipse cx="1090.3" cy="209.5" rx="3.8" ry="11.0" fill-opacity="0.36" transform="rotate(18 1090.3 209.5)"/>
<ellipse cx="1090.5" cy="208.5" rx="2.9" ry="6.0" fill-opacity="0.48" transform="rotate(20 1090.5 208.5)"/>
<ellipse cx="1090.8" cy="208.0" rx="1.7" ry="2.3" fill-opacity="0.32" transform="rotate(20 1090.8 208.0)"/>
<ellipse cx="1091.3" cy="232.0" rx="3.4" ry="6.6" fill-opacity="0.29" transform="rotate(20 1091.3 232.0)"/>
<ellipse cx="1090.5" cy="232.0" rx="1.9" ry="2.8" fill-opacity="0.30" transform="rotate(20 1090.5 232.0)"/>
<ellipse cx="1086.6" cy="188.7" rx="0.7" ry="3.2" fill-opacity="0.39" transform="rotate(8 1086.6 188.7)"/>
<ellipse cx="1087.8" cy="188.5" rx="0.7" ry="3.9" fill-opacity="0.31" transform="rotate(8 1087.8 188.5)"/>
<ellipse cx="1090.1" cy="181.3" rx="0.7" ry="3.4" fill-opacity="0.36" transform="rotate(8 1090.1 181.3)"/>
<ellipse cx="1092.5" cy="181.2" rx="0.7" ry="5.3" fill-opacity="0.38" transform="rotate(8 1092.5 181.2)"/>
<ellipse cx="1100.0" cy="209.5" rx="3.8" ry="11.0" fill-opacity="0.38" transform="rotate(18 1100.0 209.5)"/>
<ellipse cx="1099.9" cy="208.5" rx="2.9" ry="6.0" fill-opacity="0.51" transform="rotate(20 1099.9 208.5)"/>
<ellipse cx="1100.2" cy="208.0" rx="1.7" ry="2.3" fill-opacity="0.34" transform="rotate(20 1100.2 208.0)"/>
<ellipse cx="1099.4" cy="232.0" rx="3.4" ry="6.6" fill-opacity="0.31" transform="rotate(20 1099.4 232.0)"/>
<ellipse cx="1099.9" cy="232.0" rx="1.9" ry="2.8" fill-opacity="0.32" transform="rotate(20 1099.9 232.0)"/>
<ellipse cx="1096.1" cy="186.9" rx="0.7" ry="3.9" fill-opacity="0.29" transform="rotate(8 1096.1 186.9)"/>
<ellipse cx="1097.6" cy="182.8" rx="0.7" ry="5.2" fill-opacity="0.27" transform="rotate(8 1097.6 182.8)"/>
<ellipse cx="1100.1" cy="184.2" rx="0.7" ry="3.2" fill-opacity="0.28" transform="rotate(8 1100.1 184.2)"/>
<ellipse cx="1102.7" cy="188.5" rx="0.7" ry="6.5" fill-opacity="0.31" transform="rotate(8 1102.7 188.5)"/>
<ellipse cx="1109.4" cy="209.5" rx="3.8" ry="11.0" fill-opacity="0.37" transform="rotate(18 1109.4 209.5)"/>
<ellipse cx="1109.1" cy="208.5" rx="2.9" ry="6.0" fill-opacity="0.50" transform="rotate(20 1109.1 208.5)"/>
<ellipse cx="1108.5" cy="232.0" rx="3.4" ry="6.6" fill-opacity="0.30" transform="rotate(20 1108.5 232.0)"/>
<ellipse cx="1109.1" cy="232.0" rx="1.9" ry="2.8" fill-opacity="0.31" transform="rotate(20 1109.1 232.0)"/>
<ellipse cx="1104.2" cy="184.7" rx="0.7" ry="4.4" fill-opacity="0.38" transform="rotate(8 1104.2 184.7)"/>
<ellipse cx="1107.4" cy="184.2" rx="0.7" ry="6.8" fill-opacity="0.26" transform="rotate(8 1107.4 184.2)"/>
<ellipse cx="1108.7" cy="180.2" rx="0.7" ry="4.0" fill-opacity="0.39" transform="rotate(8 1108.7 180.2)"/>
<ellipse cx="1118.0" cy="209.5" rx="3.8" ry="11.0" fill-opacity="0.47" transform="rotate(18 1118.0 209.5)"/>
<ellipse cx="1118.0" cy="208.5" rx="2.9" ry="6.0" fill-opacity="0.63" transform="rotate(20 1118.0 208.5)"/>
<ellipse cx="1118.3" cy="208.0" rx="1.7" ry="2.3" fill-opacity="0.42" transform="rotate(20 1118.3 208.0)"/>
<ellipse cx="1117.9" cy="232.0" rx="3.4" ry="6.6" fill-opacity="0.38" transform="rotate(20 1117.9 232.0)"/>
<ellipse cx="1118.0" cy="232.0" rx="1.9" ry="2.8" fill-opacity="0.40" transform="rotate(20 1118.0 232.0)"/>
<ellipse cx="1113.4" cy="180.3" rx="0.7" ry="6.5" fill-opacity="0.36" transform="rotate(8 1113.4 180.3)"/>
<ellipse cx="1116.1" cy="184.9" rx="0.7" ry="6.6" fill-opacity="0.38" transform="rotate(8 1116.1 184.9)"/>
<ellipse cx="1118.4" cy="188.1" rx="0.7" ry="3.9" fill-opacity="0.31" transform="rotate(8 1118.4 188.1)"/>
<ellipse cx="1119.3" cy="187.6" rx="0.7" ry="4.9" fill-opacity="0.40" transform="rotate(8 1119.3 187.6)"/>
<ellipse cx="1116.2" cy="142.0" rx="0.8" ry="7.7" fill-opacity="0.23" transform="rotate(3 1116.2 142.0)"/>
<ellipse cx="1117.9" cy="138.8" rx="0.8" ry="6.9" fill-opacity="0.31" transform="rotate(3 1117.9 138.8)"/>
<ellipse cx="1119.6" cy="139.1" rx="0.8" ry="6.5" fill-opacity="0.21" transform="rotate(3 1119.6 139.1)"/>
<ellipse cx="1116.8" cy="160.0" rx="0.8" ry="5.9" fill-opacity="0.17" transform="rotate(3 1116.8 160.0)"/>
<ellipse cx="1117.7" cy="158.5" rx="0.8" ry="6.0" fill-opacity="0.23" transform="rotate(3 1117.7 158.5)"/>
<ellipse cx="1126.3" cy="209.5" rx="3.8" ry="11.0" fill-opacity="0.47" transform="rotate(18 1126.3 209.5)"/>
<ellipse cx="1126.7" cy="208.5" rx="2.9" ry="6.0" fill-opacity="0.62" transform="rotate(20 1126.7 208.5)"/>
<ellipse cx="1127.0" cy="208.0" rx="1.7" ry="2.3" fill-opacity="0.41" transform="rotate(20 1127.0 208.0)"/>
<ellipse cx="1127.3" cy="232.0" rx="3.4" ry="6.6" fill-opacity="0.37" transform="rotate(20 1127.3 232.0)"/>
<ellipse cx="1126.7" cy="232.0" rx="1.9" ry="2.8" fill-opacity="0.39" transform="rotate(20 1126.7 232.0)"/>
<ellipse cx="1122.1" cy="180.6" rx="0.7" ry="3.5" fill-opacity="0.27" transform="rotate(8 1122.1 180.6)"/>
<ellipse cx="1124.3" cy="181.4" rx="0.7" ry="6.3" fill-opacity="0.35" transform="rotate(8 1124.3 181.4)"/>
<ellipse cx="1127.2" cy="185.5" rx="0.7" ry="3.6" fill-opacity="0.30" transform="rotate(8 1127.2 185.5)"/>
<ellipse cx="1129.3" cy="185.8" rx="0.7" ry="5.6" fill-opacity="0.35" transform="rotate(8 1129.3 185.8)"/>
<ellipse cx="1130.3" cy="182.0" rx="0.7" ry="4.7" fill-opacity="0.38" transform="rotate(8 1130.3 182.0)"/>
<ellipse cx="1136.6" cy="209.5" rx="3.8" ry="11.0" fill-opacity="0.47" transform="rotate(18 1136.6 209.5)"/>
<ellipse cx="1136.6" cy="208.5" rx="2.9" ry="6.0" fill-opacity="0.62" transform="rotate(20 1136.6 208.5)"/>
<ellipse cx="1136.9" cy="208.0" rx="1.7" ry="2.3" fill-opacity="0.41" transform="rotate(20 1136.9 208.0)"/>
<ellipse cx="1135.6" cy="232.0" rx="3.4" ry="6.6" fill-opacity="0.37" transform="rotate(20 1135.6 232.0)"/>
<ellipse cx="1136.6" cy="232.0" rx="1.9" ry="2.8" fill-opacity="0.39" transform="rotate(20 1136.6 232.0)"/>
<ellipse cx="1131.8" cy="188.4" rx="0.7" ry="5.0" fill-opacity="0.33" transform="rotate(8 1131.8 188.4)"/>
<ellipse cx="1133.8" cy="184.1" rx="0.7" ry="3.4" fill-opacity="0.38" transform="rotate(8 1133.8 184.1)"/>
<ellipse cx="1136.3" cy="186.5" rx="0.7" ry="4.4" fill-opacity="0.31" transform="rotate(8 1136.3 186.5)"/>
<ellipse cx="1138.1" cy="182.0" rx="0.7" ry="6.9" fill-opacity="0.33" transform="rotate(8 1138.1 182.0)"/>
<ellipse cx="1141.2" cy="185.6" rx="0.7" ry="4.1" fill-opacity="0.29" transform="rotate(8 1141.2 185.6)"/>
<ellipse cx="1135.7" cy="139.9" rx="0.8" ry="7.8" fill-opacity="0.27" transform="rotate(3 1135.7 139.9)"/>
<ellipse cx="1137.0" cy="141.1" rx="0.8" ry="5.6" fill-opacity="0.21" transform="rotate(3 1137.0 141.1)"/>
<ellipse cx="1135.8" cy="158.0" rx="0.8" ry="4.3" fill-opacity="0.17" transform="rotate(3 1135.8 158.0)"/>
<ellipse cx="1145.9" cy="209.5" rx="3.8" ry="11.0" fill-opacity="0.43" transform="rotate(18 1145.9 209.5)"/>
<ellipse cx="1145.5" cy="208.5" rx="2.9" ry="6.0" fill-opacity="0.58" transform="rotate(20 1145.5 208.5)"/>
<ellipse cx="1145.8" cy="208.0" rx="1.7" ry="2.3" fill-opacity="0.38" transform="rotate(20 1145.8 208.0)"/>
<ellipse cx="1144.9" cy="232.0" rx="3.4" ry="6.6" fill-opacity="0.35" transform="rotate(20 1144.9 232.0)"/>
<ellipse cx="1145.5" cy="232.0" rx="1.9" ry="2.8" fill-opacity="0.37" transform="rotate(20 1145.5 232.0)"/>
<ellipse cx="1141.6" cy="188.3" rx="0.7" ry="6.9" fill-opacity="0.34" transform="rotate(8 1141.6 188.3)"/>
<ellipse cx="1143.9" cy="186.2" rx="0.7" ry="5.3" fill-opacity="0.31" transform="rotate(8 1143.9 186.2)"/>
<ellipse cx="1145.2" cy="185.7" rx="0.7" ry="4.0" fill-opacity="0.35" transform="rotate(8 1145.2 185.7)"/>
<ellipse cx="1155.3" cy="209.5" rx="3.8" ry="11.0" fill-opacity="0.46" transform="rotate(18 1155.3 209.5)"/>
<ellipse cx="1155.1" cy="208.5" rx="2.9" ry="6.0" fill-opacity="0.61" transform="rotate(20 1155.1 208.5)"/>
<ellipse cx="1155.4" cy="208.0" rx="1.7" ry="2.3" fill-opacity="0.41" transform="rotate(20 1155.4 208.0)"/>
<ellipse cx="1154.1" cy="232.0" rx="3.4" ry="6.6" fill-opacity="0.36" transform="rotate(20 1154.1 232.0)"/>
<ellipse cx="1155.1" cy="232.0" rx="1.9" ry="2.8" fill-opacity="0.39" transform="rotate(20 1155.1 232.0)"/>
<ellipse cx="1150.0" cy="181.4" rx="0.7" ry="6.2" fill-opacity="0.30" transform="rotate(8 1150.0 181.4)"/>
<ellipse cx="1153.4" cy="188.2" rx="0.7" ry="3.1" fill-opacity="0.28" transform="rotate(8 1153.4 188.2)"/>
<ellipse cx="1155.4" cy="186.0" rx="0.7" ry="4.2" fill-opacity="0.34" transform="rotate(8 1155.4 186.0)"/>
<ellipse cx="1156.9" cy="181.1" rx="0.7" ry="6.7" fill-opacity="0.26" transform="rotate(8 1156.9 181.1)"/>
<ellipse cx="1153.9" cy="141.7" rx="0.8" ry="4.8" fill-opacity="0.23" transform="rotate(3 1153.9 141.7)"/>
<ellipse cx="1155.8" cy="139.3" rx="0.8" ry="5.2" fill-opacity="0.21" transform="rotate(3 1155.8 139.3)"/>
<ellipse cx="1157.8" cy="139.2" rx="0.8" ry="6.7" fill-opacity="0.27" transform="rotate(3 1157.8 139.2)"/>
<ellipse cx="1154.7" cy="158.9" rx="0.8" ry="4.6" fill-opacity="0.20" transform="rotate(3 1154.7 158.9)"/>
<ellipse cx="1156.3" cy="159.1" rx="0.8" ry="5.1" fill-opacity="0.16" transform="rotate(3 1156.3 159.1)"/>
<ellipse cx="1158.5" cy="158.2" rx="0.8" ry="5.1" fill-opacity="0.23" transform="rotate(3 1158.5 158.2)"/>
</g></g>
</svg>
<svg class="a" style="left:0;top:0" width="1190" height="78">
<polygon points="15,27.5 15,40.5 27,35.5 33,35.5 33,32.5 27,32.5" fill="#000"/>
<rect x="58" y="28" width="14.5" height="12" fill="#000"/>
<rect x="99" y="28.5" width="13" height="8.0" fill="#fff" stroke="#000" stroke-width="1.25"/>
<line x1="97" y1="31.5" x2="99" y2="31.5" stroke="#000"/>
<line x1="97" y1="34.5" x2="99" y2="34.5" stroke="#000"/>
<rect x="101.5" y="31.5" width="12.0" height="8.0" fill="#fff" stroke="#000" stroke-width="1.25"/>
<line x1="99.5" y1="34.5" x2="101.5" y2="34.5" stroke="#000"/>
<line x1="99.5" y1="37.5" x2="101.5" y2="37.5" stroke="#000"/>
<line x1="104.5" y1="39.5" x2="104.5" y2="41.5" stroke="#000"/>
<line x1="108.5" y1="39.5" x2="108.5" y2="41.5" stroke="#000"/>
<line x1="112.5" y1="39.5" x2="112.5" y2="41.5" stroke="#000"/>
<path d="M104.5 35 Q107.5 33 110.5 35 M104.5 38 L110.5 38" stroke="#666" fill="none"/>
<rect x="124.5" y="27.5" width="13" height="13" fill="#000"/>
<rect x="127" y="28.5" width="8" height="5.5" fill="#c8c8c8"/>
<rect x="126" y="28.5" width="1" height="11" fill="#888"/>
<rect x="132" y="36" width="2.5" height="3.5" fill="#ddd"/>
<rect x="136" y="28.5" width="1.2" height="1.2" fill="#fff"/>
<rect x="148.5" y="27.5" width="15.5" height="13" fill="#fff" stroke="#000" stroke-width="1.5"/>
<rect x="150.5" y="29" width="2" height="2.5" fill="#000"/><rect x="150.5" y="31.5" width="2" height="7" fill="#aaa"/>
<path d="M154.5 38.5 L154.5 34 Q156 30 161.5 29.2" stroke="#000" stroke-width="1.2" fill="none"/>
<rect x="173.5" y="27.5" width="15" height="13" fill="#fff" stroke="#000" stroke-width="1.5"/>
<polygon points="181,29.5 174.5,39.8 187.5,39.8" fill="#8e8e8e" stroke="#000" stroke-width="1" stroke-dasharray="1 1"/>
<rect x="204" y="28.5" width="14" height="12.0" fill="#fff" stroke="#000" stroke-width="1.25"/>
<line x1="202" y1="31.5" x2="204" y2="31.5" stroke="#000"/>
<line x1="202" y1="34.5" x2="204" y2="34.5" stroke="#000"/>
<line x1="202" y1="37.5" x2="204" y2="37.5" stroke="#000"/>
<line x1="207.5" y1="40.5" x2="207.5" y2="42.5" stroke="#000"/>
<line x1="211.5" y1="40.5" x2="211.5" y2="42.5" stroke="#000"/>
<line x1="215.5" y1="40.5" x2="215.5" y2="42.5" stroke="#000"/>
<line x1="206" y1="31" x2="216" y2="31" stroke="#d02020" stroke-width="1.2"/>
<path d="M207 35 Q211 32.5 215 35 M207 38.5 L215 38.5" stroke="#444" fill="none"/>
<rect x="230" y="33" width="12" height="8.5" fill="#fff" stroke="#000" stroke-width="1.25"/>
<line x1="228" y1="36.5" x2="230" y2="36.5" stroke="#000"/>
<line x1="228" y1="39.5" x2="230" y2="39.5" stroke="#000"/>
<line x1="233.5" y1="41.5" x2="233.5" y2="43.5" stroke="#000"/>
<line x1="237.5" y1="41.5" x2="237.5" y2="43.5" stroke="#000"/>
<line x1="241.5" y1="41.5" x2="241.5" y2="43.5" stroke="#000"/>
<line x1="231" y1="29" x2="244" y2="29" stroke="#000" stroke-width="1.2"/>
<line x1="232.5" y1="27" x2="232.5" y2="31" stroke="#000"/>
<line x1="234.5" y1="27" x2="234.5" y2="31" stroke="#000"/>
<line x1="236.5" y1="27" x2="236.5" y2="31" stroke="#000"/>
<line x1="238.5" y1="27" x2="238.5" y2="31" stroke="#000"/>
<line x1="240.5" y1="27" x2="240.5" y2="31" stroke="#000"/>
<line x1="242.5" y1="27" x2="242.5" y2="31" stroke="#000"/>
<path d="M232.5 37 L239.5 37 M232.5 39.5 L239.5 39.5" stroke="#444" fill="none"/>
<line x1="227" y1="36" x2="230" y2="36" stroke="#000"/><line x1="227" y1="38" x2="230" y2="38" stroke="#000"/>
<rect x="254" y="29" width="13" height="10" fill="#fff" stroke="#000" stroke-width="1.5"/>
<defs><pattern id="chk" width="2" height="2" patternUnits="userSpaceOnUse"><rect width="1" height="1" fill="#000"/><rect x="1" y="1" width="1" height="1" fill="#000"/></pattern></defs>
<rect x="260" y="30" width="6.5" height="8.5" fill="url(#chk)"/>
<path d="M256 31 L259 31 M256 33.5 L258.5 33.5 M256 36 L259 36" stroke="#000"/>
<path d="M252.5 27 L252.5 40" stroke="#000" stroke-dasharray="1.5 1.5"/><path d="M256 41.5 L270 41.5" stroke="#000" stroke-width="1.2" stroke-dasharray="2 1.5"/>
<rect x="279" y="28" width="10" height="12" fill="#fff" stroke="#000" stroke-width="1.5"/>
<line x1="284.5" y1="28" x2="284.5" y2="41" stroke="#1010c0" stroke-width="1.2"/><line x1="279" y1="34" x2="285" y2="34" stroke="#000"/>
<text x="286.5" y="40" font-family="Liberation Sans" font-weight="bold" font-size="12.5" fill="#858585" style="-webkit-font-smoothing:grayscale">S</text>
<path d="M311 27.5 L318 27.5 L316.5 31.5 L309.5 31.5 Z" fill="#fff" stroke="#000"/>
<path d="M305.5 32 L319 32 L320 34 L320 40 L305 40 L304 38 L304 34 Z" fill="#c8c8c8" stroke="#000" stroke-width="1.3"/>
<line x1="305" y1="36" x2="319" y2="36" stroke="#000"/><line x1="311" y1="37.5" x2="316" y2="37.5" stroke="#000"/>
<path d="M328.5 31.5 L332 31.5 L333 32.5 L337 32.5 L337 34 L331.5 34 L328.5 39.5 Z" fill="#fff" stroke="#000" stroke-width="1.1"/>
<path d="M331.5 34 L343.5 34 L340 39.5 L328.5 39.5 Z" fill="#808080" stroke="#000" stroke-width="1.1"/>
<path d="M337.5 30 Q340 27 343 29.5 M341.5 28.5 L343 29.8 L343.5 27.5" stroke="#000" fill="none"/>
<path d="M356.5 28 L353.5 31.8 L356.5 35.5" stroke="#000" stroke-width="1.4" fill="none"/>
<path d="M366 28 L369 31.8 L366 35.5" stroke="#000" stroke-width="1.4" fill="none"/>
<rect x="204.5" y="52" width="14.0" height="11.5" fill="#fff" stroke="#000" stroke-width="1.25"/>
<line x1="202.5" y1="55.5" x2="204.5" y2="55.5" stroke="#000"/>
<line x1="202.5" y1="58.5" x2="204.5" y2="58.5" stroke="#000"/>
<line x1="202.5" y1="61.5" x2="204.5" y2="61.5" stroke="#000"/>
<line x1="207.5" y1="63.5" x2="207.5" y2="65.5" stroke="#000"/>
<line x1="211.5" y1="63.5" x2="211.5" y2="65.5" stroke="#000"/>
<line x1="215.5" y1="63.5" x2="215.5" y2="65.5" stroke="#000"/>
<path d="M208.5 52 L208.5 63.5 M214 52 L214 63.5" stroke="#000" stroke-width="1.3"/><path d="M210 57 L213 57 M210 60 L213 60" stroke="#444"/>
<rect x="229" y="51.5" width="13" height="11.5" fill="#fff" stroke="#000" stroke-width="1.25"/>
<line x1="227" y1="54.5" x2="229" y2="54.5" stroke="#000"/>
<line x1="227" y1="57.5" x2="229" y2="57.5" stroke="#000"/>
<line x1="227" y1="60.5" x2="229" y2="60.5" stroke="#000"/>
<line x1="232.5" y1="63" x2="232.5" y2="65" stroke="#000"/>
<line x1="236.5" y1="63" x2="236.5" y2="65" stroke="#000"/>
<line x1="240.5" y1="63" x2="240.5" y2="65" stroke="#000"/>
<path d="M232.5 51.5 L232.5 63 M229 54 L242 54" stroke="#000" stroke-width="1.2"/><path d="M234.5 57.5 L239.5 57.5 M234.5 60 L239.5 60" stroke="#444"/>
<rect x="254" y="51.5" width="13" height="11.5" fill="#fff" stroke="#000" stroke-width="1.25"/>
<line x1="252" y1="54.5" x2="254" y2="54.5" stroke="#000"/>
<line x1="252" y1="57.5" x2="254" y2="57.5" stroke="#000"/>
<line x1="252" y1="60.5" x2="254" y2="60.5" stroke="#000"/>
<line x1="257.5" y1="63" x2="257.5" y2="65" stroke="#000"/>
<line x1="261.5" y1="63" x2="261.5" y2="65" stroke="#000"/>
<line x1="265.5" y1="63" x2="265.5" y2="65" stroke="#000"/>
<path d="M260.5 51.5 L260.5 63 M254 57.5 L267 57.5" stroke="#000" stroke-width="1.3"/><path d="M256 54 Q258 53 259 54.5 M262 54.5 Q264 53 265.5 54 M256 60.5 Q258 59 259 60 M262 60 Q264 59 265.5 60.5" stroke="#666" fill="none"/>
<rect x="279" y="51.5" width="13" height="11.5" fill="#fff" stroke="#000" stroke-width="1.25"/>
<line x1="277" y1="54.5" x2="279" y2="54.5" stroke="#000"/>
<line x1="277" y1="57.5" x2="279" y2="57.5" stroke="#000"/>
<line x1="277" y1="60.5" x2="279" y2="60.5" stroke="#000"/>
<line x1="282.5" y1="63" x2="282.5" y2="65" stroke="#000"/>
<line x1="286.5" y1="63" x2="286.5" y2="65" stroke="#000"/>
<line x1="290.5" y1="63" x2="290.5" y2="65" stroke="#000"/>
<path d="M285.5 51.5 L285.5 63 M279 57.5 L292 57.5" stroke="#1010c0" stroke-width="1.3"/><path d="M281 54 Q283 53 284 54.5 M287 54.5 Q289 53 290.5 54 M281 60.5 Q283 59 284 60 M287 60 Q289 59 290.5 60.5" stroke="#666" fill="none"/>
<rect x="304" y="51.5" width="13" height="11.5" fill="#fff" stroke="#000" stroke-width="1.25"/>
<line x1="302" y1="54.5" x2="304" y2="54.5" stroke="#000"/>
<line x1="302" y1="57.5" x2="304" y2="57.5" stroke="#000"/>
<line x1="302" y1="60.5" x2="304" y2="60.5" stroke="#000"/>
<line x1="307.5" y1="63" x2="307.5" y2="65" stroke="#000"/>
<line x1="311.5" y1="63" x2="311.5" y2="65" stroke="#000"/>
<line x1="315.5" y1="63" x2="315.5" y2="65" stroke="#000"/>
<rect x="307.5" y="53.5" width="6" height="4.5" fill="#fff" stroke="#000" stroke-width="1.2"/><path d="M307 61 L314 61" stroke="#444"/>
<rect x="329" y="51.5" width="13" height="11.5" fill="#fff" stroke="#000" stroke-width="1.25"/>
<line x1="327" y1="54.5" x2="329" y2="54.5" stroke="#000"/>
<line x1="327" y1="57.5" x2="329" y2="57.5" stroke="#000"/>
<line x1="327" y1="60.5" x2="329" y2="60.5" stroke="#000"/>
<line x1="332.5" y1="63" x2="332.5" y2="65" stroke="#000"/>
<line x1="336.5" y1="63" x2="336.5" y2="65" stroke="#000"/>
<line x1="340.5" y1="63" x2="340.5" y2="65" stroke="#000"/>
<path d="M334 59 L341 51" stroke="#000" stroke-width="2.6" stroke-linecap="round"/><path d="M334 59 L341 51" stroke="#bbb" stroke-width="1" stroke-linecap="round"/><path d="M332 61 L338 61" stroke="#444"/>
<rect x="1025.8" y="28.3" width="67" height="35.2" fill="#c0c0c0" stroke="#000" stroke-width="1.5"/>
<line x1="1026" y1="30" x2="1092.5" y2="30" stroke="#000"/><line x1="1027" y1="31.5" x2="1092" y2="31.5" stroke="#000" stroke-dasharray="4 1"/>
<clipPath id="lc"><rect x="1026.5" y="30.5" width="66" height="27"/></clipPath>
<path clip-path="url(#lc)" d="M983.0 30.5 L1010.0 57.5 M1010.0 30.5 L983.0 57.5 M991.2 30.5 L1018.2 57.5 M1018.2 30.5 L991.2 57.5 M999.4 30.5 L1026.4 57.5 M1026.4 30.5 L999.4 57.5 M1007.6 30.5 L1034.6 57.5 M1034.6 30.5 L1007.6 57.5 M1015.8 30.5 L1042.8 57.5 M1042.8 30.5 L1015.8 57.5 M1024.0 30.5 L1051.0 57.5 M1051.0 30.5 L1024.0 57.5 M1032.2 30.5 L1059.2 57.5 M1059.2 30.5 L1032.2 57.5 M1040.4 30.5 L1067.4 57.5 M1067.4 30.5 L1040.4 57.5 M1048.6 30.5 L1075.6 57.5 M1075.6 30.5 L1048.6 57.5 M1056.8 30.5 L1083.8 57.5 M1083.8 30.5 L1056.8 57.5 M1065.0 30.5 L1092.0 57.5 M1092.0 30.5 L1065.0 57.5 M1073.2 30.5 L1100.2 57.5 M1100.2 30.5 L1073.2 57.5 M1081.4 30.5 L1108.4 57.5 M1108.4 30.5 L1081.4 57.5 M1089.6 30.5 L1116.6 57.5 M1116.6 30.5 L1089.6 57.5 M1097.8 30.5 L1124.8 57.5 M1124.8 30.5 L1097.8 57.5 M1106.0 30.5 L1133.0 57.5 M1133.0 30.5 L1106.0 57.5 M1114.2 30.5 L1141.2 57.5 M1141.2 30.5 L1114.2 57.5 M1122.4 30.5 L1149.4 57.5 M1149.4 30.5 L1122.4 57.5" stroke="#000" stroke-width="0.95" fill="none"/>
<path d="M1029.0 58 Q1031.5 60 1034.0 58 M1037.2 58 Q1039.7 60 1042.2 58 M1045.4 58 Q1047.9 60 1050.4 58 M1053.6 58 Q1056.1 60 1058.6 58 M1061.8 58 Q1064.3 60 1066.8 58 M1070.0 58 Q1072.5 60 1075.0 58 M1078.2 58 Q1080.7 60 1083.2 58 M1086.4 58 Q1088.9 60 1091.4 58" stroke="#000" stroke-width="1.4" fill="none"/>
<rect x="1110.5" y="28.3" width="67" height="35.2" fill="#c0c0c0" stroke="#000" stroke-width="1.5"/>
<defs><linearGradient id="jet" x1="0" y1="0" x2="0" y2="1"><stop offset="0" stop-color="#e00000"/><stop offset="0.12" stop-color="#ff8000"/><stop offset="0.3" stop-color="#ffff00"/><stop offset="0.5" stop-color="#40e080"/><stop offset="0.7" stop-color="#00c0ff"/><stop offset="0.88" stop-color="#0020c0"/><stop offset="1" stop-color="#000030"/></linearGradient></defs>
<rect x="1112" y="30" width="10.5" height="32" fill="url(#jet)"/>
<line x1="1123.3" y1="28.5" x2="1123.3" y2="63.5" stroke="#000" stroke-width="1.3"/>
<path d="M1125.5 62 L1125.5 55 L1126.5 52 L1127.5 49 L1129 46 L1131 43 L1133 40.5 L1136 38 L1139 36 L1143 34 L1149 32.5 L1155 32.5 L1155 31 L1175 31 L1175 30" stroke="#000" stroke-width="1.6" fill="none"/>
<rect x="393.20" y="28" width="37.33" height="16.5" fill="#050000"/>
<rect x="430.23" y="28" width="37.33" height="16.5" fill="#000096"/>
<rect x="467.26" y="28" width="37.33" height="16.5" fill="#0a1ec8"/>
<rect x="504.29" y="28" width="37.33" height="16.5" fill="#0a6ee0"/>
<rect x="541.32" y="28" width="37.33" height="16.5" fill="#0aa0ff"/>
<rect x="578.35" y="28" width="37.33" height="16.5" fill="#0ad2ff"/>
<rect x="615.38" y="28" width="37.33" height="16.5" fill="#0adcd2"/>
<rect x="652.41" y="28" width="37.33" height="16.5" fill="#28e6a0"/>
<rect x="689.44" y="28" width="37.33" height="16.5" fill="#3ce68c"/>
<rect x="726.47" y="28" width="37.33" height="16.5" fill="#5af064"/>
<rect x="763.50" y="28" width="37.33" height="16.5" fill="#d2ff0a"/>
<rect x="800.53" y="28" width="37.33" height="16.5" fill="#fff500"/>
<rect x="837.56" y="28" width="37.33" height="16.5" fill="#ffdc00"/>
<rect x="874.59" y="28" width="37.33" height="16.5" fill="#ff9600"/>
<rect x="911.62" y="28" width="37.33" height="16.5" fill="#ff5000"/>
<rect x="948.65" y="28" width="38.35" height="16.5" fill="#e60000"/>
<rect x="392.5" y="27.5" width="595" height="17.5" fill="none" stroke="#000"/>
<line x1="430.5" y1="45" x2="430.5" y2="48.5" stroke="#000"/>
<line x1="467.5" y1="45" x2="467.5" y2="48.5" stroke="#000"/>
<line x1="504.5" y1="45" x2="504.5" y2="48.5" stroke="#000"/>
<line x1="541.5" y1="45" x2="541.5" y2="48.5" stroke="#000"/>
<line x1="578.5" y1="45" x2="578.5" y2="48.5" stroke="#000"/>
<line x1="615.5" y1="45" x2="615.5" y2="48.5" stroke="#000"/>
<line x1="652.5" y1="45" x2="652.5" y2="48.5" stroke="#000"/>
<line x1="689.5" y1="45" x2="689.5" y2="48.5" stroke="#000"/>
<line x1="726.5" y1="45" x2="726.5" y2="48.5" stroke="#000"/>
<line x1="763.5" y1="45" x2="763.5" y2="48.5" stroke="#000"/>
<line x1="800.5" y1="45" x2="800.5" y2="48.5" stroke="#000"/>
<line x1="837.5" y1="45" x2="837.5" y2="48.5" stroke="#000"/>
<line x1="874.5" y1="45" x2="874.5" y2="48.5" stroke="#000"/>
<line x1="911.5" y1="45" x2="911.5" y2="48.5" stroke="#000"/>
<line x1="948.5" y1="45" x2="948.5" y2="48.5" stroke="#000"/>
</svg>
<div class="a" style="left:0;top:356.5px;width:1190px;height:1.5px;background:#000"></div>
<div class="a" style="left:0;top:358px;width:1190px;height:1px;background:#fff"></div>
<div class="a" style="left:0;top:358.5px;width:1190px;height:5px;background:#d6d6d6;overflow:hidden"><div class="t" style="left:3px;top:2.8px;font-size:12px;color:#222;-webkit-text-stroke:0">Cursor: hold left button, drag to select an area, double-click left to zoom in, right click to zoom out, shift left click to mark</div></div>
</body></html>
